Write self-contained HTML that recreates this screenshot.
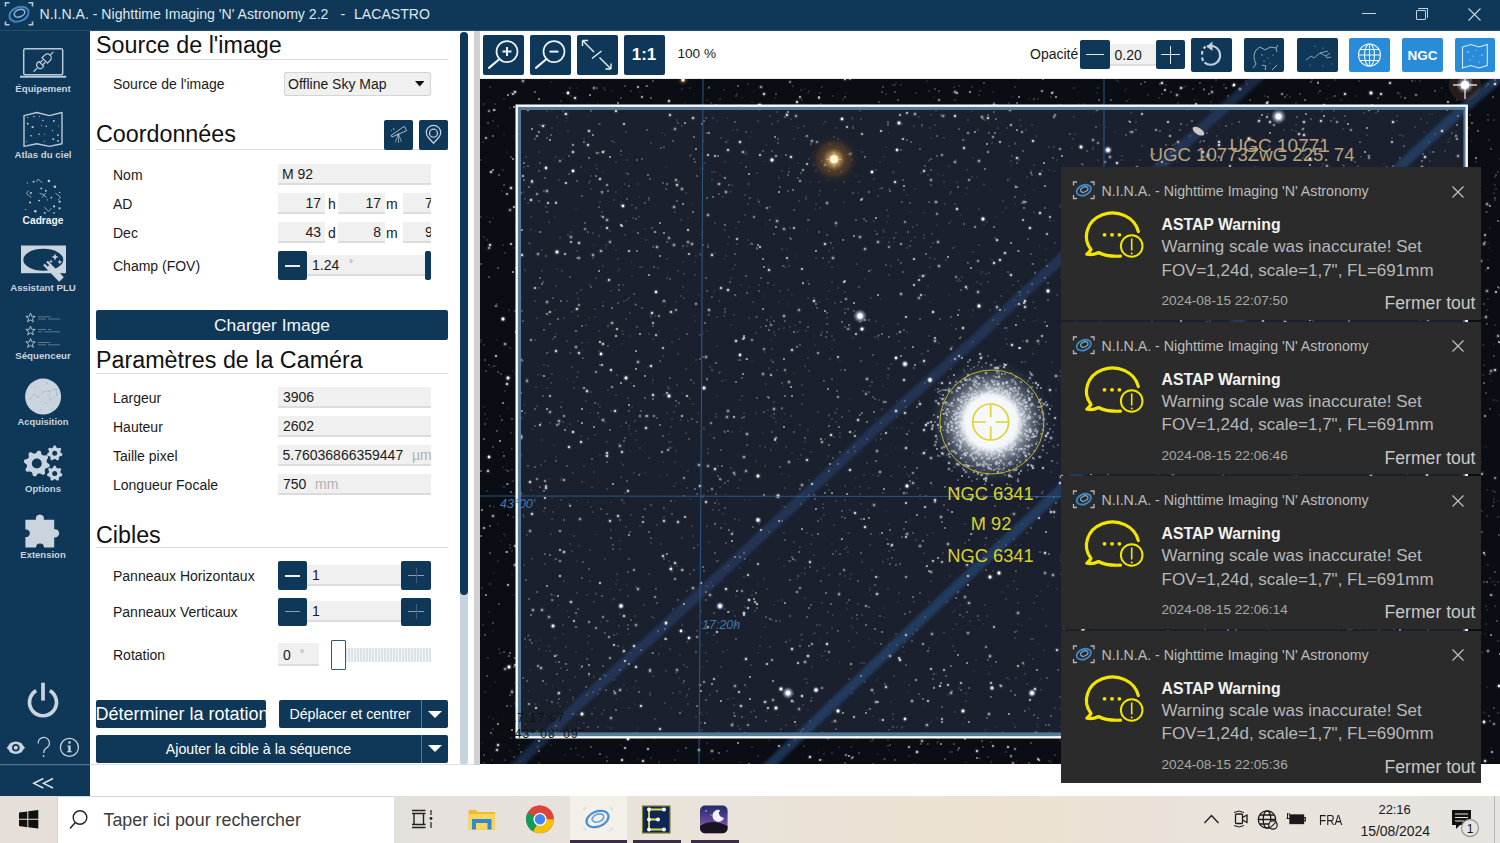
<!DOCTYPE html>
<html><head><meta charset="utf-8">
<style>
*{box-sizing:border-box;margin:0;padding:0}
html,body{width:1500px;height:843px;overflow:hidden;background:#fff;font-family:"Liberation Sans",sans-serif;}
.a{position:absolute}
.navy{background:#0e3758}
#title{left:0;top:0;width:1500px;height:31px;background:#0e3758;color:#e8eef4;font-size:14px}
#side{left:0;top:31px;width:90px;height:765px;background:#0e3758}
.slab{position:absolute;left:0;width:86px;text-align:center;color:#c9d4de;font-size:10px;font-weight:bold;}
.hd{position:absolute;left:96px;font-size:23.3px;color:#111;line-height:1}
.ul{position:absolute;left:96px;width:352px;height:1px;background:#d9d9d9}
.lb{position:absolute;left:113px;font-size:14px;color:#1a1a1a;line-height:1}
.inp{position:absolute;background:#f0f0f0;border-bottom:2px solid #dcdcdc;font-size:14px;color:#1a1a1a;line-height:1}
.btn{position:absolute;background:#0e3758;border-radius:2px}
.tb{position:absolute;background:#0e3758;border-radius:2px}
.ntf{position:absolute;left:1061px;width:420px;background:#2b2b2b;color:#c4c4c4}
.ntf .hdr{position:absolute;left:40.5px;top:17px;font-size:14.2px;color:#bcbcbc;line-height:1}
.ntf .t1{position:absolute;left:100.5px;top:50px;font-size:15.8px;font-weight:bold;color:#f2f2f2;line-height:1}
.ntf .t2{position:absolute;left:100.5px;top:71px;font-size:17px;color:#b8b8b8;line-height:1}
.ntf .t3{position:absolute;left:100.5px;top:94.8px;font-size:17px;color:#b8b8b8;line-height:1}
.ntf .ts{position:absolute;left:100.5px;top:127px;font-size:13.6px;color:#a8a8a8;line-height:1}
.ntf .ft{position:absolute;right:5.5px;top:128.3px;font-size:17.6px;color:#c8c8c8;line-height:1}
</style></head><body>
<!-- TITLE BAR -->
<div id="title" class="a">
  <div class="a" style="left:39.5px;top:5.8px;white-space:pre;font-size:14.1px;color:#dfe7ee">N.I.N.A. - Nighttime Imaging 'N' Astronomy 2.2</div>
  <div class="a" style="left:340.5px;top:5.8px;font-size:14.1px;color:#dfe7ee">-</div>
  <div class="a" style="left:354px;top:5.8px;font-size:14.1px;color:#dfe7ee">LACASTRO</div>
  <svg class="a" style="left:0;top:0" width="40" height="31" viewBox="0 0 40 31">
   <g fill="none" stroke="#b4c8d8" stroke-width="1.6">
    <path d="M5.5 6.5 V2.8 H9.5 M28.5 2.8 H32.5 V6.5 M5.5 21.5 V24.8 H9.5 M28.5 24.8 H32.5 V21.5"/>
   </g>
   <ellipse cx="19" cy="14.2" rx="10" ry="7" transform="rotate(-22 19 14.2)" fill="none" stroke="#3f86c6" stroke-width="2"/>
   <ellipse cx="19.5" cy="13.2" rx="5.5" ry="3.6" transform="rotate(-22 19.5 13.2)" fill="none" stroke="#8fb2d2" stroke-width="1.6"/>
  </svg>
  <div class="a" style="left:1362px;top:13px;width:14px;height:1px;background:#c8d4de"></div>
  <div class="a" style="left:1415.5px;top:10px;width:10px;height:10px;border:1px solid #c8d4de;border-radius:1px"></div>
  <div class="a" style="left:1417.5px;top:8px;width:10px;height:10px;border-top:1px solid #c8d4de;border-right:1px solid #c8d4de;border-radius:1px"></div>
  <svg class="a" style="left:1468px;top:8px" width="13" height="13"><path d="M0.5 0.5 L12.5 12.5 M12.5 0.5 L0.5 12.5" stroke="#c8d4de" stroke-width="1.1"/></svg>
  <div class="a" style="left:0;top:30px;width:1500px;height:1px;background:#24506f"></div>
</div>
<!-- SIDEBAR -->
<div id="side" class="a"></div>
<svg class="a" style="left:0;top:0" width="90" height="796" viewBox="0 0 90 796">
 <g fill="none" stroke="#b9c9d7" stroke-width="1.5">
  <rect x="23.7" y="48.7" width="39" height="26" rx="1.5"/>
  <path d="M20 76.8 H66.2" stroke-width="2"/>
 </g>
 <g fill="none" stroke="#b9c9d7" stroke-width="1.3" stroke-linecap="round" transform="translate(43.6 61.6) rotate(-45)">
  <path d="M-13.6 0 H-10"/>
  <path d="M-3.2 -3.2 A3.6 3.6 0 1 0 -3.2 3.2 Z"/>
  <path d="M-3.2 -1.7 H0 M-3.2 1.7 H0"/>
  <path d="M1.6 -3.8 H5.4 A3.8 3.8 0 0 1 5.4 3.8 H1.6 Z"/>
  <path d="M9.2 0 H13.4"/>
 </g>
 <path d="M24 115.6 L36.8 112.5 L49.4 115.6 L62 112.5 V143.7 L49.4 146.4 L36.8 143.7 L24 146.4 Z" fill="none" stroke="#b9c9d7" stroke-width="1.4" stroke-linejoin="round"/>
 <g fill="#c9d4de"><circle cx="27.8" cy="117.5" r="0.6"/><circle cx="34" cy="116.5" r="0.7"/><circle cx="39.5" cy="116.5" r="0.5"/><circle cx="43" cy="120.5" r="0.7"/><circle cx="53.8" cy="120.9" r="0.9"/><circle cx="27.7" cy="123.7" r="0.9"/><circle cx="32.6" cy="127" r="1.1"/><circle cx="41.5" cy="125.6" r="0.5"/><circle cx="46.3" cy="126.3" r="0.7"/><circle cx="58.5" cy="126.1" r="0.5"/><circle cx="52.6" cy="130.6" r="0.6"/><circle cx="31" cy="135.8" r="0.8"/><circle cx="39" cy="134.3" r="0.8"/><circle cx="44.7" cy="134.3" r="0.5"/><circle cx="58" cy="135.1" r="0.9"/><circle cx="53.3" cy="139.2" r="0.9"/><circle cx="58" cy="140.9" r="0.9"/><circle cx="26.5" cy="141.8" r="0.5"/><circle cx="44.5" cy="141.2" r="0.5"/></g>
 <g fill="#c4d0dc"><circle cx="48.9" cy="181" r="1.3"/><circle cx="54.9" cy="186.7" r="1.3"/><circle cx="33.6" cy="181.8" r="1"/><circle cx="27.4" cy="182.9" r="0.6"/><circle cx="41.3" cy="188.4" r="0.9"/><circle cx="45.9" cy="190.8" r="1"/><circle cx="30.9" cy="193" r="1"/><circle cx="59.6" cy="192.5" r="0.7"/><circle cx="51.4" cy="197.6" r="0.9"/><circle cx="47.3" cy="199.8" r="0.6"/><circle cx="39.1" cy="200.6" r="0.9"/><circle cx="30.1" cy="202.6" r="1"/><circle cx="59.6" cy="201.7" r="1.1"/><circle cx="54.1" cy="206.4" r="1.1"/><circle cx="59.6" cy="208.3" r="1.1"/><circle cx="25.7" cy="209.4" r="0.6"/><circle cx="35.3" cy="211.3" r="1.3"/><circle cx="44.8" cy="212.9" r="0.9"/><circle cx="54.1" cy="212.9" r="0.8"/></g>
 <g fill="none" stroke="#a9bccb" stroke-width="0.8"><path d="M36.4 182 L38 179.1 L42.4 182.9 M28.7 190.5 L26.3 193.5 L31.5 197.4 M55.5 193.3 L60.6 197.1 L58.2 199.8 M44.3 207.2 L48.6 211.3 L51.6 208.3 M39.4 193.3 Q43 193.5 46.7 197.6 M42.1 197.6 L45.6 193"/></g>
 <rect x="21" y="245.5" width="45" height="27.7" fill="#c9d4de"/>
 <ellipse cx="43.3" cy="259.8" rx="20" ry="11" fill="#0e3758"/>
 <path d="M45.5 263 L61.5 279.5" stroke="#c9d4de" stroke-width="6.5"/>
 <path d="M44.5 262 L48.5 266" stroke="#0e3758" stroke-width="2.2"/>
 <g fill="#c9d4de"><path d="M55 253.5 l1 2.6 2.6 1 -2.6 1 -1 2.6 -1 -2.6 -2.6 -1 2.6 -1z"/><path d="M59.8 259.5 l0.7 1.8 1.8 0.7 -1.8 0.7 -0.7 1.8 -0.7 -1.8 -1.8 -0.7 1.8 -0.7z"/><path d="M51 259.5 l0.6 1.4 1.4 0.6 -1.4 0.6 -0.6 1.4 -0.6 -1.4 -1.4 -0.6 1.4 -0.6z"/></g>
 <g fill="none" stroke="#b9c9d7" stroke-width="0.9">
  <path d="M30.5 313 l1.2 3.3 3.5 0.1 -2.8 2.1 1 3.4 -2.9 -2 -2.9 2 1 -3.4 -2.8 -2.1 3.5 -0.1z"/>
  <path d="M30.5 326 l1.2 3.3 3.5 0.1 -2.8 2.1 1 3.4 -2.9 -2 -2.9 2 1 -3.4 -2.8 -2.1 3.5 -0.1z"/>
  <path d="M30.5 338.5 l1.2 3.3 3.5 0.1 -2.8 2.1 1 3.4 -2.9 -2 -2.9 2 1 -3.4 -2.8 -2.1 3.5 -0.1z"/>
 </g>
 <path d="M38 316.8 H50.5 M38 319 H46 M48 319 H60 M38 329.5 H46 M48 329.5 H51 M38 331.8 H42 M44 331.8 H60 M38 342.5 H50.5 M38 344.8 H46 M48 344.8 H60" stroke="#8ea3b6" stroke-width="0.6" fill="none"/>
 <circle cx="43.1" cy="396.6" r="18" fill="#c9d4de"/>
 <g fill="#7f97ab"><circle cx="30" cy="399" r="0.55"/><circle cx="34" cy="394" r="0.55"/><circle cx="38" cy="397" r="0.55"/><circle cx="43" cy="392" r="0.55"/><circle cx="49" cy="391" r="0.55"/><circle cx="56" cy="389" r="0.55"/><circle cx="57" cy="395" r="0.55"/><circle cx="50" cy="400" r="0.55"/><circle cx="46" cy="403" r="0.55"/><circle cx="41" cy="410" r="0.55"/><circle cx="52" cy="409" r="0.55"/><circle cx="35" cy="387" r="0.55"/><circle cx="47" cy="383" r="0.55"/></g>
 <path d="M30 399 L34 394 L38 397 L43 392 L49 391 L56 389 L57 395 L50 400 L49 391" fill="none" stroke="#9fb2c3" stroke-width="0.5"/>
 <g fill="#c9d4de"><path fill-rule="evenodd" d="M49.84,464.78 L49.34,467.30 L45.80,468.31 L44.68,469.97 L45.11,473.63 L42.98,475.05 L39.76,473.26 L37.80,473.65 L35.52,476.54 L33.00,476.04 L31.99,472.50 L30.33,471.38 L26.67,471.81 L25.25,469.68 L27.04,466.46 L26.65,464.50 L23.76,462.22 L24.26,459.70 L27.80,458.69 L28.92,457.03 L28.49,453.37 L30.62,451.95 L33.84,453.74 L35.80,453.35 L38.08,450.46 L40.60,450.96 L41.61,454.50 L43.27,455.62 L46.93,455.19 L48.35,457.32 L46.56,460.54 L46.95,462.50 Z M41.8,463.5 A5,5 0 1 0 31.799999999999997,463.5 A5,5 0 1 0 41.8,463.5 Z"/><path fill-rule="evenodd" d="M62.45,454.07 L62.06,455.78 L59.70,456.34 L58.87,457.37 L58.85,459.80 L57.28,460.56 L55.36,459.06 L54.04,459.06 L52.12,460.56 L50.55,459.80 L50.53,457.37 L49.70,456.34 L47.34,455.78 L46.95,454.07 L48.84,452.54 L49.13,451.25 L48.10,449.05 L49.18,447.68 L51.56,448.20 L52.75,447.63 L53.83,445.45 L55.57,445.45 L56.65,447.63 L57.84,448.20 L60.22,447.68 L61.30,449.05 L60.27,451.25 L60.56,452.54 Z M57.2,453.2 A2.5,2.5 0 1 0 52.2,453.2 A2.5,2.5 0 1 0 57.2,453.2 Z"/><path fill-rule="evenodd" d="M62.45,474.37 L62.06,476.08 L59.70,476.64 L58.87,477.67 L58.85,480.10 L57.28,480.86 L55.36,479.36 L54.04,479.36 L52.12,480.86 L50.55,480.10 L50.53,477.67 L49.70,476.64 L47.34,476.08 L46.95,474.37 L48.84,472.84 L49.13,471.55 L48.10,469.35 L49.18,467.98 L51.56,468.50 L52.75,467.93 L53.83,465.75 L55.57,465.75 L56.65,467.93 L57.84,468.50 L60.22,467.98 L61.30,469.35 L60.27,471.55 L60.56,472.84 Z M57.2,473.5 A2.5,2.5 0 1 0 52.2,473.5 A2.5,2.5 0 1 0 57.2,473.5 Z"/></g>
 <path fill="#c9d4de" d="M25.4 519.8 H36 A4.1 4.1 0 1 1 43.8 519.8 H54.2 V529.3 A4.1 4.1 0 1 1 54.2 537.3 V547.5 H44 A4 4 0 1 0 36 547.5 H25.4 V537 A3.8 3.8 0 1 0 25.4 529.5 Z"/>
 <g fill="none" stroke="#c9d4de" stroke-width="3.7">
  <path d="M36.2 690.6 A13.5 13.5 0 1 0 49.8 690.6"/><path d="M43 682.7 V700.6"/>
 </g>
 <rect x="0" y="764" width="90" height="1.2" fill="#56758f"/>
</svg>
<div class="slab" style="top:83.3px;font-size:9.7px">Équipement</div>
<div class="slab" style="top:149.3px;font-size:9.7px">Atlas du ciel</div>
<div class="slab" style="top:215.3px;font-size:10.2px;color:#f2f5f8">Cadrage</div>
<div class="slab" style="top:282px;font-size:9.7px">Assistant PLU</div>
<div class="slab" style="top:349.5px;font-size:9.7px">Séquenceur</div>
<div class="slab" style="top:416.2px;font-size:9.4px">Acquisition</div>
<div class="slab" style="top:482.6px;font-size:9.5px">Options</div>
<div class="slab" style="top:549px;font-size:9.5px">Extension</div>
<svg class="a" style="left:0;top:730px" width="90" height="66" viewBox="0 730 90 66">
 <path d="M6.3 747.7 Q10 741.5 15.8 741.5 Q21.6 741.5 25.4 747.7 Q21.6 753.9 15.8 753.9 Q10 753.9 6.3 747.7 Z" fill="#c9d4de"/>
 <path d="M6.3 747.7 L9 744.5 M6.3 747.7 L9 751 M25.4 747.7 L22.7 744.5 M25.4 747.7 L22.7 751" stroke="#0e3758" stroke-width="1"/>
 <circle cx="15.8" cy="747.7" r="3.8" fill="#0e3758"/><circle cx="15.8" cy="747.7" r="2" fill="#c9d4de"/>
 <path d="M38.2 743.5 A5.6 5.6 0 1 1 46 748.2 Q43.7 749.6 43.7 753" fill="none" stroke="#c9d4de" stroke-width="1.3"/>
 <circle cx="43.6" cy="756" r="0.9" fill="#c9d4de"/>
 <circle cx="69.4" cy="747.4" r="9" fill="none" stroke="#c9d4de" stroke-width="1.3"/>
 <path d="M67.3 745.5 H70.6 V751.2 H71.8 V752.3 H67.1 V751.2 H68.3 V746.6 H67.3 Z" fill="#c9d4de"/>
 <circle cx="69.5" cy="742.5" r="1.3" fill="#c9d4de"/>
 <path d="M43.3 778.5 L33.8 783.3 L43.3 788 M53 778.5 L43.5 783.3 L53 788" fill="none" stroke="#dde5ec" stroke-width="1.5"/>
</svg>
<!-- LEFT PANEL -->
<div class="hd" style="top:34.2px">Source de l'image</div>
<div class="ul" style="top:58.6px"></div>
<div class="lb" style="top:77px">Source de l'image</div>
<div class="a" style="left:284px;top:72px;width:147px;height:24px;background:#f0f0f0;border:1px solid #d4d4d4;border-radius:2px"></div>
<div class="lb" style="left:288px;top:77px">Offline Sky Map</div>
<svg class="a" style="left:414.5px;top:81px" width="9.5" height="5.5"><path d="M0 0H9.5L4.75 5.5Z" fill="#111"/></svg>

<div class="hd" style="top:123.4px">Coordonnées</div>
<div class="ul" style="top:149px"></div>
<div class="btn" style="left:384px;top:120px;width:29px;height:30px"></div>
<div class="btn" style="left:419px;top:120px;width:29px;height:30px"></div>
<svg class="a" style="left:384px;top:120px" width="64" height="30" viewBox="384 120 64 30">
 <path d="M391 135.5 L404.3 126.3 L406.8 130.6 L392 137 Z" fill="none" stroke="#a9bccb" stroke-width="1"/>
 <path d="M398.2 134.5 L395.3 142.5 M398.4 134.5 L398.6 143 M398.6 134.5 L401.5 142" stroke="#8fa5b8" stroke-width="0.9"/>
 <circle cx="398.3" cy="134.5" r="1" fill="#c9d4de"/>
 <circle cx="393.7" cy="129" r="0.8" fill="#a9bccb"/><circle cx="391.5" cy="130.6" r="0.5" fill="#a9bccb"/>
 <path d="M433.5 143.3 L428.3 137.5 A7.2 7.2 0 1 1 438.7 137.5 Z" fill="none" stroke="#c4d0dc" stroke-width="1.3" stroke-linejoin="round"/>
 <circle cx="433.5" cy="133.2" r="4" fill="none" stroke="#c4d0dc" stroke-width="1.3"/>
</svg>

<div class="lb" style="top:168px">Nom</div>
<div class="inp" style="left:278px;top:164px;width:153px;height:21px"><span class="a" style="left:4px;top:3px">M 92</span></div>
<div class="lb" style="top:197px">AD</div>
<div class="inp" style="left:278px;top:193px;width:47px;height:21px"><span class="a" style="right:4px;top:3px">17</span></div>
<div class="lb" style="left:328px;top:197px">h</div>
<div class="inp" style="left:338px;top:193px;width:47px;height:21px"><span class="a" style="right:4px;top:3px">17</span></div>
<div class="lb" style="left:386px;top:197px">m</div>
<div class="inp" style="left:403px;top:193px;width:28px;height:21px;overflow:hidden"><span class="a" style="left:22px;top:3px">7</span></div>
<div class="lb" style="top:226px">Dec</div>
<div class="inp" style="left:278px;top:222px;width:47px;height:21px"><span class="a" style="right:4px;top:3px">43</span></div>
<div class="lb" style="left:328px;top:226px">d</div>
<div class="inp" style="left:338px;top:222px;width:47px;height:21px"><span class="a" style="right:4px;top:3px">8</span></div>
<div class="lb" style="left:386px;top:226px">m</div>
<div class="inp" style="left:403px;top:222px;width:28px;height:21px;overflow:hidden"><span class="a" style="left:22px;top:3px">9</span></div>
<div class="lb" style="top:259px">Champ (FOV)</div>
<div class="inp" style="left:307px;top:255px;width:118px;height:21px"><span class="a" style="left:5px;top:3px">1.24</span><span class="a" style="left:42px;top:3.5px;font-size:10px;color:#999">°</span></div>
<div class="btn" style="left:278px;top:251px;width:29px;height:29px;border-radius:2px"></div>
<div class="a" style="left:285px;top:265px;width:15px;height:1.5px;background:#e8eef3"></div>
<div class="btn" style="left:425px;top:251px;width:6px;height:29px"></div>

<div class="btn" style="left:96px;top:310px;width:352px;height:30px;color:#f4f7fa;font-size:17.4px;text-align:center;line-height:30px">Charger Image</div>
<div class="hd" style="top:348.5px">Paramètres de la Caméra</div>
<div class="ul" style="top:373px"></div>
<div class="lb" style="top:391px">Largeur</div>
<div class="inp" style="left:278px;top:387px;width:153px;height:21px"><span class="a" style="left:5px;top:3px">3906</span></div>
<div class="lb" style="top:420px">Hauteur</div>
<div class="inp" style="left:278px;top:416px;width:153px;height:21px"><span class="a" style="left:5px;top:3px">2602</span></div>
<div class="lb" style="top:449px">Taille pixel</div>
<div class="inp" style="left:278px;top:445px;width:153px;height:21px;overflow:hidden"><span class="a" style="left:4.5px;top:3px">5.76036866359447</span><span class="a" style="left:134px;top:3px;color:#b0b0b0">µm</span></div>
<div class="lb" style="top:478px">Longueur Focale</div>
<div class="inp" style="left:278px;top:474px;width:153px;height:21px"><span class="a" style="left:5px;top:3px">750</span><span class="a" style="left:37px;top:3px;color:#b0b0b0">mm</span></div>

<div class="hd" style="top:524.2px">Cibles</div>
<div class="ul" style="top:547px"></div>
<div class="lb" style="top:569px">Panneaux Horizontaux</div>
<div class="inp" style="left:307px;top:565px;width:95px;height:21px"><span class="a" style="left:5px;top:3px">1</span></div>
<div class="btn" style="left:278px;top:561px;width:29px;height:29px"></div>
<div class="a" style="left:285px;top:575px;width:15px;height:2px;background:#f0f4f7"></div>
<div class="btn" style="left:401px;top:561px;width:30px;height:29px"></div>
<div class="a" style="left:408px;top:575px;width:16px;height:1px;background:#8aa0b4"></div>
<div class="a" style="left:415.5px;top:568px;width:1px;height:15px;background:#3f6080"></div>
<div class="lb" style="top:605px">Panneaux Verticaux</div>
<div class="inp" style="left:307px;top:601px;width:95px;height:21px"><span class="a" style="left:5px;top:3px">1</span></div>
<div class="btn" style="left:278px;top:598px;width:29px;height:28px"></div>
<div class="a" style="left:285px;top:611px;width:15px;height:1px;background:#8aa0b4"></div>
<div class="btn" style="left:401px;top:598px;width:30px;height:28px"></div>
<div class="a" style="left:408px;top:611px;width:16px;height:1px;background:#8aa0b4"></div>
<div class="a" style="left:415.5px;top:604px;width:1px;height:15px;background:#3f6080"></div>
<div class="lb" style="top:648px">Rotation</div>
<div class="inp" style="left:278px;top:643px;width:41px;height:23px"><span class="a" style="left:5px;top:5px">0</span><span class="a" style="left:22px;top:5.5px;font-size:10px;color:#999">°</span></div>
<div class="a" style="left:345px;top:648px;width:86px;height:14px;background:repeating-linear-gradient(90deg,#dce3e9 0 2px,#f3f5f7 2px 3px)"></div>
<div class="a" style="left:331px;top:640px;width:15px;height:29.5px;border:1.5px solid #2d5a80;background:#fff;border-radius:1px"></div>

<div class="btn" style="left:95.5px;top:700px;width:170px;height:28px;color:#fff;font-size:18px;line-height:28px;white-space:nowrap;text-align:center;letter-spacing:0px">Déterminer la rotation</div>
<div class="btn" style="left:278.5px;top:700px;width:169px;height:28px"></div>
<div class="a" style="left:278.5px;top:700px;width:143px;height:28px;color:#fff;font-size:14.25px;line-height:28px;text-align:center">Déplacer et centrer</div>
<div class="a" style="left:421px;top:700px;width:1px;height:28px;background:#5d7a93"></div>
<svg class="a" style="left:428px;top:711px" width="14" height="8"><path d="M0 0H14L7 7Z" fill="#fff"/></svg>
<div class="btn" style="left:95.5px;top:734.5px;width:352px;height:28.5px"></div>
<div class="a" style="left:96px;top:734.5px;width:325px;height:28.5px;color:#fff;font-size:14.2px;line-height:29px;text-align:center">Ajouter la cible à la séquence</div>
<div class="a" style="left:421px;top:734.5px;width:1px;height:28.5px;background:#5d7a93"></div>
<svg class="a" style="left:428px;top:745px" width="14" height="8"><path d="M0 0H14L7 7Z" fill="#fff"/></svg>

<!-- scrollbar -->
<div class="a" style="left:460px;top:32px;width:8px;height:733px;background:#c6d4df;border-radius:4px"></div>
<div class="a" style="left:460px;top:32px;width:8px;height:563px;background:#0e3758;border-radius:4px"></div>
<div class="a" style="left:474px;top:31px;width:6px;height:734px;background:#d2d2d2"></div>
<div class="a" style="left:90px;top:764px;width:384px;height:1px;background:#e0e0e0"></div>

<!-- TOOLBAR -->
<div class="a" style="left:480px;top:78px;width:1020px;height:1px;background:#e8e8e8"></div>
<div class="tb" style="left:483px;top:35px;width:41px;height:40px"></div>
<div class="tb" style="left:530px;top:35px;width:41px;height:40px"></div>
<div class="tb" style="left:577px;top:35px;width:41px;height:40px"></div>
<div class="tb" style="left:623.5px;top:35px;width:41px;height:40px;color:#fff;font-weight:bold;font-size:17px;text-align:center;line-height:40px">1:1</div>
<svg class="a" style="left:480px;top:32px" width="140" height="46" viewBox="480 32 140 46" fill="none" stroke="#eef2f5" stroke-width="1.7">
 <circle cx="507" cy="51.6" r="10.5"/><path d="M499.5 59 L489 67.8" stroke-width="2.2" stroke-linecap="round"/><path d="M502.5 51.6 H511.5 M507 47.1 V56.1" stroke-width="2"/>
 <circle cx="554" cy="51.6" r="10.5"/><path d="M546.5 59 L536 67.8" stroke-width="2.2" stroke-linecap="round"/><path d="M549.5 51.6 H558.5" stroke-width="2"/>
 <path d="M582.5 40.5 L594 52 M599.5 57.5 L611 69 M582.5 40.5 V46 M582.5 40.5 H588 M611 69 V63.5 M611 69 H605.5 M592 58.5 L601.5 51" stroke-width="1.4"/>
</svg>
<div class="a" style="left:677.5px;top:47px;font-size:13.6px;color:#1a1a1a;line-height:1">100 %</div>
<div class="a" style="left:1030px;top:47px;font-size:14px;color:#1a1a1a;line-height:1">Opacité</div>
<div class="inp" style="left:1109px;top:44px;width:48px;height:21.5px"><span class="a" style="left:5.5px;top:3.5px">0.20</span></div>
<div class="tb" style="left:1080px;top:40px;width:30px;height:29px"></div>
<div class="a" style="left:1086px;top:54px;width:18px;height:1.4px;background:#dfe6ec"></div>
<div class="tb" style="left:1156px;top:40px;width:29px;height:29px"></div>
<div class="a" style="left:1161px;top:54px;width:19px;height:1.4px;background:#dfe6ec"></div>
<div class="a" style="left:1169.8px;top:45.5px;width:1.4px;height:18px;background:#dfe6ec"></div>
<div class="tb" style="left:1191px;top:38px;width:41px;height:34px"></div>
<div class="tb" style="left:1244px;top:38px;width:40px;height:34px"></div>
<div class="tb" style="left:1297px;top:38px;width:41px;height:34px"></div>
<div class="tb" style="left:1349px;top:38px;width:41px;height:34px;background:#288cd8"></div>
<div class="tb" style="left:1402px;top:38px;width:41px;height:34px;background:#288cd8;color:#fff;font-weight:bold;font-size:13.5px;text-align:center;line-height:35px">NGC</div>
<div class="tb" style="left:1455px;top:38px;width:40px;height:34px;background:#288cd8"></div>
<svg class="a" style="left:1190px;top:36px" width="310" height="38" viewBox="1190 36 310 38" fill="none" stroke="#c3d0db" stroke-width="1.8">
 <path d="M1207 46.5 A9.5 9.5 0 1 1 1204.5 62.5" stroke-width="2.2"/>
 <path d="M1203 61 L1202 57.5 M1202 54.5 L1202.3 51 M1203.6 48.5 L1205.5 46.5" stroke-width="2.2"/>
 <path d="M1212.5 41.5 L1206.5 46.5 L1212.5 51 Z" fill="#c3d0db" stroke="none"/>
 <g stroke-width="0.9" stroke="#a9bccb">
  <path d="M1256 50 Q1252 56 1256 64 L1253 68 M1256 50 L1260 47 L1265 50 L1270 47 L1276 48 L1278 45 M1276 48 L1277 52 M1262 65 L1266 66 L1265 70 M1272 70 L1277 65"/>
 </g>
 <g fill="#a9bccb" stroke="none"><circle cx="1262" cy="55" r="0.7"/><circle cx="1268" cy="58" r="0.6"/><circle cx="1273" cy="55" r="0.6"/><circle cx="1264" cy="61" r="0.6"/><circle cx="1270" cy="63" r="0.5"/></g>
 <g stroke-width="0.8" stroke="#a9bccb"><path d="M1306 60 L1311 56 L1314 58 L1320 53 L1326 56 L1330 53 M1320 53 L1328 51 M1326 56 L1327 58 L1331 57"/></g>
 <g fill="#a9bccb" stroke="none"><circle cx="1315" cy="46" r="0.6"/><circle cx="1323" cy="48" r="0.6"/><circle cx="1310" cy="65" r="0.5"/><circle cx="1323" cy="66" r="0.5"/><circle cx="1332" cy="64" r="0.5"/></g>
 <g stroke="#f4f8fb" stroke-width="1.1">
  <circle cx="1369.5" cy="55" r="11"/><ellipse cx="1369.5" cy="55" rx="5" ry="11"/><path d="M1369.5 44 V66 M1358.5 55 H1380.5 M1360 49.5 H1379 M1360 60.5 H1379"/>
 </g>
 <g stroke="#dbe9f5" stroke-width="1.1"><path d="M1462.5 47 L1470.8 44.5 L1479 47 L1487.3 44.5 V65.5 L1479 68 L1470.8 65.5 L1462.5 68 Z"/></g>
 <g fill="#dbe9f5" stroke="none"><circle cx="1468" cy="52" r="0.8"/><circle cx="1476" cy="50" r="0.6"/><circle cx="1482" cy="55" r="0.7"/><circle cx="1470" cy="60" r="0.6"/><circle cx="1479" cy="62" r="0.6"/><circle cx="1473" cy="56" r="0.5"/></g>
</svg>
<div class="a" style="left:90px;top:765px;width:1410px;height:31px;background:#fff"></div>
<!-- IMAGE -->
<svg class="a" style="left:480px;top:79px" width="1020" height="685" viewBox="480 79 1020 685">
<defs>
<radialGradient id="clg" cx="0.5" cy="0.5" r="0.5">
 <stop offset="0" stop-color="#ffffff" stop-opacity="1"/>
 <stop offset="0.4" stop-color="#f4f6fa" stop-opacity="0.97"/>
 <stop offset="0.6" stop-color="#c0cad8" stop-opacity="0.55"/>
 <stop offset="0.85" stop-color="#6a7890" stop-opacity="0.2"/>
 <stop offset="1" stop-color="#3a4a60" stop-opacity="0"/>
</radialGradient>
<radialGradient id="org" cx="0.5" cy="0.5" r="0.5">
 <stop offset="0" stop-color="#fff6d0"/>
 <stop offset="0.15" stop-color="#f0c070" stop-opacity="0.9"/>
 <stop offset="0.45" stop-color="#8a5a28" stop-opacity="0.45"/>
 <stop offset="1" stop-color="#3a2010" stop-opacity="0"/>
</radialGradient>
<radialGradient id="wst" cx="0.5" cy="0.5" r="0.5">
 <stop offset="0" stop-color="#ffffff"/>
 <stop offset="0.35" stop-color="#e8f0ff" stop-opacity="0.85"/>
 <stop offset="1" stop-color="#6080b0" stop-opacity="0"/>
</radialGradient>
<filter id="bls" filterUnits="userSpaceOnUse" x="470" y="40" width="1060" height="760"><feGaussianBlur stdDeviation="1.6"/></filter>
<filter id="bl2" x="-50%" y="-50%" width="200%" height="200%"><feGaussianBlur stdDeviation="2"/></filter>
<filter id="bl0" filterUnits="userSpaceOnUse" x="470" y="70" width="1040" height="705"><feGaussianBlur stdDeviation="0.6"/></filter>
</defs>
<rect x="480" y="79" width="1020" height="685" fill="#0b0d15"/>
<rect x="518" y="108" width="947" height="627" fill="#1a202e"/>
<path d="M500 781 L520 762 L580 703 L649.3 640 L729.3 566 L799.5 500 C880 425 930 378 976 339 C1060 258 1150 176 1224 108 L1275 62" fill="none" stroke="#2c5890" stroke-width="10" stroke-opacity="0.38" filter="url(#bls)"/>
<path d="M749.6 784 L770.5 764 L833.3 704 L897.3 642.7 L961 582 L1061 489.5 L1403 164 C1440 128 1470 103 1510 68" fill="none" stroke="#2c5890" stroke-width="10" stroke-opacity="0.5" filter="url(#bls)"/>
<g fill="none"><path d="M1463 663h0M612 387h0M1430 219h0M557 425h0M589 622h0M1168 297h0M752 340h0M585 229h0M852 758h0M1278 338h0M1150 508h0M684 478h0M1194 445h0M1416 95h0M1111 388h0M904 493h0M654 416h0M1093 544h0M1308 310h0M516 332h0M1268 633h0M1018 481h0M1411 418h0M696 304h0M1342 672h0M822 688h0M720 479h0M1139 180h0M1241 569h0M956 277h0M1175 481h0M884 402h0M975 227h0M711 423h0M1248 305h0M1043 430h0M800 588h0M697 637h0M807 136h0M846 755h0M776 737h0M712 489h0M1292 453h0M1386 512h0M1055 115h0M1420 709h0M771 325h0M754 217h0M1219 157h0M1122 311h0M1101 214h0M767 208h0M828 738h0M1438 520h0M1470 478h0M1162 577h0M1456 136h0" stroke="#e6ecf8" stroke-opacity="0.1" stroke-width="4.2" stroke-linecap="round"/><path d="M622 226h0M1311 244h0M1047 234h0M1191 728h0M1184 205h0M1023 220h0M909 747h0M1433 654h0M1233 660h0M715 156h0M1106 496h0M1030 700h0M1223 614h0M1448 102h0M819 98h0M1267 117h0M928 423h0M1323 463h0M642 97h0M1258 252h0M602 365h0M1143 254h0M550 396h0M942 719h0M682 416h0M1466 559h0M1392 347h0M1170 136h0M1462 88h0M1016 187h0M1000 142h0M1294 373h0M807 164h0M1482 474h0M779 746h0M565 254h0M820 760h0M944 670h0M1255 196h0M971 500h0M520 297h0M1038 759h0M1165 454h0M854 717h0M603 217h0M1438 655h0M560 550h0M1274 356h0M761 530h0M1326 620h0M708 627h0M800 97h0M940 686h0M571 242h0M771 375h0M1263 321h0M494 110h0M959 356h0M1094 585h0M1334 479h0M1295 651h0M574 621h0M980 354h0M1499 342h0M1443 666h0M961 683h0M1039 760h0M1209 551h0M546 486h0M667 393h0M484 528h0M1295 755h0M1202 447h0M1276 360h0" stroke="#e6ecf8" stroke-opacity="0.1" stroke-width="4.2" stroke-linecap="round"/><path d="M560 561h0M748 725h0M851 664h0M596 372h0M1464 755h0M1391 303h0M988 152h0M742 591h0M1221 245h0M1074 567h0M1467 224h0M1291 275h0M986 647h0M1154 521h0M1369 158h0M829 652h0M785 370h0M655 597h0M659 316h0M1351 130h0M937 214h0M1223 520h0M597 153h0M935 502h0M848 329h0M1105 595h0M1098 143h0M1128 396h0M1166 556h0M596 628h0M968 133h0M913 473h0M603 617h0M1258 488h0M1296 361h0M640 416h0M981 520h0M1015 749h0M1032 445h0M1471 334h0M743 339h0M916 680h0M1190 483h0M1462 307h0M1011 756h0M1361 311h0M1023 663h0M942 399h0M1105 675h0M547 314h0M790 82h0M537 479h0M844 570h0M905 222h0M496 306h0M537 136h0M1319 246h0M1105 162h0M1265 215h0M704 682h0M1135 457h0M1054 117h0M1369 156h0M579 305h0M865 320h0M1207 157h0M1395 587h0M1344 324h0" stroke="#f2ece0" stroke-opacity="0.1" stroke-width="4.2" stroke-linecap="round"/><path d="M935 338h0M906 635h0M508 585h0M524 736h0M1399 441h0M1166 585h0M1162 162h0M1011 125h0M1139 214h0M758 564h0M1075 349h0M1370 192h0M732 534h0M564 480h0M714 679h0M507 194h0M656 335h0M942 562h0M900 115h0M1480 462h0M930 379h0M1133 711h0M957 93h0M1329 345h0M550 312h0M1321 507h0M1073 359h0M515 665h0M666 639h0M993 746h0M1223 410h0M994 627h0M689 254h0M1133 184h0M1485 235h0M1129 586h0M1194 348h0M1464 323h0M616 336h0M1394 220h0M1160 577h0M1317 484h0M532 181h0M787 258h0M555 656h0M643 522h0M838 357h0M1292 325h0M1136 561h0M1398 518h0M1492 752h0M638 87h0M862 134h0M523 176h0M1050 217h0M486 138h0M515 546h0M1115 177h0M775 440h0M1018 666h0M1491 595h0M1141 299h0M1042 336h0M653 323h0M1427 409h0M906 503h0M734 417h0M755 602h0M514 207h0M1008 107h0M1488 268h0M1429 465h0M1297 193h0M855 436h0M1254 395h0" stroke="#f2ece0" stroke-opacity="0.1" stroke-width="4.2" stroke-linecap="round"/><path d="M850 79h0M634 570h0M1453 348h0M1474 440h0M1218 271h0M1084 737h0M1443 736h0M857 736h0M1462 520h0M1262 757h0M662 452h0M529 704h0M1132 360h0M901 244h0M1337 617h0M1342 243h0M1337 122h0M528 110h0M1388 522h0M817 142h0M866 606h0M531 340h0M1022 132h0M866 394h0M675 579h0M560 161h0M545 481h0M1191 221h0M939 100h0M1164 218h0M1442 545h0M1248 398h0M1367 264h0M1303 691h0M838 397h0M862 199h0M812 644h0M1254 568h0M1389 356h0M1282 94h0M489 111h0M978 261h0M1118 420h0M1121 300h0M537 194h0M923 644h0M564 416h0M1274 125h0M803 170h0M1371 301h0M772 660h0M1249 533h0M1417 289h0M1080 440h0M942 155h0M1007 445h0M573 145h0M1287 412h0M1060 149h0M1274 399h0M797 592h0M700 685h0M1408 484h0M1205 582h0M846 299h0M668 450h0M951 349h0M1369 110h0M974 409h0M602 192h0M1439 217h0M1156 130h0M1013 763h0M1042 91h0M1494 724h0M776 156h0M610 658h0M764 349h0M1423 439h0M1203 157h0M955 359h0M800 181h0M1137 167h0M979 434h0M538 666h0M1158 414h0M1495 478h0M776 438h0M609 637h0M1469 618h0M1143 502h0M1250 607h0M1285 451h0M1220 309h0M818 353h0M584 388h0M1413 609h0M1457 139h0M1062 556h0M1225 698h0M560 531h0M1302 614h0M1197 576h0M993 137h0M1303 129h0M1145 261h0M1224 620h0M906 577h0M889 247h0M1354 265h0M969 180h0M1390 338h0M1317 341h0M1480 633h0M1217 600h0M1447 418h0M1477 512h0M655 232h0M831 108h0M1320 151h0M1428 320h0M676 310h0M1131 563h0M1485 416h0M1292 333h0M1329 756h0M900 332h0M1179 353h0M607 185h0M1098 364h0" stroke="#ffffff" stroke-opacity="0.1" stroke-width="4.2" stroke-linecap="round"/><path d="M903 139h0M1052 93h0M1484 553h0M1496 292h0M1433 557h0M1227 307h0M850 432h0M1411 516h0M717 632h0M1214 485h0M919 280h0M648 749h0M1165 90h0M1158 473h0M1388 363h0M856 334h0M1445 188h0M1275 607h0M906 537h0M933 561h0M1242 459h0M921 295h0M1352 457h0M1142 114h0M931 669h0M748 608h0M1039 518h0M798 663h0M768 708h0M629 251h0M1389 276h0M748 575h0M708 155h0M1351 209h0M767 664h0M540 425h0M1392 142h0M600 583h0M1203 262h0M739 692h0M625 748h0M1196 104h0M1019 304h0M1427 412h0M1418 760h0M883 720h0M812 484h0M948 685h0M545 498h0M548 203h0M899 658h0M1177 463h0M621 225h0M1419 640h0M737 239h0M906 317h0M1216 277h0M513 94h0M701 583h0M802 269h0M1288 383h0M1369 409h0M928 701h0M1033 434h0M535 288h0M757 604h0M511 244h0M759 109h0M496 356h0M624 124h0M925 507h0M566 183h0M1335 500h0M1230 166h0M536 708h0M914 259h0M625 661h0M663 348h0M1168 122h0M847 127h0M744 615h0M556 203h0M844 282h0M600 342h0M1027 439h0M1154 297h0M1145 719h0M520 493h0M744 338h0M968 576h0M886 433h0M876 577h0M760 155h0M1043 468h0M932 429h0M1183 298h0M794 228h0M881 131h0M760 247h0M1029 446h0M1339 304h0M1294 651h0M1024 303h0M1008 747h0M1324 105h0M617 329h0M687 396h0M907 113h0M614 645h0M1159 500h0M1337 381h0M688 230h0M991 683h0M972 562h0M685 517h0M560 576h0M1020 348h0M914 285h0" stroke="#ffffff" stroke-opacity="0.1" stroke-width="4.2" stroke-linecap="round"/><path d="M1015 415h0M987 426h0M987 393h0M986 427h0M996 431h0M992 450h0M988 466h0M998 429h0M995 381h0M994 420h0M982 428h0M996 408h0M964 397h0M992 420h0M962 431h0M990 421h0M984 423h0M1003 422h0M954 431h0M998 382h0M972 415h0M960 448h0M1009 463h0M992 423h0M989 417h0M972 410h0M997 420h0M999 417h0M986 398h0M988 415h0M980 419h0M976 421h0M1009 475h0M992 419h0M986 406h0M987 404h0M992 415h0M999 469h0M991 420h0M936 442h0M999 426h0M990 420h0M994 423h0M995 423h0M1009 423h0M993 410h0M991 424h0M998 410h0M967 380h0M960 413h0M979 425h0M979 421h0M1014 407h0M986 424h0M1002 394h0M979 415h0M1006 432h0M1024 412h0M993 430h0M1009 430h0M977 465h0M971 440h0M983 465h0M988 450h0M1009 413h0M993 435h0M1026 456h0M968 417h0M992 422h0M958 440h0M987 421h0M984 428h0M1002 431h0M992 412h0M972 427h0M973 424h0M1004 408h0M1010 427h0M951 404h0M992 424h0M1039 402h0M998 398h0M991 422h0M988 427h0M969 435h0M982 396h0M974 385h0M967 406h0M981 399h0M978 415h0M1009 434h0M993 428h0M1003 436h0M1010 409h0M982 399h0M1004 464h0M970 441h0M986 421h0M969 466h0M991 434h0M961 422h0M994 423h0M990 426h0M967 438h0M992 433h0M977 387h0M1016 408h0M1016 395h0M987 429h0M992 423h0M957 464h0M982 418h0M989 421h0M969 411h0M996 436h0M992 421h0M960 426h0M997 416h0M980 438h0M997 429h0M983 424h0M987 416h0M1006 412h0M996 421h0M968 433h0M998 428h0M990 420h0M1003 408h0M988 404h0M990 411h0M1025 449h0M987 393h0M976 427h0M994 420h0M1025 416h0M985 409h0M1009 476h0M991 417h0M990 430h0M991 422h0M973 381h0M965 410h0M981 439h0M982 418h0M991 417h0M1002 424h0M987 433h0M988 419h0M1043 414h0M983 414h0M1013 442h0M1026 436h0M991 365h0M991 427h0M992 413h0M991 431h0M1007 419h0M988 435h0M1029 415h0M1006 445h0M997 464h0M1004 393h0M993 421h0M993 427h0M990 422h0M1030 412h0M990 412h0M989 424h0M1022 449h0M1002 430h0M996 434h0M991 421h0M978 473h0M991 419h0M966 455h0M995 447h0M961 412h0M972 404h0M997 462h0M987 404h0M970 427h0M954 451h0M947 430h0M981 421h0M990 443h0M960 425h0M993 422h0M1014 397h0M1040 457h0M955 438h0M985 428h0M989 433h0M990 423h0M989 391h0M952 423h0M986 464h0M988 410h0M989 421h0M1008 417h0M978 410h0M981 424h0M962 429h0M986 479h0M989 458h0M989 413h0M1007 403h0M987 426h0M1004 448h0M949 412h0M985 434h0M1032 375h0M1003 408h0M1003 426h0M1032 405h0M963 424h0M990 424h0M1002 418h0M995 440h0M989 413h0M981 425h0M983 423h0M986 399h0M984 381h0M1002 393h0M1007 444h0M961 436h0M1020 462h0M1030 378h0M969 436h0M1010 448h0M994 438h0M1007 430h0M989 421h0M986 441h0M961 435h0M977 415h0M953 442h0M997 416h0M983 439h0M1002 416h0M1005 425h0M990 422h0M988 423h0M1021 413h0M1016 377h0M944 447h0M966 472h0M991 422h0M995 435h0M943 399h0M985 439h0M971 427h0M991 427h0M1009 431h0M994 421h0M987 474h0M1026 460h0M1022 409h0M989 393h0M979 400h0M1006 406h0M936 401h0M991 420h0M976 428h0M1013 380h0M980 412h0M942 448h0M1013 423h0M1011 443h0M985 423h0M992 446h0M987 383h0M991 422h0M975 420h0M970 426h0M1016 384h0M1014 470h0M992 426h0M1002 440h0M967 410h0M1005 405h0M983 433h0M991 423h0M991 422h0M973 445h0M993 423h0M981 424h0M999 437h0M989 421h0M1032 394h0M935 445h0M1000 421h0M991 426h0M977 377h0M1029 409h0M982 419h0M977 417h0M991 425h0M987 418h0M1026 446h0M1017 434h0M989 395h0M949 469h0M980 423h0M1028 447h0M1000 424h0M1006 424h0M976 440h0M1002 406h0M1005 418h0M1006 392h0M985 398h0M949 405h0M1005 402h0M998 457h0M997 371h0M992 426h0M1001 419h0M993 408h0M993 435h0M1015 382h0M971 415h0M1005 421h0M989 448h0M980 445h0M979 420h0M1027 436h0M982 420h0M1006 448h0M1019 421h0M994 421h0M1015 420h0M979 455h0M986 432h0M990 397h0M990 432h0M947 410h0M970 379h0M961 406h0M1004 393h0M971 419h0M996 422h0M1021 425h0M949 389h0M1002 392h0M988 420h0M999 428h0M1006 412h0M959 388h0M1004 420h0M1036 436h0M978 452h0M986 418h0M946 446h0M1015 436h0M957 428h0M963 430h0M995 421h0M994 426h0M978 427h0M991 427h0M994 416h0M967 432h0M988 430h0M999 463h0M968 428h0M995 433h0M989 419h0M1006 415h0M994 420h0M983 420h0M960 449h0M990 440h0M984 407h0M973 417h0M986 387h0M987 420h0M990 423h0M991 422h0M989 410h0M992 422h0M1009 416h0M972 417h0M998 442h0M1003 419h0M994 422h0M997 418h0M996 442h0M980 429h0M1007 428h0M983 428h0M997 432h0M1004 414h0M993 421h0M975 418h0M970 444h0M1015 443h0M1008 386h0M992 422h0M943 454h0M991 427h0M1005 427h0M983 413h0M995 404h0M999 421h0M996 427h0M987 422h0M998 408h0M992 442h0M999 390h0M993 424h0M999 388h0M955 420h0M993 434h0M1011 449h0M995 423h0M1044 404h0M994 432h0M1044 419h0M998 426h0M1000 435h0M1009 419h0M1000 406h0M1031 374h0M984 423h0M961 400h0M1015 408h0M967 453h0M991 421h0M1042 412h0M991 455h0M1021 382h0M1001 401h0M939 404h0M1030 431h0M1012 454h0M996 406h0M1023 404h0M992 394h0M1025 407h0M1017 433h0M1024 419h0M964 433h0M966 465h0M991 422h0M976 436h0M991 425h0M1010 447h0M1000 439h0M1005 434h0M1008 425h0M1013 439h0M991 419h0M965 405h0M1003 403h0M952 451h0" stroke="#e8eef8" stroke-opacity="0.1" stroke-width="4.4" stroke-linecap="round"/><path d="M996 415h0M998 422h0M1010 439h0M971 413h0M1012 406h0M984 429h0M1010 420h0M1009 397h0M995 419h0M972 429h0M963 440h0M970 425h0M946 413h0M1014 412h0M982 427h0M1026 403h0M993 434h0M1004 456h0M996 405h0M978 412h0M1000 434h0M993 432h0M989 435h0M988 421h0M997 433h0M986 415h0M998 423h0M988 417h0M959 409h0M991 422h0M997 410h0M985 446h0M992 426h0M997 422h0M997 440h0M983 420h0M1017 400h0M990 421h0M952 426h0M1022 415h0M958 399h0M986 440h0M990 421h0M1000 424h0M938 417h0M988 420h0M983 417h0M998 429h0M1011 424h0M942 383h0M1019 403h0M1007 391h0M982 415h0M993 422h0M990 422h0M968 466h0M999 432h0M985 412h0M993 427h0M982 458h0M986 421h0M965 455h0M1015 404h0M960 441h0M1000 401h0M982 409h0M992 419h0M974 440h0M948 432h0M965 439h0M984 422h0M988 409h0M996 434h0M1012 419h0M988 417h0M991 422h0M969 445h0M985 406h0M996 389h0M1007 402h0M975 436h0M1008 433h0M992 422h0M995 368h0M991 422h0M1030 429h0M972 397h0M981 409h0M1015 445h0M999 455h0M991 422h0M1011 404h0M938 425h0M968 375h0M1000 446h0M1008 394h0M979 378h0M982 445h0M1020 419h0M1010 433h0M990 431h0M985 424h0M987 434h0M957 413h0M1008 408h0M987 403h0M970 437h0M976 453h0M996 463h0M996 418h0M1013 414h0M980 442h0M969 411h0M956 453h0M1013 428h0M962 426h0M981 421h0M998 429h0M990 410h0M1016 428h0M995 418h0M993 410h0M993 417h0M1015 388h0M995 427h0M1006 427h0M991 429h0M961 442h0M936 436h0M1035 414h0M993 423h0M980 435h0M985 429h0M977 398h0M1024 452h0M998 368h0M1013 432h0M1013 421h0M970 442h0M976 438h0M998 384h0M948 424h0M976 436h0M1027 431h0M975 428h0M985 411h0M988 388h0M999 377h0M994 454h0M983 397h0M949 391h0M991 408h0M983 405h0M991 402h0M992 423h0M987 437h0M982 429h0M968 410h0M991 415h0M950 383h0M941 427h0M997 421h0M1014 454h0M983 428h0M949 444h0M1021 449h0M983 423h0M1000 452h0M993 447h0M996 437h0M979 420h0M1004 415h0M996 427h0M1029 454h0M984 434h0M1040 400h0M963 439h0M951 422h0M984 462h0M973 422h0M983 433h0M999 419h0M968 419h0M991 420h0M1029 398h0M1002 429h0M993 403h0M991 422h0M975 394h0M1009 434h0M1009 408h0M990 421h0M987 422h0M1027 406h0M1005 427h0M1026 456h0M985 410h0M995 394h0M982 431h0M989 421h0M988 431h0M995 432h0M948 425h0M989 423h0M1001 413h0M987 455h0M1015 406h0M1030 417h0M984 421h0M948 427h0M979 415h0M998 414h0M998 472h0M984 428h0M1001 416h0M981 418h0M971 399h0M997 414h0M970 388h0M957 391h0M996 418h0M983 422h0M1011 407h0M992 432h0M994 454h0M994 426h0M992 423h0M981 404h0M992 426h0M982 394h0M1004 367h0M977 451h0M982 397h0M1006 450h0M1001 424h0M989 437h0M962 402h0M965 380h0M1008 398h0M991 422h0M1012 440h0M986 411h0M964 428h0M1013 412h0M1009 423h0M1012 432h0M1034 422h0M974 441h0M1012 450h0M1004 440h0M1013 447h0M1010 476h0M992 419h0M992 432h0M975 398h0M991 412h0M986 436h0M1026 409h0M1028 391h0M990 423h0M973 411h0M978 465h0M975 426h0M999 425h0M1030 432h0M1003 415h0M1000 426h0M999 429h0M1021 433h0M1012 441h0M988 394h0M991 420h0M983 432h0M994 420h0M996 426h0M979 426h0M959 400h0M997 423h0M984 396h0M974 460h0M1005 391h0M999 451h0M1028 418h0M989 424h0M1017 414h0M994 404h0M991 423h0M963 413h0M1007 382h0M960 446h0M992 381h0M952 403h0M1008 427h0M989 422h0M988 419h0M988 425h0M1038 385h0M988 404h0M982 425h0M997 418h0M986 403h0M995 426h0M956 423h0M980 421h0M994 414h0M1011 389h0M979 434h0M1004 397h0M1021 404h0M1018 394h0M992 451h0M995 424h0M1019 432h0M988 432h0M986 429h0M974 448h0M969 422h0M1011 419h0M993 409h0M1017 437h0M993 411h0M1011 415h0M1017 418h0M1025 434h0M971 455h0M987 414h0M956 419h0M1019 388h0M956 428h0M979 436h0M990 418h0M1034 436h0M975 402h0M1026 406h0M990 422h0M1011 416h0M957 433h0M992 391h0M973 406h0M988 422h0M998 400h0M1040 418h0M1001 410h0M991 422h0M992 422h0M1006 405h0M1002 439h0M991 433h0M1005 403h0M989 413h0M994 415h0M1002 452h0M976 458h0M1006 434h0M970 408h0M1033 468h0M1010 439h0M992 426h0M963 385h0M975 432h0M942 453h0M987 416h0M1011 431h0M989 468h0M1048 433h0M958 388h0M997 438h0M973 421h0M996 433h0M974 436h0M977 403h0M1055 418h0M988 421h0M991 414h0M1003 384h0M1013 445h0M963 423h0M957 445h0M993 382h0M1011 423h0M969 395h0M982 415h0M985 425h0M949 463h0M972 440h0M977 428h0M990 423h0M989 418h0M1005 365h0M1025 421h0M1003 435h0M986 478h0M980 425h0M1003 383h0M979 384h0M986 373h0M988 407h0M994 409h0M991 422h0M980 426h0M1005 439h0M958 422h0M990 392h0M986 428h0M976 381h0M991 422h0M1030 418h0M988 425h0M961 458h0M986 424h0M987 421h0M994 445h0M1032 466h0M992 412h0M1001 444h0M995 407h0M1028 436h0M993 423h0M990 423h0M989 431h0M1017 416h0M992 420h0M1013 415h0M931 422h0M1036 383h0M972 399h0M975 382h0M988 423h0M1028 465h0M988 420h0M998 390h0M983 399h0M1032 404h0" stroke="#e8eef8" stroke-opacity="0.1" stroke-width="4.4" stroke-linecap="round"/><path d="M763 374h0M836 223h0M1195 295h0M746 471h0M1488 651h0M1498 336h0M1080 303h0M1491 371h0M734 473h0M799 709h0M1256 195h0M784 229h0M920 546h0M1251 625h0M1389 558h0M796 116h0M880 472h0M1477 524h0M1265 391h0M654 737h0M1129 425h0M907 534h0M688 242h0M1132 132h0M1240 89h0M647 416h0M789 462h0M991 469h0M913 483h0M615 693h0M489 248h0M761 87h0M727 417h0M620 446h0M1452 591h0M1045 573h0M1151 706h0M669 238h0M1487 204h0M610 242h0M1272 172h0M521 360h0M931 180h0M1186 600h0M580 519h0M919 298h0M1241 651h0M1421 206h0M799 310h0M931 572h0M1062 371h0M1084 661h0M520 455h0M547 302h0M1097 518h0" stroke="#e6ecf8" stroke-opacity="0.1" stroke-width="5.0" stroke-linecap="round"/><path d="M1400 274h0M579 243h0M1144 215h0M721 288h0M1305 371h0M1266 465h0M1148 591h0M765 702h0M769 270h0M1272 686h0M1101 763h0M1054 512h0M1476 739h0M1423 465h0M966 287h0M858 420h0M1200 301h0M1336 593h0M600 179h0M997 240h0M1202 711h0M1192 715h0M886 687h0M1181 579h0M1062 206h0M610 521h0M1419 753h0M1433 307h0M678 522h0M488 471h0M977 751h0M1017 158h0M1151 519h0M1427 475h0M1274 464h0M1143 535h0M892 545h0M1129 570h0M1120 511h0M491 172h0M559 693h0M1050 390h0M1011 275h0M624 651h0M609 280h0M877 594h0M1051 512h0M1203 335h0M571 602h0M660 729h0M1259 180h0M1307 728h0M1252 397h0M1384 340h0M1430 519h0M920 404h0M997 368h0M1168 393h0M1119 206h0M573 152h0M497 750h0M564 552h0M1126 314h0M669 101h0M1005 253h0M1040 174h0M906 448h0M1025 307h0M670 115h0M1274 685h0M1363 491h0M792 701h0M1371 476h0M1097 719h0M1475 534h0M810 562h0" stroke="#e6ecf8" stroke-opacity="0.1" stroke-width="5.0" stroke-linecap="round"/><path d="M682 570h0M1414 482h0M1137 389h0M943 116h0M1398 539h0M1193 551h0M1302 308h0M1075 504h0M530 531h0M965 597h0M1279 207h0M1350 403h0M1277 404h0M675 129h0M932 634h0M510 210h0M728 411h0M677 670h0M505 669h0M1273 500h0M1078 526h0M789 382h0M1061 477h0M1036 733h0M532 182h0M1327 166h0M1058 736h0M1027 341h0M955 162h0M1374 382h0M636 625h0M1341 527h0M664 301h0M1205 188h0M527 381h0M1306 497h0M708 466h0M735 686h0M990 388h0M1238 654h0M676 180h0M1086 565h0M1487 291h0M1436 426h0M550 412h0M1357 453h0M1469 721h0M1196 576h0M1014 514h0M1164 657h0M827 203h0M1326 402h0M1038 341h0M594 88h0M835 721h0M839 594h0M812 141h0M1031 431h0M1458 156h0M968 633h0M576 347h0M538 254h0M773 700h0M1277 493h0M1182 255h0M1202 617h0M571 237h0M1340 390h0M1307 226h0M579 258h0M549 617h0M890 656h0M1093 140h0M874 505h0M877 451h0M712 751h0M822 442h0M1457 471h0" stroke="#f2ece0" stroke-opacity="0.1" stroke-width="5.0" stroke-linecap="round"/><path d="M578 108h0M603 344h0M579 353h0M825 244h0M1304 753h0M924 361h0M664 521h0M1089 387h0M643 761h0M622 452h0M1207 323h0M1181 736h0M792 350h0M1424 608h0M1283 584h0M1289 423h0M1495 370h0M1300 554h0M1299 134h0M1436 219h0M924 430h0M618 516h0M741 706h0M589 131h0M904 380h0M706 502h0M1285 322h0M1197 618h0M923 276h0M628 491h0M988 118h0M607 228h0M1259 121h0M1235 208h0M693 118h0M1304 122h0M1442 131h0M675 563h0M588 145h0M845 79h0M663 556h0M577 309h0M1156 637h0M1385 196h0M1201 345h0M1190 176h0M963 328h0M624 616h0M728 150h0M1283 692h0M994 105h0M1146 560h0M1057 650h0M1183 458h0M671 312h0M1270 122h0M677 185h0M607 453h0M1172 696h0M964 148h0M981 358h0M1304 658h0M1060 483h0M1390 83h0M1354 326h0M1321 121h0M520 418h0M924 171h0M1409 471h0M546 488h0M807 460h0M905 413h0M1342 287h0M1033 141h0" stroke="#f2ece0" stroke-opacity="0.1" stroke-width="5.0" stroke-linecap="round"/><path d="M1233 304h0M774 409h0M967 432h0M1062 476h0M1473 525h0M822 107h0M805 662h0M1024 202h0M1105 653h0M1304 314h0M1481 261h0M1240 571h0M759 105h0M865 249h0M708 215h0M1051 438h0M876 702h0M867 379h0M802 485h0M1291 579h0M1053 575h0M1484 244h0M1420 259h0M1178 142h0M1282 740h0M982 117h0M706 357h0M541 668h0M692 244h0M1376 528h0M638 589h0M1193 305h0M1344 567h0M1436 379h0M1056 376h0M1438 216h0M1478 231h0M1177 95h0M601 251h0M912 701h0M1010 110h0M850 154h0M1422 177h0M1193 398h0M1193 225h0M611 718h0M1486 317h0M1047 405h0M593 255h0M955 414h0M967 565h0M951 693h0M1400 271h0M990 656h0M693 588h0M674 207h0M825 165h0M1398 540h0M747 434h0M1100 588h0M777 221h0M1295 719h0M512 692h0M709 310h0M1181 408h0M1334 256h0M1277 399h0M901 294h0M607 220h0M941 517h0M915 114h0M1212 92h0M744 457h0M620 690h0M935 341h0M931 458h0M710 595h0M1010 464h0M1229 498h0M1275 314h0M860 237h0M1018 613h0M1422 167h0M989 714h0M726 192h0M493 516h0M978 292h0M732 725h0M1001 493h0M1319 456h0M650 671h0M948 544h0M1476 216h0M969 603h0M542 610h0M1267 173h0M515 565h0M533 610h0M1267 179h0M1090 273h0M1360 627h0M1110 157h0M1111 605h0M1365 451h0M1373 283h0M955 92h0M1309 478h0M1250 582h0M603 420h0M657 247h0M1001 686h0M878 242h0M938 242h0M1159 363h0M1375 345h0M719 184h0M547 191h0M997 307h0M505 344h0M682 189h0M743 152h0M784 316h0M984 497h0M1073 750h0M1424 205h0M699 465h0M1295 465h0M1113 251h0M1398 395h0M1316 662h0M979 161h0M936 202h0M833 258h0M1232 182h0M638 362h0M650 670h0M922 741h0M612 323h0M1316 510h0M872 690h0M939 266h0M1421 709h0M674 245h0M1454 278h0M1245 421h0M927 725h0M523 81h0M559 421h0" stroke="#ffffff" stroke-opacity="0.1" stroke-width="5.0" stroke-linecap="round"/><path d="M1405 272h0M957 489h0M1094 633h0M831 435h0M569 447h0M760 105h0M900 660h0M810 757h0M895 182h0M955 116h0M636 667h0M1372 645h0M827 644h0M1127 607h0M1220 227h0M1215 429h0M957 209h0M744 613h0M808 656h0M1046 436h0M1417 405h0M1012 345h0M1414 406h0M1459 464h0M1198 272h0M1414 688h0M1298 457h0M1421 454h0M970 403h0M1424 219h0M699 750h0M1181 88h0M581 442h0M1343 621h0M490 245h0M1130 354h0M1000 260h0M865 527h0M726 589h0M1045 553h0M1265 646h0M1427 344h0M1381 94h0M1162 83h0M1194 281h0M1268 219h0M1144 580h0M573 432h0M1369 460h0M1098 492h0M764 94h0M1295 616h0M566 114h0M791 157h0M1193 491h0M926 425h0M515 92h0M850 470h0M736 341h0M1219 142h0M520 494h0M1385 611h0M1118 227h0M700 486h0M1194 424h0M1472 176h0M607 456h0M1206 468h0M1190 345h0M1414 497h0M1349 628h0M792 649h0M1255 303h0M1030 228h0M530 482h0M935 500h0M1350 559h0M634 646h0M1226 762h0M587 391h0M622 760h0M933 312h0M1203 152h0M1069 401h0M802 696h0M814 301h0M797 102h0M1154 673h0M1485 761h0M917 752h0M960 416h0M543 126h0M522 255h0M1422 690h0M651 366h0M1425 157h0M1067 582h0M1358 696h0M1304 135h0M746 659h0M1267 103h0M1413 339h0M855 513h0M1146 740h0M1083 375h0M1297 613h0M1341 576h0M1333 569h0M1473 575h0M749 600h0M611 370h0M556 351h0M1040 213h0M896 411h0M1025 301h0M498 745h0M1167 510h0M641 706h0M517 705h0M603 152h0M1400 256h0M924 453h0M615 411h0M740 142h0M1495 84h0M1117 163h0M1212 219h0M511 188h0M715 469h0M1164 750h0M616 111h0M653 395h0M1443 505h0M507 384h0M994 263h0M1393 122h0M1357 350h0M1035 689h0M1374 526h0M712 255h0M1217 174h0M575 98h0M1093 235h0M646 428h0M532 514h0M1118 254h0M1213 239h0M1081 349h0M787 115h0M531 200h0M1345 94h0M1391 365h0M652 313h0M728 290h0M1180 230h0M1219 145h0" stroke="#ffffff" stroke-opacity="0.1" stroke-width="5.0" stroke-linecap="round"/><path d="M1499 686h0M1110 715h0M897 150h0M1266 395h0M740 355h0M689 638h0M1413 544h0M671 569h0M905 719h0" stroke="#e6ecf8" stroke-opacity="0.1" stroke-width="5.6" stroke-linecap="round"/><path d="M1467 752h0M1354 604h0M1169 206h0M1368 535h0M1310 159h0M1347 108h0M1424 407h0M1484 722h0M546 168h0M1312 699h0M1153 505h0M1220 201h0M666 623h0M1283 430h0M656 292h0M628 739h0" stroke="#f2ece0" stroke-opacity="0.1" stroke-width="5.6" stroke-linecap="round"/><path d="M1234 85h0M489 457h0M896 358h0M623 206h0M601 354h0M1134 262h0M568 93h0M1374 635h0M1227 529h0M1116 487h0M872 172h0M1213 244h0M1475 742h0M573 171h0M1173 473h0M1145 719h0M842 119h0M1097 109h0M681 631h0M1417 509h0M1208 155h0" stroke="#ffffff" stroke-opacity="0.1" stroke-width="5.6" stroke-linecap="round"/><path d="M704 388h0M553 626h0M899 123h0M992 688h0M1183 719h0M1364 269h0M669 396h0M1384 406h0" stroke="#e6ecf8" stroke-opacity="0.1" stroke-width="6.6" stroke-linecap="round"/><path d="M776 708h0M963 711h0M1371 93h0M557 252h0M508 378h0M778 496h0M1081 147h0M626 378h0M1249 139h0M582 714h0M1434 637h0M1083 629h0M758 476h0M1422 721h0" stroke="#f2ece0" stroke-opacity="0.1" stroke-width="6.6" stroke-linecap="round"/><path d="M999 573h0M1145 250h0M838 711h0M983 219h0M907 486h0M1310 430h0M772 160h0M1098 195h0M1048 291h0M781 689h0M862 329h0M1305 182h0M509 667h0M1089 269h0M990 577h0M1148 613h0M986 107h0M1313 345h0M503 319h0M1239 462h0M979 306h0M1116 673h0" stroke="#ffffff" stroke-opacity="0.1" stroke-width="6.6" stroke-linecap="round"/><path d="M1238 137h0M1324 681h0M1370 611h0M1346 677h0M567 611h0M1488 260h0M683 248h0M1100 515h0M854 647h0M1115 132h0M788 561h0M815 209h0M1126 89h0M1149 250h0M1109 508h0M1177 162h0M996 217h0M1347 333h0M621 202h0M1453 418h0M728 140h0M894 173h0M797 346h0M884 157h0M603 172h0M1305 762h0M1119 241h0M640 92h0M889 750h0M1456 132h0M1188 579h0M1012 405h0M1127 580h0M981 430h0M1354 255h0M796 256h0M974 671h0M1448 273h0M588 116h0M1255 683h0M858 193h0M771 340h0M541 375h0M504 135h0M1133 552h0M779 302h0M905 682h0M717 642h0M1262 247h0M645 229h0M961 215h0M738 238h0M1335 257h0M1162 548h0M493 218h0M1034 190h0M1488 243h0M548 379h0M1256 307h0M1442 255h0M799 331h0M956 467h0M733 547h0M807 679h0M589 318h0M1054 221h0M1424 687h0M1456 135h0M951 221h0M1388 429h0M779 559h0M670 738h0M768 266h0M1333 97h0M1429 114h0M1030 619h0M1025 195h0M983 624h0M999 405h0M517 388h0M832 544h0M1394 661h0M1384 595h0M1493 758h0M1443 653h0M1003 212h0M685 103h0M1416 692h0M1350 745h0M879 534h0M1242 636h0M726 106h0M765 224h0M1157 597h0M1208 625h0M784 566h0M1384 386h0M1381 685h0M829 291h0M1480 508h0M701 436h0M958 104h0M979 383h0M1059 380h0M1434 755h0M1413 237h0M1019 506h0M844 531h0M916 478h0M967 501h0M1239 619h0M830 701h0M1146 663h0M764 162h0M1264 751h0M493 631h0M769 368h0M1489 248h0M1270 562h0M539 704h0M902 728h0M883 326h0M692 204h0M1344 657h0M1331 185h0M1262 315h0M1251 761h0M1405 270h0M953 612h0M526 647h0M1305 217h0M1468 298h0M945 115h0M1150 425h0M994 376h0M514 595h0M1167 632h0M905 642h0M966 194h0M1121 356h0M558 605h0M702 645h0M1103 198h0M557 269h0M832 349h0M627 690h0M1206 526h0M516 640h0M908 692h0M567 379h0M862 452h0M1494 581h0M1066 462h0M855 488h0M624 685h0M731 325h0M1031 264h0M1170 130h0M1070 107h0M876 419h0M907 435h0M570 730h0M1318 93h0M1444 277h0M808 710h0M853 688h0M536 641h0M1012 97h0M703 169h0M1493 595h0M1328 86h0M752 361h0M695 262h0M716 523h0M505 536h0M1128 756h0M1321 461h0M1062 686h0M1022 625h0M750 137h0M966 762h0M495 682h0M704 427h0M666 167h0M541 232h0M870 588h0M841 540h0M1387 638h0M1215 388h0M1221 248h0M1261 724h0M738 222h0M611 502h0M1398 186h0M555 217h0M1225 471h0M1430 623h0M749 287h0M1147 384h0M1215 253h0M638 728h0M515 374h0M1094 112h0M1009 679h0M580 669h0M1244 651h0M588 342h0M869 639h0M1284 666h0M563 93h0M497 340h0M563 159h0M889 524h0M565 755h0M496 366h0M1368 650h0M741 163h0M792 295h0M614 246h0M1193 745h0M937 674h0M740 762h0M840 361h0M694 316h0M1074 190h0M1166 569h0M594 245h0M1107 269h0M1328 398h0M766 145h0M1468 541h0M815 345h0M1024 380h0M1327 309h0" stroke="#e6ecf8" stroke-opacity="0.2" stroke-width="1.4" stroke-linecap="round"/><path d="M1325 190h0M1302 640h0M1295 577h0M1383 191h0M524 565h0M1470 290h0M1187 110h0M1331 275h0M530 714h0M682 625h0M1469 293h0M1269 168h0M1105 529h0M821 519h0M951 192h0M669 389h0M1046 260h0M731 192h0M914 764h0M739 105h0M991 523h0M1015 638h0M939 343h0M1459 418h0M956 624h0M1233 457h0M651 317h0M1192 170h0M927 535h0M707 586h0M706 653h0M1327 347h0M818 412h0M1379 630h0M1426 441h0M708 453h0M1443 529h0M1284 180h0M819 182h0M805 679h0M685 632h0M990 310h0M1163 697h0M1334 570h0M1343 129h0M600 407h0M1303 511h0M552 595h0M1033 354h0M801 635h0M1210 582h0M1290 493h0M1422 221h0M1431 463h0M1269 629h0M640 526h0M677 120h0M1446 456h0M575 677h0M911 241h0M997 309h0M573 697h0M638 184h0M684 665h0M535 340h0M1187 125h0M596 278h0M1032 125h0M759 285h0M767 589h0M1043 491h0M667 475h0M744 413h0M517 135h0M1362 438h0M1302 493h0M599 351h0M833 615h0M771 416h0M740 729h0M1003 732h0M599 331h0M1069 367h0M1167 702h0M993 571h0M1278 458h0M790 640h0M865 682h0M1468 633h0M1356 96h0M483 142h0M1428 276h0M860 487h0M1484 723h0M683 287h0M619 269h0M686 433h0M756 413h0M597 169h0M1460 361h0M1488 299h0M1041 690h0M1247 84h0M1233 417h0M623 285h0M588 643h0M1207 530h0M1180 304h0M1244 105h0M1260 571h0M1017 631h0M729 237h0M676 406h0M735 265h0M986 274h0M504 534h0M1035 308h0M1434 152h0M537 318h0M547 700h0M828 456h0M980 561h0M705 163h0M484 345h0M1007 128h0M521 364h0M512 470h0M1472 580h0M1304 741h0M591 507h0M1229 181h0M1297 476h0M720 372h0M602 108h0M883 230h0M1094 746h0M1407 474h0M928 286h0M874 221h0M1373 394h0M1337 720h0M1122 156h0M1367 303h0M1448 142h0M632 407h0M801 455h0M1309 612h0M1158 528h0M557 117h0M626 527h0M700 713h0M672 342h0M965 372h0M1066 646h0M578 299h0M1057 160h0M1322 440h0M589 676h0M926 450h0M771 317h0M542 250h0M676 451h0M581 436h0M622 331h0M950 576h0M1367 453h0M1187 463h0M820 625h0M1132 287h0M1452 607h0M893 719h0M1400 94h0M868 510h0M725 609h0M871 741h0M552 128h0M1129 640h0M950 194h0M529 635h0M829 490h0M852 118h0M667 413h0M989 674h0M834 437h0M1236 302h0M732 185h0M1483 345h0M1322 111h0M949 166h0M1007 364h0M1447 174h0M571 96h0M1256 142h0M1486 606h0M518 449h0M1443 182h0M1074 117h0M579 546h0M516 215h0M1272 359h0M674 412h0M1212 634h0M582 343h0M1029 709h0M1314 206h0M1180 534h0M678 271h0M1186 443h0M924 553h0M1109 448h0M1437 338h0M808 430h0M1226 550h0M794 542h0M1268 551h0M550 423h0M1233 430h0M795 740h0M1249 159h0M1302 638h0M888 378h0M1230 759h0M1243 660h0M824 515h0M680 692h0M1133 396h0M756 461h0M1008 586h0M764 579h0M1027 684h0M1365 277h0M709 542h0M827 660h0M520 462h0M1170 751h0M1084 104h0M1489 140h0M1207 410h0M829 575h0M1027 177h0M759 524h0M931 247h0M881 423h0M1495 325h0M1259 452h0M758 756h0M1102 319h0M1015 144h0M946 260h0M1493 491h0" stroke="#e6ecf8" stroke-opacity="0.35" stroke-width="1.4" stroke-linecap="round"/><path d="M994 430h0M997 468h0M948 439h0M972 425h0M1012 389h0M974 394h0M1008 416h0M992 419h0M994 449h0M993 423h0M949 455h0M1017 439h0M995 416h0M1002 421h0M1001 437h0M958 435h0M975 427h0M1003 409h0M974 421h0M1004 458h0M959 439h0M1011 430h0M999 434h0M1007 436h0M1019 389h0M1014 426h0M1011 386h0M1006 415h0M981 395h0M1030 387h0M1001 388h0M1005 423h0M1012 424h0M989 417h0M981 409h0M998 377h0M997 426h0M975 434h0M993 418h0M993 417h0M1013 450h0M998 418h0M993 425h0M1024 402h0M992 436h0M992 423h0M995 427h0M990 424h0M947 455h0M986 417h0M989 408h0M997 428h0M999 438h0M1028 381h0M987 418h0M1009 432h0M991 426h0M998 432h0M1025 409h0M1053 432h0M972 481h0M975 431h0M985 418h0M980 415h0M992 420h0M976 376h0M948 403h0M1039 424h0M992 425h0M970 433h0M991 425h0M990 422h0M988 423h0M997 424h0M989 422h0M989 422h0M994 417h0M997 413h0M989 437h0M1021 396h0M991 412h0M992 445h0M1035 421h0M1011 420h0M994 429h0M989 423h0M986 431h0M991 416h0M990 407h0M995 417h0M988 402h0M972 396h0M989 432h0M978 402h0M984 410h0M988 425h0M985 423h0M978 365h0M966 434h0M981 415h0M1002 428h0M991 398h0M1004 426h0M986 453h0M995 446h0M1001 416h0M991 401h0M1014 419h0M996 418h0M984 422h0M976 426h0M994 426h0M983 427h0M1012 403h0M991 424h0M992 421h0M991 421h0M973 392h0M1012 410h0M1014 392h0M992 380h0M1002 451h0M996 418h0M965 436h0M991 414h0M1009 404h0M975 422h0M997 415h0M991 419h0M983 414h0M962 424h0M954 398h0M995 411h0M992 442h0M986 421h0M978 400h0M990 419h0M996 412h0M990 457h0M988 432h0M989 423h0M989 430h0M977 400h0M1027 427h0M1038 431h0M959 449h0M1004 440h0M989 422h0M991 422h0M995 426h0M983 407h0M1014 432h0M1008 418h0M940 456h0M993 417h0M999 397h0M978 434h0M972 400h0M994 417h0M996 405h0M1035 451h0M996 445h0M989 408h0M1014 400h0M1013 434h0M1003 413h0M1012 401h0M971 417h0M995 384h0M985 407h0M971 427h0M963 411h0M982 437h0M964 370h0M983 399h0M1010 392h0M1020 456h0M980 420h0M964 394h0M972 419h0M976 440h0M943 430h0M1002 425h0M1007 447h0M994 450h0M1028 450h0M1002 421h0M972 403h0M997 414h0M992 444h0M979 416h0M1033 417h0M975 420h0M991 419h0M992 449h0M989 420h0M971 399h0M985 416h0M1029 425h0M994 419h0M1027 426h0M998 437h0M1010 472h0M978 434h0M946 418h0M979 428h0M967 431h0M986 418h0M1035 406h0M989 420h0M994 431h0M1005 429h0M963 408h0M983 467h0M985 437h0M968 429h0M1010 429h0M969 418h0M999 410h0M1027 402h0M990 425h0M1000 422h0M1025 397h0M1016 425h0M1009 394h0M982 446h0M993 402h0M955 441h0M1004 443h0M1049 442h0M1030 399h0M974 380h0M1027 426h0M990 451h0M1003 434h0M993 443h0M991 421h0M1000 455h0M988 419h0M1004 421h0M1008 408h0M1004 429h0M1012 432h0M981 420h0M1004 465h0M961 425h0M985 397h0M997 411h0M1021 440h0M990 421h0M991 423h0M945 408h0M980 439h0M1039 457h0M1000 441h0M1000 419h0M990 430h0M995 445h0M960 388h0M967 397h0M981 471h0M963 416h0M977 436h0M978 413h0M1005 436h0M985 411h0M1024 414h0M993 420h0M961 433h0M988 427h0M988 403h0M981 443h0M1001 472h0M981 437h0M995 427h0M986 416h0M997 385h0M1011 389h0M1025 399h0M957 425h0M1004 431h0M988 389h0M976 432h0M954 434h0M989 458h0M950 422h0M984 412h0M989 417h0M969 400h0M967 394h0M991 421h0M996 435h0M1005 408h0M955 419h0M975 448h0M1033 437h0M1000 427h0M1004 419h0M978 440h0M1002 463h0M994 418h0M987 417h0M981 413h0M977 397h0M988 423h0M1023 436h0M1001 460h0M1015 437h0M1000 402h0M966 396h0M991 410h0M1001 425h0M984 420h0M996 419h0M979 415h0M983 406h0M978 395h0M1001 423h0M956 390h0M1000 427h0M973 429h0M999 436h0M974 430h0M991 449h0M993 428h0M977 422h0M995 416h0M1010 437h0M947 409h0M976 420h0M995 413h0M993 421h0M1001 423h0M980 426h0M1029 419h0M973 436h0M1003 395h0M986 414h0M969 439h0M988 429h0M999 455h0M989 418h0M985 418h0M991 419h0M987 455h0M1012 410h0M978 420h0M985 417h0M971 395h0M972 395h0M988 419h0M1001 431h0M1000 410h0M1010 424h0M1006 424h0M1002 414h0M968 405h0M1019 437h0M977 472h0M990 423h0M974 398h0M1006 421h0M1009 414h0M998 420h0M949 425h0M991 404h0M959 426h0M991 422h0M989 420h0M984 429h0M1003 447h0M1004 441h0M992 439h0M1020 416h0M966 417h0M1009 412h0M960 442h0M995 408h0M999 431h0M982 450h0M1001 401h0M975 419h0M996 423h0M993 445h0M968 421h0M1015 391h0M968 414h0M990 429h0M1010 413h0M955 423h0M962 432h0M979 426h0M1001 425h0M1015 384h0M992 424h0M1023 401h0M985 429h0M985 422h0M983 426h0M986 452h0M1007 439h0M1005 413h0M985 418h0M971 446h0M992 424h0M992 421h0M999 434h0M970 436h0M1005 408h0M990 422h0M1015 425h0M998 451h0M981 410h0M1006 424h0M994 422h0M1028 470h0M988 422h0M991 438h0M992 424h0M958 465h0M1005 430h0M997 420h0M994 431h0M986 405h0M992 426h0M999 423h0M990 423h0M992 416h0M940 398h0M947 419h0M1000 418h0M1009 418h0M975 419h0M953 430h0M995 419h0M985 409h0M991 421h0M983 415h0M984 428h0M1021 394h0M983 440h0M973 440h0M1036 429h0M996 412h0M990 416h0M992 427h0M992 411h0M1025 446h0M1000 366h0M990 422h0M1002 411h0M992 435h0M990 406h0M992 423h0M954 467h0" stroke="#e8eef8" stroke-opacity="0.55" stroke-width="1.4" stroke-linecap="round"/><path d="M983 450h0M986 440h0M974 451h0M1001 417h0M991 422h0M1007 430h0M1018 430h0M1000 387h0M996 422h0M986 428h0M985 411h0M990 422h0M986 421h0M968 366h0M987 421h0M989 413h0M980 423h0M1014 432h0M1035 430h0M1013 412h0M973 407h0M986 411h0M994 416h0M1003 421h0M990 407h0M1009 438h0M1026 453h0M986 421h0M959 435h0M980 408h0M1020 431h0M980 410h0M994 421h0M1001 429h0M1003 419h0M1019 400h0M1025 400h0M1007 395h0M965 450h0M991 422h0M991 417h0M966 413h0M998 419h0M977 392h0M992 412h0M985 408h0M997 429h0M991 424h0M991 417h0M995 428h0M983 402h0M942 390h0M984 438h0M972 415h0M1006 440h0M999 423h0M980 413h0M991 411h0M1009 427h0M963 433h0M988 418h0M981 454h0M979 427h0M998 406h0M961 447h0M981 396h0M1015 443h0M995 360h0M961 426h0M1013 430h0M987 396h0M1028 389h0M1039 410h0M981 434h0M988 422h0M989 421h0M979 415h0M1004 405h0M969 421h0M991 423h0M969 407h0M979 419h0M998 438h0M992 419h0M968 407h0M986 401h0M976 384h0M983 464h0M992 425h0M993 414h0M1021 422h0M1033 383h0M967 465h0M996 388h0M965 417h0M1006 425h0M973 416h0M989 459h0M992 421h0M959 388h0M994 396h0M1016 410h0M1005 431h0M987 423h0M1027 402h0M999 420h0M990 407h0M1000 421h0M974 425h0M1023 401h0M991 422h0M970 443h0M995 422h0M996 423h0M1018 479h0M995 418h0M999 415h0M989 422h0M991 391h0M998 421h0M998 418h0M992 404h0M1010 413h0M997 420h0M986 423h0M1009 413h0M1010 416h0M992 420h0M999 420h0M970 419h0M993 425h0M979 443h0M998 432h0M999 422h0M993 422h0M998 423h0M1001 440h0M1006 432h0M984 470h0M1008 402h0M990 422h0M993 442h0M986 403h0M998 437h0M963 422h0M956 419h0M1000 386h0M994 426h0M1009 439h0M998 425h0M1042 403h0M971 427h0M1007 413h0M993 443h0M990 424h0M984 430h0M993 418h0M988 412h0M986 416h0M988 441h0M1024 422h0M985 426h0M988 420h0M988 426h0M1014 427h0M991 422h0M987 443h0M994 425h0M998 411h0M983 409h0M985 416h0M987 397h0M1003 383h0M993 432h0M980 391h0M991 418h0M991 419h0M985 424h0M1006 416h0M1012 430h0M991 423h0M992 432h0M939 428h0M997 419h0M1011 426h0M992 440h0M1006 402h0M977 428h0M938 456h0M991 422h0M970 427h0M1024 449h0M976 400h0M985 438h0M972 431h0M985 484h0M1018 424h0M987 420h0M962 394h0M989 422h0M1015 439h0M1013 390h0M998 425h0M993 398h0M1019 441h0M1009 422h0M1000 416h0M991 422h0M1022 424h0M1004 391h0M978 474h0M990 416h0M970 404h0M997 405h0M1038 416h0M990 422h0M1023 421h0M1037 442h0M984 426h0M952 393h0M993 428h0M1009 438h0M980 423h0M995 430h0M991 423h0M1000 425h0M971 388h0M990 443h0M987 427h0M990 422h0M996 453h0M995 444h0M992 418h0M1016 391h0M993 435h0M1018 407h0M960 447h0M992 410h0M995 428h0M969 392h0M987 404h0M984 424h0M1030 372h0M981 429h0M975 379h0M995 420h0M987 431h0M1007 394h0M957 423h0M992 419h0M963 468h0M999 372h0M1001 427h0M975 417h0M994 376h0M972 454h0M966 384h0M996 413h0M989 423h0M988 415h0M1011 380h0M980 413h0M1005 423h0M990 422h0M989 420h0M972 432h0M986 421h0M992 414h0M1007 466h0M994 439h0M978 405h0M984 408h0M994 423h0M989 419h0M982 432h0M991 406h0M955 385h0M987 417h0M1012 417h0M974 439h0M996 425h0M991 422h0M1013 464h0M1041 399h0M1019 473h0M991 411h0M985 408h0M995 432h0M986 412h0M980 446h0M994 424h0M986 426h0M1007 401h0M1045 440h0M986 441h0M992 422h0M971 435h0M983 422h0M992 431h0M988 384h0M995 436h0M984 405h0M994 428h0M992 411h0M970 444h0M1008 421h0M987 419h0M973 414h0M1030 405h0M1015 402h0M998 411h0M971 443h0M932 426h0M992 408h0M983 429h0M984 385h0M992 419h0M995 432h0M985 423h0M993 418h0M1004 441h0M1034 459h0M1013 409h0M1013 401h0M968 394h0M1006 459h0M997 429h0M965 411h0M999 420h0M991 427h0M1011 373h0M987 425h0M1014 424h0M990 423h0M1010 400h0M1009 428h0M998 424h0M988 418h0M981 399h0M998 421h0M996 437h0M982 434h0M1006 430h0M991 421h0M1026 430h0M992 432h0M990 423h0M1035 425h0M980 399h0M989 420h0M1025 430h0M993 423h0M977 393h0M986 425h0M1018 392h0M979 419h0M970 417h0M995 422h0M1044 426h0M952 427h0M998 395h0M976 420h0M969 432h0M993 419h0M974 367h0M999 421h0M987 407h0M998 427h0M997 426h0M987 400h0M985 429h0M994 429h0M997 425h0M985 418h0M976 470h0M1005 431h0M984 403h0M1016 410h0M970 380h0M990 423h0M984 418h0M986 419h0M937 439h0M1020 425h0M999 376h0M989 424h0M1004 428h0M992 423h0M966 402h0M1005 475h0M991 421h0M995 420h0M989 409h0M962 451h0M968 413h0M981 417h0M973 466h0M1002 428h0M967 453h0M985 464h0M994 401h0M988 429h0M1030 430h0M953 411h0M991 416h0M980 412h0M990 428h0M971 420h0M1000 420h0M972 403h0M1047 424h0M984 412h0M990 434h0M991 437h0M1019 406h0M980 411h0M1014 438h0M996 409h0M1011 443h0M993 439h0M988 420h0M983 422h0M982 401h0M1030 438h0M981 430h0M1024 453h0M995 437h0M1028 395h0M947 403h0M987 422h0M997 421h0M989 415h0M972 412h0M964 429h0M1011 422h0M1005 446h0M1000 443h0M1000 437h0" stroke="#e8eef8" stroke-opacity="0.8" stroke-width="1.4" stroke-linecap="round"/><path d="M1103 417h0M630 451h0M751 106h0M754 91h0M515 683h0M733 611h0M956 160h0M1039 246h0M953 629h0M767 701h0M856 176h0M871 595h0M567 427h0M1339 218h0M507 152h0M1456 432h0M924 213h0M736 228h0M1288 194h0M1129 99h0M1474 527h0M1078 638h0M1283 574h0M1171 398h0M1287 394h0M924 704h0M690 499h0M898 602h0M1275 674h0M1013 560h0M1345 116h0M1368 533h0M981 274h0M1162 175h0M850 330h0M666 511h0M1186 86h0M1303 122h0M1121 668h0M734 109h0M891 702h0M1474 546h0M1498 501h0M984 421h0M1300 583h0M672 447h0M1014 724h0M1399 345h0M635 704h0M873 475h0M1333 280h0M960 605h0M1072 148h0M904 652h0M847 533h0M1266 219h0M1447 409h0M645 473h0M795 325h0M702 623h0M1301 391h0M1419 304h0M742 98h0M661 362h0M512 575h0M802 573h0M538 79h0M725 568h0M848 123h0M498 524h0M839 662h0M717 396h0M1448 513h0M1080 628h0M567 118h0M1469 520h0M767 711h0M878 339h0M501 541h0M620 541h0M1104 102h0M1307 581h0M1283 215h0M639 197h0M1276 761h0M930 302h0M1095 196h0M1306 461h0M1470 277h0M937 225h0M899 466h0M651 315h0M1226 381h0M1471 141h0M883 386h0M1429 249h0M1261 446h0M827 299h0M938 174h0M1458 231h0M757 584h0M686 697h0M1306 620h0M1217 577h0M1453 486h0M715 253h0M1185 161h0M520 761h0M1338 629h0M1255 743h0M1038 644h0M1327 222h0M1406 743h0M519 749h0M807 230h0M1357 683h0M1349 105h0M1133 702h0M1483 318h0M908 441h0M536 231h0M1400 557h0M794 717h0M1345 121h0M740 431h0M608 727h0M513 371h0M835 764h0M963 724h0M810 552h0M1132 754h0M1347 203h0M783 386h0M920 499h0M838 733h0M1190 170h0M622 344h0M805 137h0M719 561h0M1011 166h0M955 247h0M1401 258h0M623 108h0M1302 130h0M657 336h0M1111 100h0M1043 609h0M769 740h0M623 647h0M676 329h0M1021 305h0M907 195h0M682 711h0M1046 249h0M937 718h0M972 316h0M1347 340h0M1384 615h0M1234 376h0M1003 592h0M717 500h0M596 534h0M1397 285h0M931 722h0M1485 238h0M1125 91h0M1461 474h0M1127 384h0M728 244h0M707 331h0M1409 702h0M553 686h0M907 474h0M1097 93h0M571 353h0M1153 543h0M1326 540h0M1367 448h0M955 611h0M976 447h0M717 121h0M967 262h0M884 617h0M1176 635h0M487 419h0M652 383h0M1230 476h0M1085 185h0M589 673h0M1463 580h0M577 561h0M634 688h0M1485 634h0M698 413h0M1166 257h0M1289 421h0M819 302h0M1330 401h0M1323 585h0M794 373h0M648 367h0M1486 447h0M760 522h0M1481 186h0M910 212h0M927 733h0M1171 705h0M1317 462h0M486 217h0M1266 446h0M576 209h0M1021 286h0M1157 172h0M710 435h0M566 121h0M892 534h0M1017 761h0M913 453h0M537 708h0M665 135h0M1127 108h0M1125 458h0M1276 224h0M1205 191h0M865 279h0M1274 539h0M713 759h0M552 601h0M1259 538h0M808 93h0M1210 188h0M554 445h0M1105 590h0M1186 485h0M699 295h0M1021 292h0M838 154h0M1430 416h0M1244 184h0M1041 679h0M1388 413h0M986 729h0M579 665h0M588 104h0M1264 402h0M660 476h0M873 716h0M482 743h0M1080 711h0M1074 558h0M552 498h0M525 724h0M1428 700h0M1243 754h0M788 261h0M549 352h0M752 102h0M985 731h0M803 104h0M929 161h0M1244 350h0M631 262h0M1223 510h0M1107 565h0M778 601h0M1283 456h0M1449 139h0M668 388h0M1049 170h0M948 695h0M877 364h0M1260 518h0M789 476h0M1230 378h0M631 434h0M1355 668h0" stroke="#f2ece0" stroke-opacity="0.2" stroke-width="1.4" stroke-linecap="round"/><path d="M531 230h0M910 738h0M843 99h0M805 574h0M776 422h0M602 714h0M860 348h0M1432 360h0M708 491h0M822 732h0M1465 389h0M967 170h0M980 758h0M679 182h0M1135 573h0M828 612h0M829 251h0M1308 673h0M628 596h0M1196 473h0M1423 190h0M1268 188h0M653 339h0M1237 303h0M1416 675h0M515 703h0M1370 497h0M876 321h0M1370 609h0M1075 134h0M541 423h0M708 449h0M637 251h0M1174 330h0M1212 336h0M986 446h0M731 468h0M796 725h0M745 607h0M737 94h0M688 471h0M1141 228h0M851 574h0M929 160h0M928 175h0M723 652h0M1386 532h0M1199 741h0M1178 103h0M740 400h0M1490 578h0M806 197h0M598 694h0M930 267h0M1296 125h0M1459 734h0M954 400h0M752 747h0M918 488h0M1039 344h0M1111 570h0M1307 423h0M1238 298h0M864 475h0M748 204h0M924 235h0M1006 208h0M693 536h0M782 600h0M1335 80h0M571 749h0M1246 180h0M853 433h0M1358 166h0M899 593h0M724 90h0M570 353h0M707 380h0M720 487h0M701 255h0M1201 712h0M611 728h0M812 667h0M1223 475h0M1417 226h0M546 684h0M1392 644h0M1380 233h0M800 425h0M1110 434h0M690 399h0M1174 155h0M1184 312h0M1280 545h0M1114 286h0M672 419h0M494 507h0M658 268h0M1225 361h0M1427 123h0M878 577h0M1087 391h0M681 296h0M1397 116h0M836 501h0M634 473h0M891 364h0M902 124h0M1243 394h0M1111 175h0M924 238h0M599 153h0M1418 337h0M770 647h0M998 324h0M1265 395h0M503 245h0M972 177h0M819 195h0M1127 404h0M1177 297h0M1215 608h0M913 634h0M620 590h0M871 270h0M789 266h0M718 732h0M1159 98h0M1067 205h0M1283 687h0M616 584h0M836 422h0M866 105h0M1337 513h0M719 373h0M713 586h0M1020 295h0M1221 228h0M1208 455h0M517 618h0M1033 659h0M1304 155h0M809 480h0M733 723h0M1421 119h0M809 159h0M588 439h0M606 676h0M671 442h0M696 717h0M1080 412h0M779 329h0M1381 307h0M605 559h0M930 258h0M1112 566h0M1232 146h0M1076 343h0M861 504h0M675 462h0M793 694h0M547 111h0M945 204h0M1159 490h0M1317 202h0M850 510h0M857 633h0M1220 726h0M629 298h0M1053 446h0M583 757h0M860 111h0M1050 732h0M1111 527h0M1272 395h0M784 328h0M985 605h0M578 372h0M723 514h0M513 517h0M1496 189h0M897 727h0M1464 328h0M1173 603h0M973 342h0M617 634h0M802 634h0M1418 452h0M1396 481h0M1161 381h0M1269 294h0M1410 186h0M1125 430h0M1484 365h0M1400 748h0M1066 536h0M1130 750h0M945 398h0M1483 472h0M957 182h0M1284 435h0M1237 284h0M1351 174h0M1394 346h0M801 504h0M1264 488h0M985 545h0M642 267h0M519 232h0M1097 634h0M1420 81h0M1401 734h0M1081 685h0M1386 546h0M1162 238h0M1413 352h0M572 551h0M834 340h0M765 352h0M1320 568h0M844 182h0M893 85h0M591 392h0M620 614h0M1266 157h0M1359 367h0M1327 650h0M1215 723h0M687 246h0M630 336h0M1363 271h0M876 440h0M1199 546h0M731 278h0M768 410h0M696 360h0M498 126h0M897 645h0M981 284h0M518 562h0M774 402h0M511 738h0M979 95h0M1281 120h0M1006 339h0M824 754h0M1199 380h0M663 356h0M1199 537h0M1068 218h0M514 248h0M591 189h0M527 379h0M1051 762h0M883 658h0M546 207h0M542 440h0M677 566h0M1250 542h0M1441 324h0M1015 143h0M539 649h0M1209 730h0M1089 390h0M959 86h0" stroke="#f2ece0" stroke-opacity="0.35" stroke-width="1.4" stroke-linecap="round"/><path d="M810 182h0M853 119h0M922 127h0M1106 127h0M1454 329h0M1150 319h0M733 269h0M1421 691h0M595 708h0M765 627h0M1300 760h0M1228 456h0M1323 479h0M1494 344h0M1308 511h0M1019 379h0M764 296h0M1430 305h0M852 693h0M1308 604h0M1423 283h0M1412 637h0M971 452h0M583 350h0M1223 219h0M835 190h0M1113 500h0M606 248h0M574 382h0M1146 616h0M1393 169h0M1435 246h0M733 698h0M894 242h0M1195 100h0M1437 238h0M577 715h0M1344 392h0M984 225h0M1001 411h0M1160 393h0M668 102h0M1265 455h0M612 91h0M797 579h0M1424 271h0M1446 702h0M723 177h0M931 427h0M798 459h0M1078 601h0M595 317h0M1415 351h0M899 162h0M1373 411h0M1450 425h0M892 428h0M1411 582h0M999 542h0M1061 277h0M703 334h0M1230 702h0M1270 173h0M1019 292h0M990 259h0M884 608h0M727 118h0M1077 217h0M529 691h0M727 650h0M1265 160h0M584 139h0M1041 591h0M853 628h0M688 218h0M530 670h0M494 573h0M577 616h0M1366 712h0M592 649h0M517 106h0M747 152h0M1221 445h0M1157 228h0M555 310h0M1016 305h0M682 393h0M896 448h0M1018 79h0M983 553h0M1049 386h0M671 708h0M1094 325h0M1176 712h0M675 501h0M768 212h0M1270 576h0M1309 746h0M1057 589h0M748 184h0M1415 81h0M1164 463h0M1037 320h0M1099 749h0M1483 712h0M1022 524h0M1210 757h0M1154 203h0M1000 411h0M742 428h0M1142 191h0M551 82h0M829 416h0M1010 178h0M774 605h0M1083 375h0M788 304h0M1476 573h0M758 653h0M931 138h0M555 559h0M519 117h0M1021 545h0M1357 706h0M1429 598h0M934 97h0M1337 496h0M800 99h0M490 458h0M1005 372h0M1052 362h0M927 81h0M1304 142h0M824 153h0M1063 432h0M937 743h0M661 646h0M823 124h0M1015 185h0M1185 184h0M1051 395h0M792 453h0M851 626h0M634 231h0M1384 164h0M972 111h0M1238 424h0M1018 624h0M1350 394h0M1387 245h0M555 595h0M867 710h0M883 238h0M1134 461h0M1420 518h0M988 377h0M1189 279h0M836 412h0M1037 724h0M1093 147h0M1311 648h0M1191 426h0M1131 314h0M1321 618h0M503 467h0M1069 692h0M1306 441h0M616 250h0M1142 110h0M976 660h0M902 428h0M855 478h0M932 485h0M749 245h0M1431 517h0M877 680h0M603 302h0M1487 610h0M1431 343h0M798 163h0M1228 450h0M1492 582h0M562 402h0M668 450h0M1435 257h0M545 716h0M785 414h0M1349 704h0M621 426h0M601 227h0M1117 667h0M576 309h0M1099 499h0M881 299h0M665 306h0M489 612h0M540 719h0M965 718h0M562 412h0M502 191h0M1292 527h0M726 494h0M951 361h0M1034 321h0M850 399h0M1331 697h0M1054 171h0M760 205h0M763 433h0M659 332h0M1466 526h0M769 369h0M510 667h0M1230 616h0M1066 301h0M556 457h0M839 585h0M1449 729h0M1189 455h0M588 502h0M1029 655h0M715 524h0M552 110h0M909 520h0M714 291h0M774 710h0M1109 358h0M1136 243h0M1368 706h0M1370 299h0M1315 252h0M1308 386h0M1048 586h0M839 747h0M1060 727h0M875 643h0M1485 713h0M1258 702h0M1440 211h0M1226 149h0M778 715h0M1497 401h0M725 380h0M1423 188h0M1015 408h0M1320 205h0M621 745h0M722 581h0M602 365h0M1399 650h0M1330 292h0M804 449h0M741 285h0M1106 687h0M676 302h0M609 621h0M1260 118h0M1169 361h0M724 259h0M1186 742h0M702 667h0M1376 716h0M897 428h0M1364 374h0M820 640h0M1131 729h0M1241 514h0M920 362h0M1005 383h0M1453 518h0M819 752h0M897 417h0M1299 615h0M676 483h0M761 637h0M1073 324h0M992 260h0M711 582h0M1330 616h0M577 88h0M1098 256h0M1038 727h0M617 580h0M1381 650h0M1185 344h0M1250 588h0M1147 734h0M650 275h0M1450 745h0M662 133h0M1348 193h0M805 89h0M991 666h0M1304 225h0M846 93h0M746 687h0M1224 478h0M1327 99h0M973 158h0M1222 395h0M1163 183h0M551 745h0M813 634h0M1195 262h0M1087 234h0M683 262h0M1452 625h0M1241 577h0M1073 759h0M627 585h0M546 651h0M996 727h0M1244 574h0M1209 146h0M1304 502h0M562 478h0M1079 104h0M933 533h0M718 676h0M733 130h0M1016 545h0M1138 508h0M943 175h0M847 609h0M1333 537h0M599 417h0M717 346h0M720 175h0M977 177h0M786 373h0M638 759h0M886 147h0M965 140h0M1454 332h0M1081 608h0M789 168h0M563 634h0M503 452h0M1164 176h0M886 455h0M1072 218h0M889 133h0M1447 235h0M1288 79h0M577 501h0M701 168h0M736 296h0M605 455h0M777 443h0M915 189h0M1134 660h0M1044 650h0M1011 514h0M1015 204h0M1362 600h0M1269 602h0M1491 381h0M1415 570h0M1436 391h0M996 539h0M630 653h0M1245 248h0M596 165h0M809 758h0M1460 108h0M943 384h0M887 222h0M750 500h0M851 669h0M1014 300h0M659 735h0M1249 451h0M844 202h0M514 136h0M1456 204h0M1385 285h0M629 634h0M1207 604h0M949 295h0M896 83h0M533 429h0M743 339h0M1447 246h0M1189 177h0M680 655h0M1110 405h0M1380 227h0M1477 617h0M601 622h0M925 365h0M1126 431h0M1256 178h0M1424 132h0M518 451h0M1375 529h0M1219 126h0M1487 490h0M1325 211h0M1419 455h0M1478 382h0M1487 687h0M1253 403h0M576 652h0M782 506h0M725 524h0M1171 588h0M707 713h0M1146 674h0M1303 678h0M1309 396h0M1035 272h0M695 321h0M1339 500h0M1143 659h0M880 162h0M1201 301h0M1198 461h0M745 500h0M751 132h0M1007 331h0M1268 532h0M1116 80h0M626 422h0M1341 602h0M897 401h0M648 421h0M640 474h0M889 645h0M679 678h0M669 434h0M782 474h0M1204 286h0M951 325h0M1164 225h0M508 408h0M632 276h0M702 715h0M866 392h0M1029 99h0M524 405h0M1452 503h0M596 593h0M1491 748h0M1344 270h0M567 702h0M1478 531h0M1447 639h0M1440 524h0M1455 580h0M1195 366h0M828 180h0M1223 407h0M1432 114h0M612 600h0M813 336h0M1373 729h0M1297 470h0M617 699h0M631 383h0M1022 375h0M663 462h0M707 100h0M902 401h0M556 334h0M598 104h0M1398 750h0M937 212h0M1351 185h0M1285 440h0M775 98h0M1393 393h0M621 463h0M1299 585h0M1197 721h0M1085 179h0M886 511h0M484 407h0M1079 678h0M590 413h0M815 495h0M538 375h0M517 159h0M750 560h0M629 429h0M1108 197h0M510 751h0M1108 755h0M703 232h0M960 423h0M1441 176h0M600 455h0M753 591h0M1060 709h0M1129 477h0M540 640h0M1457 210h0M1458 575h0M787 249h0M1490 228h0M1158 273h0M1170 511h0M1175 637h0M1479 516h0M578 755h0M610 589h0M1198 695h0M491 367h0M618 271h0M1060 741h0M774 285h0M878 754h0M993 92h0M1080 487h0M1290 761h0M514 91h0M1477 297h0M1336 233h0M549 479h0M1199 330h0M1164 446h0" stroke="#ffffff" stroke-opacity="0.2" stroke-width="1.4" stroke-linecap="round"/><path d="M1323 164h0M1290 558h0M1444 404h0M938 455h0M565 183h0M549 222h0M1093 149h0M1407 315h0M1486 212h0M624 503h0M1380 742h0M683 683h0M1482 652h0M790 238h0M523 515h0M1050 509h0M483 625h0M1385 561h0M806 331h0M870 590h0M1180 442h0M1279 232h0M786 725h0M909 685h0M616 395h0M884 759h0M531 490h0M1091 525h0M1057 108h0M1142 290h0M564 581h0M1180 573h0M652 617h0M1378 304h0M962 442h0M690 156h0M481 217h0M981 416h0M835 303h0M1383 397h0M957 281h0M803 284h0M1217 686h0M1367 368h0M988 437h0M1421 330h0M1212 87h0M875 337h0M1275 666h0M1295 187h0M636 431h0M1498 713h0M1211 110h0M1305 685h0M1416 506h0M604 88h0M1011 757h0M885 759h0M786 447h0M1170 439h0M1210 321h0M807 533h0M1301 599h0M1152 558h0M1273 316h0M542 271h0M1480 465h0M855 738h0M625 235h0M1474 738h0M1296 171h0M528 108h0M1296 103h0M1289 242h0M696 303h0M1102 627h0M742 396h0M1055 755h0M1232 697h0M590 581h0M1377 421h0M993 320h0M1466 214h0M753 302h0M805 366h0M569 504h0M1298 252h0M1159 305h0M1495 200h0M1175 289h0M1224 85h0M629 708h0M520 320h0M1242 156h0M1307 395h0M1144 744h0M1329 628h0M485 414h0M1177 107h0M649 200h0M707 661h0M1477 483h0M544 511h0M1243 729h0M1083 165h0M1359 195h0M1194 627h0M576 748h0M530 244h0M1347 660h0M556 157h0M545 125h0M1191 198h0M748 84h0M1001 296h0M1156 326h0M1150 525h0M1400 135h0M493 729h0M577 377h0M965 543h0M493 719h0M1271 152h0M973 252h0M1355 725h0M606 245h0M1283 253h0M1345 681h0M1092 762h0M850 328h0M955 651h0M814 555h0M1182 186h0M675 760h0M1097 285h0M822 603h0M988 757h0M1285 620h0M1112 531h0M635 616h0M1006 752h0M484 763h0M884 232h0M749 318h0M1361 157h0M605 90h0M737 244h0M791 119h0M785 267h0M848 552h0M570 690h0M935 125h0M822 87h0M1078 477h0M982 356h0M1296 489h0M949 457h0M800 547h0M608 390h0M925 383h0M1227 197h0M525 413h0M1486 86h0M1416 621h0M861 119h0M671 566h0M902 727h0M1273 356h0M528 203h0M1367 529h0M1246 513h0M1477 439h0M1346 288h0M567 341h0M855 431h0M649 334h0M889 275h0M1287 95h0M1484 721h0M1091 329h0M802 404h0M832 753h0M517 284h0M827 318h0M690 574h0M605 422h0M655 316h0M1066 736h0M1057 463h0M919 401h0M1204 671h0M876 170h0M1465 699h0M821 104h0M970 400h0M1235 151h0M1211 102h0M707 526h0M1463 477h0M1487 516h0M1074 88h0M553 512h0M972 534h0M611 291h0M845 549h0M586 325h0M550 730h0M1494 120h0M853 126h0M1352 423h0M1127 101h0M1031 171h0M1332 405h0M1449 281h0M595 435h0M669 561h0M652 653h0M1344 427h0M752 595h0M512 449h0M990 657h0M1337 466h0M1422 173h0M1414 596h0M823 504h0M1470 188h0M1343 165h0M1341 100h0M1217 136h0M626 319h0M503 170h0M675 212h0M572 367h0M485 692h0M719 301h0M587 595h0M1167 686h0M1230 473h0M1121 487h0M1435 727h0M1336 538h0M1155 729h0M1018 281h0M484 104h0M1245 506h0M1352 680h0M1244 336h0M1424 552h0M922 354h0M592 487h0M1239 273h0M1306 346h0M941 115h0M604 710h0M738 488h0M1208 679h0M929 381h0M934 687h0M651 143h0M1056 390h0M1006 522h0M1494 400h0M802 385h0M1237 417h0M1131 195h0M1062 281h0M1175 144h0M1100 608h0M573 699h0M1267 708h0M667 259h0M981 392h0M814 495h0M649 574h0M689 689h0M701 611h0M1498 641h0M1018 316h0M1268 377h0M1434 471h0M883 562h0M1376 231h0M960 281h0M590 550h0M867 463h0M1105 184h0M1132 178h0M607 757h0M1421 237h0M1007 344h0M1396 551h0M1465 541h0M1068 228h0M1486 270h0M721 138h0M1110 304h0M614 200h0M757 249h0M1099 190h0M1494 193h0M654 618h0M1325 380h0M1203 643h0M561 480h0M756 317h0M779 178h0M780 291h0M1005 310h0M1232 146h0M482 588h0M860 494h0M495 104h0M1069 261h0M1012 156h0M707 743h0M1494 502h0M1373 168h0M943 553h0M748 240h0M989 421h0M951 369h0M1345 116h0M1380 405h0M1152 445h0M835 413h0M1344 730h0M1453 199h0M1495 177h0M1416 613h0M1073 417h0M1075 371h0M1461 721h0M1067 312h0M505 253h0M1072 651h0M804 746h0M889 242h0M1298 285h0M1462 343h0M1438 491h0M1413 202h0M649 458h0M600 124h0M679 339h0M1369 590h0M1317 623h0M782 171h0M1261 421h0M1388 763h0M611 411h0M553 600h0M487 491h0M1317 142h0M487 240h0M1301 588h0M499 649h0M1254 666h0M694 383h0M888 746h0M1023 341h0M810 721h0M829 262h0M1488 565h0M1426 628h0M1266 663h0M1001 462h0M811 452h0M1391 325h0M1121 189h0M1015 727h0M626 173h0M1234 578h0M940 394h0M981 490h0M603 266h0M1216 80h0M640 267h0M728 566h0M1145 668h0M566 647h0M894 676h0M1072 404h0M526 157h0M1282 659h0M505 391h0M587 695h0M849 411h0M922 454h0M1236 191h0M878 196h0M1376 113h0M883 493h0M875 231h0M1031 639h0M992 143h0M771 360h0M952 752h0M687 591h0M556 662h0M1245 544h0M584 723h0M784 533h0M1388 584h0M898 260h0M688 704h0M1054 425h0M1035 431h0M744 577h0M1303 442h0M1344 166h0M610 231h0M556 286h0M1468 553h0M703 497h0M751 665h0M601 216h0M841 172h0M578 316h0M1166 85h0M1466 295h0M1034 466h0M650 695h0M718 466h0M1277 288h0M1303 174h0M700 254h0M619 626h0M528 636h0M1416 308h0M847 547h0M836 551h0M1386 106h0M687 488h0M852 153h0M825 651h0M1285 251h0M1131 315h0M1242 328h0M1476 162h0M1349 466h0M511 433h0M1419 596h0M745 195h0M1013 489h0M1095 359h0M1255 327h0M939 383h0M700 335h0M1127 692h0M599 124h0M966 701h0M1284 130h0M785 507h0M721 667h0M1273 356h0M862 615h0M1369 176h0M1218 240h0M1419 419h0M991 742h0M1495 492h0M1098 88h0M1390 388h0M957 461h0M1080 763h0M938 742h0M895 85h0M1356 290h0M639 217h0M1162 539h0M838 139h0M519 132h0M920 276h0M1130 419h0M1251 399h0M1158 736h0M1363 481h0M871 298h0M1284 208h0M1339 741h0M808 358h0M578 421h0M1020 120h0M1195 408h0M646 86h0M1050 221h0M1215 486h0M1500 159h0M1271 226h0M850 579h0M551 383h0M1246 81h0M1160 179h0M570 424h0M673 609h0M1304 253h0M1201 407h0M1334 529h0M1319 554h0M1420 320h0M794 139h0M1239 573h0M702 730h0M539 288h0M1163 342h0M1036 497h0M1269 146h0M738 726h0M710 695h0M1087 283h0M901 85h0M1298 601h0M832 336h0M561 500h0M1256 291h0M1104 293h0M614 142h0M1287 729h0M1091 261h0M1495 585h0M1325 462h0M772 124h0M574 388h0M891 266h0M488 658h0M627 300h0M998 128h0M1086 291h0M1094 761h0M754 711h0M1049 761h0M644 605h0M1007 678h0M547 388h0M757 317h0M1080 341h0M651 758h0M1247 548h0M563 681h0M735 616h0M964 420h0" stroke="#ffffff" stroke-opacity="0.35" stroke-width="1.4" stroke-linecap="round"/><path d="M627 160h0M1201 755h0M907 332h0M1267 444h0M1215 418h0M1321 569h0M737 130h0M489 717h0M909 756h0M1413 107h0M1130 565h0M571 505h0M1152 385h0M847 603h0M1025 362h0M659 762h0M1232 124h0M1482 511h0M653 380h0M1218 492h0M1406 374h0M1201 141h0M1368 261h0M904 190h0M1162 396h0M1021 126h0M681 420h0M516 534h0M979 209h0M1469 516h0M1122 160h0M1091 395h0M1184 87h0M1418 520h0M1203 234h0M978 130h0M555 638h0M1049 147h0M511 93h0M1176 488h0M723 197h0M1369 179h0M1167 541h0M1468 618h0M1069 356h0M1267 493h0M1193 128h0M878 733h0M1410 623h0M1117 685h0M1326 635h0M854 447h0M809 220h0M751 712h0M861 663h0M725 162h0M857 738h0M484 237h0M1486 761h0M1265 139h0M802 640h0M589 636h0M1442 88h0M1162 177h0M1024 665h0M1430 152h0M733 532h0M870 545h0M1433 637h0M944 138h0M929 648h0M1193 397h0M1331 568h0M1137 376h0M1029 228h0M760 646h0M1314 678h0M1078 525h0M1460 235h0M809 495h0M1334 590h0M701 723h0M1269 513h0M1327 276h0M916 93h0M624 301h0M790 327h0M500 416h0M561 668h0M893 172h0M497 304h0M1086 754h0M616 192h0M1459 84h0M579 728h0M1351 638h0M817 571h0M1163 656h0M1194 301h0M1241 538h0M891 476h0M1416 583h0M738 360h0M1192 217h0M587 392h0M577 593h0M1472 259h0M1055 708h0M1068 221h0M1315 458h0M782 409h0M1289 481h0M1462 276h0M1429 142h0M1157 208h0M563 111h0M888 740h0M1398 250h0M849 641h0M822 760h0M1109 402h0M804 126h0M1303 182h0M1418 732h0M607 442h0M1253 561h0M820 191h0M623 652h0M1148 95h0M664 395h0M816 258h0M709 87h0M1177 445h0M1440 276h0M1176 258h0M1328 460h0M1258 577h0M915 237h0M888 589h0M833 248h0M696 256h0M1185 467h0M907 248h0M577 293h0M827 633h0M1399 752h0M577 251h0M1168 631h0M682 538h0M1046 626h0M1157 164h0M888 559h0M1391 442h0M1084 438h0M913 735h0M1277 734h0M1193 667h0M899 341h0M1313 331h0M1034 212h0M1344 762h0M734 705h0M961 337h0M900 489h0M979 620h0M640 448h0M815 633h0M1381 601h0M1309 555h0M684 274h0M862 562h0M987 222h0M512 551h0M1494 499h0M573 473h0M1383 368h0M1371 195h0M921 173h0M593 258h0M1102 738h0M1140 160h0M1037 596h0M527 535h0M1465 205h0M734 716h0M1212 314h0M612 141h0M799 201h0M682 126h0M1334 419h0M498 561h0M977 282h0M1430 161h0M790 228h0M790 238h0M808 281h0M888 375h0M878 476h0M1007 328h0M1450 640h0M1111 204h0M1421 590h0M832 282h0M898 324h0M1296 131h0M931 115h0M688 421h0M1234 244h0M716 417h0M1118 81h0M545 461h0M1147 560h0M811 544h0M636 587h0M950 752h0M845 500h0M962 277h0M1103 593h0M1122 407h0M1188 424h0M586 401h0M1006 599h0M1101 300h0M1463 471h0M1323 731h0M809 371h0M984 185h0M510 548h0M504 652h0M1462 263h0M529 243h0M1152 386h0M1457 532h0M816 204h0M1357 699h0M931 581h0M739 222h0M1382 695h0M1243 595h0M1394 601h0M1334 198h0M1401 217h0M772 620h0M651 543h0M805 568h0M1339 275h0M523 361h0M1044 404h0M932 234h0" stroke="#e6ecf8" stroke-opacity="0.2" stroke-width="1.8" stroke-linecap="round"/><path d="M600 365h0M1190 258h0M1278 593h0M508 484h0M1187 389h0M1438 520h0M1494 356h0M625 438h0M1136 130h0M1061 105h0M712 370h0M1199 213h0M1491 149h0M499 604h0M484 755h0M1259 613h0M626 423h0M684 496h0M1455 239h0M1209 646h0M859 287h0M745 559h0M944 505h0M591 287h0M567 466h0M983 119h0M935 89h0M628 625h0M1093 290h0M514 757h0M1456 538h0M878 336h0M1320 406h0M706 118h0M1285 725h0M1468 128h0M875 399h0M1200 142h0M840 574h0M1101 374h0M1200 83h0M621 98h0M782 383h0M1046 725h0M1045 278h0M1462 313h0M845 327h0M1274 245h0M879 102h0M907 493h0M778 139h0M1484 582h0M1242 518h0M1471 611h0M1424 506h0M1286 588h0M1019 251h0M759 291h0M811 144h0M493 447h0M1184 590h0M543 282h0M1384 601h0M1028 239h0M965 454h0M729 530h0M558 694h0M1117 556h0M656 589h0M1445 401h0M1381 759h0M1130 132h0M1082 164h0M1171 352h0M1297 186h0M645 203h0M546 256h0M1493 506h0M1189 330h0M926 496h0M1400 158h0M906 734h0M894 238h0M1311 119h0M1448 532h0M800 345h0M861 361h0M1457 348h0M883 87h0M1347 613h0M1409 192h0M1236 709h0M1209 616h0M859 753h0M717 561h0M561 407h0M508 515h0M914 368h0M808 220h0M933 679h0M1319 456h0M789 172h0M925 166h0M902 737h0M1488 120h0M1480 220h0M522 311h0M1316 410h0M845 97h0M1410 520h0M607 621h0M619 285h0M824 381h0M1031 254h0M1198 614h0M520 542h0M900 564h0M1355 207h0M1400 629h0M495 110h0M1335 694h0M1116 240h0M1129 311h0M573 714h0M910 203h0M1478 221h0M1495 572h0M1175 698h0M1129 639h0M1328 600h0M1372 341h0M490 506h0M1290 287h0M1414 576h0M1318 82h0M853 193h0M1082 559h0M956 329h0M1033 264h0M660 361h0M994 103h0M1038 718h0M1022 203h0M1282 676h0M1324 456h0M1347 288h0M1499 288h0M782 521h0M636 208h0M1075 397h0M815 499h0M535 139h0M873 397h0M772 432h0M1207 133h0M948 510h0M1495 80h0M625 86h0M1355 162h0M1469 245h0M1192 601h0M510 695h0M1173 670h0M971 369h0M967 289h0M759 202h0M1488 84h0M1083 179h0M694 159h0M1042 493h0M904 529h0M725 312h0M636 219h0M525 639h0M1245 390h0M726 543h0M920 593h0M1247 317h0M954 744h0M1396 562h0M1398 197h0M1394 405h0M1066 290h0M969 540h0M639 475h0M629 411h0M745 685h0M486 371h0M1215 735h0M657 418h0M1319 376h0M939 91h0M890 745h0M636 305h0M1309 406h0M1272 518h0M1144 533h0M629 559h0M945 759h0M697 494h0M1320 91h0M854 311h0M1106 401h0M1045 322h0M508 471h0M1494 708h0M1359 232h0M892 558h0M707 291h0M1192 375h0M757 398h0M1378 637h0M937 136h0M781 733h0M1476 218h0M929 202h0M827 313h0M1250 100h0M1403 218h0M501 374h0M788 191h0M658 631h0M1062 318h0M1239 185h0M1076 539h0M764 412h0M1113 556h0M1262 560h0M665 629h0M747 445h0M940 319h0M1305 204h0M703 245h0M1336 706h0M1479 399h0M1339 289h0M556 202h0M1467 318h0M1078 454h0M789 745h0M1496 175h0M1191 579h0M902 202h0M1468 758h0M721 450h0M770 220h0M869 392h0M683 246h0M1416 481h0M1180 723h0M981 410h0M1323 139h0M620 670h0M1479 340h0M1403 652h0M1074 488h0M910 246h0M1387 752h0M1413 712h0M484 755h0M1225 574h0M567 670h0M598 727h0M553 298h0M1178 611h0M1204 275h0M1129 121h0M1131 749h0M794 210h0M1311 294h0M1017 163h0M1001 469h0M569 174h0M1053 92h0M742 418h0M485 424h0M1403 335h0M1427 341h0M664 147h0M540 163h0M1442 522h0M1068 336h0M678 123h0M1078 727h0M952 347h0M1091 430h0M1181 318h0M1225 172h0M736 639h0" stroke="#e6ecf8" stroke-opacity="0.35" stroke-width="1.8" stroke-linecap="round"/><path d="M1109 576h0M996 119h0M1397 416h0M766 326h0M1208 562h0M1024 208h0M869 192h0M540 278h0M1199 461h0M1241 351h0M991 697h0M484 439h0M515 658h0M853 757h0M542 284h0M1302 572h0M882 334h0M713 197h0M1168 356h0M1049 554h0M1181 124h0M1271 534h0M869 271h0M646 416h0M1209 712h0M1209 94h0M842 322h0M614 691h0M997 384h0M1461 618h0M706 592h0M639 692h0M651 98h0M1308 421h0M1218 261h0M1203 440h0M890 530h0M680 713h0M1434 601h0M499 175h0M889 337h0M1122 364h0M799 552h0M752 244h0M552 600h0M600 754h0M1232 615h0M559 424h0M890 191h0M797 347h0M1243 453h0M876 461h0M1214 621h0M913 597h0M530 640h0M539 751h0M524 180h0M1114 505h0M521 193h0M1122 303h0M610 430h0M653 399h0M1466 225h0M829 445h0M582 326h0M667 184h0M704 121h0M1262 681h0M1479 265h0M725 225h0M509 656h0M769 330h0M1191 479h0M716 363h0M649 532h0M616 710h0M1498 287h0M1251 602h0M705 323h0M481 471h0M1379 241h0M1338 750h0" stroke="#e6ecf8" stroke-opacity="0.5" stroke-width="1.8" stroke-linecap="round"/><path d="M1418 558h0M763 309h0M1009 529h0M842 539h0M1197 348h0M816 509h0M1407 206h0M758 245h0M971 534h0M764 267h0M618 103h0M915 365h0M785 603h0M725 178h0M1019 97h0M953 107h0M830 464h0M967 663h0M1097 466h0M1423 490h0M539 99h0M934 688h0M1318 83h0M513 159h0M854 236h0M590 95h0M705 723h0M1491 635h0M1135 482h0M1017 130h0M1075 586h0M1406 678h0M660 223h0M482 510h0M565 430h0M773 681h0M784 427h0M1045 186h0M1270 133h0M763 259h0M866 713h0M828 389h0M1141 482h0M970 360h0M645 376h0M1037 670h0M1108 537h0M1269 397h0M888 544h0M503 403h0M1294 649h0M594 427h0M843 713h0M1391 465h0M667 554h0M539 741h0M1130 567h0M1306 114h0M1313 373h0M901 356h0M1262 659h0M1326 203h0M1367 760h0M861 200h0M1251 527h0" stroke="#e6ecf8" stroke-opacity="0.75" stroke-width="1.8" stroke-linecap="round"/><path d="M999 406h0M1009 425h0M974 413h0M999 426h0M999 421h0M1012 477h0M995 417h0M990 429h0M1004 393h0M983 408h0M953 406h0M962 436h0M969 441h0M1003 442h0M992 421h0M999 420h0M1024 417h0M993 422h0M966 380h0M1014 437h0M990 426h0M989 421h0M1049 414h0M1012 413h0M985 432h0M988 415h0M1000 423h0M974 423h0M971 429h0M975 419h0M945 424h0M988 422h0M979 445h0M1043 420h0M995 416h0M977 416h0M993 453h0M977 427h0M988 421h0M974 384h0M991 422h0M999 423h0M994 423h0M1003 470h0M979 433h0M967 431h0M984 407h0M989 411h0M1010 388h0M1032 387h0M1050 429h0M1023 411h0M999 423h0M1004 434h0M993 424h0M988 422h0M962 430h0M1007 393h0M972 420h0M1011 410h0M985 425h0M989 444h0M1003 416h0M980 419h0M983 414h0M989 423h0M954 411h0M969 477h0M1037 422h0M1010 393h0M984 424h0M982 429h0M994 419h0M938 389h0M973 459h0M1001 397h0M988 437h0M987 420h0M1000 460h0M994 390h0M974 397h0M954 452h0M1002 417h0M988 419h0M1021 405h0M975 417h0M933 427h0M999 416h0M934 415h0M1008 428h0M989 412h0M945 422h0M1000 433h0M974 425h0M1018 430h0M974 411h0M971 406h0M1012 437h0M1004 438h0M994 441h0M1019 451h0M969 432h0M963 393h0M1017 469h0M989 423h0M957 413h0M982 418h0M986 363h0M981 434h0M980 418h0M989 422h0M977 383h0M986 442h0M965 378h0M952 428h0M1022 415h0M1011 445h0M995 427h0M991 423h0M997 424h0M963 415h0M1008 409h0M958 400h0M991 428h0M1012 382h0M988 422h0M988 431h0M982 414h0M1046 402h0M1002 421h0M990 420h0M970 428h0M1009 413h0M1012 417h0M998 397h0M950 457h0M971 427h0M992 418h0M1024 412h0M1019 411h0M1000 428h0M1000 431h0M1031 406h0M1011 442h0M1004 408h0M999 439h0M998 396h0M989 429h0M976 407h0M977 416h0M1003 398h0M962 455h0M972 457h0M1012 447h0M989 412h0M981 475h0M977 479h0M1015 421h0M991 420h0M993 388h0M993 401h0M992 424h0M996 416h0M990 413h0M989 440h0M965 396h0M994 427h0M988 427h0M988 417h0M987 418h0M1019 399h0M985 422h0M967 443h0M1017 410h0M996 438h0M993 428h0M1002 430h0M969 410h0M993 415h0M986 413h0M990 419h0M998 408h0M967 409h0M964 418h0M989 414h0M1018 418h0M957 414h0M974 402h0M961 445h0M1004 364h0M1003 433h0M993 395h0M989 423h0M1043 450h0M975 423h0M983 394h0M988 426h0M960 422h0M992 407h0M969 421h0M989 421h0M983 427h0M1009 429h0M970 456h0M1015 426h0M993 426h0M983 414h0M979 415h0M1018 457h0M1007 404h0M977 423h0M973 419h0M993 424h0M993 408h0M1021 427h0M990 421h0M989 419h0M1000 405h0M969 408h0M987 405h0M1011 410h0M940 431h0M1004 454h0M935 422h0M1010 395h0M1002 456h0M998 450h0M991 423h0M988 420h0M993 418h0M999 466h0M983 425h0M987 425h0M992 424h0M1007 484h0M967 413h0M977 444h0M972 407h0M1001 419h0M993 413h0M997 422h0M997 373h0M994 430h0M986 438h0M989 422h0M993 440h0M1001 450h0M949 443h0M1011 428h0M983 426h0M980 402h0M943 410h0M988 420h0M972 431h0M994 433h0M992 418h0M991 422h0M960 413h0M976 432h0M1001 412h0M996 420h0M977 420h0M992 422h0M1015 405h0M1047 434h0M987 433h0M982 465h0M982 429h0M999 463h0M985 412h0M993 421h0M1012 427h0M990 386h0M986 416h0M982 415h0M994 390h0M959 465h0M991 399h0M946 405h0M975 416h0M985 423h0M989 420h0M1005 374h0M996 424h0M980 436h0M1003 424h0M966 462h0M999 417h0M1002 417h0M994 432h0M989 421h0M1003 387h0M988 420h0M989 397h0M975 452h0M963 425h0M1018 391h0M956 382h0M982 392h0M1013 391h0M1000 414h0M970 440h0M943 414h0M995 431h0M991 425h0M992 431h0M1003 408h0M959 427h0M1011 424h0M999 439h0M992 438h0M984 395h0M1004 454h0M952 392h0M987 464h0M993 410h0M978 447h0M989 423h0M991 421h0M1001 409h0M957 413h0M961 435h0M1010 390h0M956 411h0M1007 428h0M995 407h0M967 421h0M1016 390h0M1005 413h0M978 376h0M1035 431h0M1034 451h0M951 406h0M1022 441h0M982 398h0M1002 434h0M992 417h0M991 414h0M1015 422h0M1040 416h0M992 426h0M1004 424h0M1014 431h0M940 391h0M988 447h0M988 418h0M988 421h0M964 429h0M989 420h0M1002 473h0M998 429h0M985 429h0M994 428h0M999 453h0M987 385h0M1017 419h0M1011 410h0M982 429h0M1003 455h0M988 424h0M994 420h0M992 438h0M992 423h0M972 400h0M993 422h0M938 392h0M989 465h0M990 421h0M982 415h0M1031 465h0M988 417h0M1008 426h0M989 422h0M944 390h0M977 430h0M997 408h0M1013 426h0M992 431h0M1018 403h0M973 426h0M1028 446h0M992 420h0M1023 421h0M999 437h0M954 400h0M979 362h0M1018 457h0M968 362h0M975 386h0M1004 421h0M1010 418h0M997 404h0M1006 392h0M1021 440h0M1011 412h0M1013 421h0M996 469h0M972 389h0M978 416h0M1007 449h0M1000 432h0M989 425h0M994 390h0M999 411h0M971 403h0M991 419h0M958 464h0M979 422h0M975 434h0M1021 434h0M991 422h0M988 419h0M984 418h0M991 421h0M1014 438h0M982 395h0M994 413h0M960 432h0M1008 404h0M1037 388h0M1000 420h0M1019 474h0M988 468h0M987 440h0M989 424h0M1018 403h0M947 415h0M990 440h0M982 418h0M992 423h0M977 401h0M1014 434h0M997 422h0M1015 433h0M999 399h0M990 421h0M988 418h0M1019 439h0M996 464h0M987 417h0M1008 410h0M969 412h0M976 446h0M986 405h0M985 420h0M973 418h0M1041 434h0M1012 409h0" stroke="#e8eef8" stroke-opacity="0.55" stroke-width="1.8" stroke-linecap="round"/><path d="M999 432h0M995 446h0M988 421h0M980 465h0M999 424h0M990 420h0M989 406h0M997 420h0M1022 414h0M982 431h0M968 412h0M983 395h0M982 402h0M983 412h0M984 479h0M984 436h0M992 456h0M982 399h0M1016 470h0M979 454h0M1006 418h0M987 422h0M976 406h0M999 421h0M1012 422h0M1007 437h0M980 464h0M994 425h0M992 400h0M1000 409h0M973 453h0M989 445h0M976 420h0M1006 428h0M978 439h0M989 401h0M1032 397h0M985 409h0M1003 430h0M974 397h0M961 443h0M989 446h0M1000 412h0M996 446h0M977 439h0M993 410h0M994 435h0M989 425h0M970 434h0M1024 400h0M1007 438h0M1005 428h0M963 408h0M986 402h0M958 432h0M972 429h0M1022 395h0M956 417h0M1007 421h0M984 424h0M1000 424h0M973 458h0M974 423h0M981 445h0M987 442h0M1004 409h0M1009 396h0M999 384h0M990 420h0M982 475h0M994 428h0M997 430h0M1023 414h0M1029 440h0M952 417h0M983 378h0M991 423h0M965 400h0M1002 421h0M989 421h0M1002 419h0M990 422h0M1000 416h0M968 428h0M1006 383h0M1014 388h0M993 430h0M1015 428h0M1008 419h0M968 440h0M985 424h0M986 454h0M1009 427h0M1000 430h0M963 417h0M1009 450h0M978 445h0M954 375h0M986 425h0M1000 450h0M1002 374h0M1003 407h0M986 419h0M991 400h0M977 396h0M957 436h0M987 421h0M968 414h0M1038 407h0M994 435h0M992 485h0M971 403h0M1000 414h0M998 432h0M989 428h0M1000 423h0M1010 405h0M996 414h0M982 422h0M1025 402h0M984 409h0M937 449h0M995 422h0M988 423h0M990 419h0M980 421h0M985 394h0M964 470h0M1018 410h0M995 426h0M951 430h0M974 415h0M1014 410h0M993 422h0M1019 415h0M985 414h0M973 448h0M981 436h0M986 394h0M1002 415h0M994 442h0M974 408h0M992 421h0M993 426h0M979 448h0M1016 449h0M1011 412h0M993 407h0M991 424h0M991 433h0M965 453h0M980 410h0M988 417h0M991 426h0M1017 460h0M1011 448h0M973 444h0M983 413h0M991 404h0M992 400h0M962 397h0M1019 432h0M987 414h0M989 419h0M975 414h0M960 388h0M981 424h0M991 423h0M1043 446h0M947 415h0M992 420h0M972 418h0M991 465h0M982 408h0M945 403h0M997 415h0M1004 407h0M986 417h0M946 402h0M983 423h0M943 395h0M996 425h0M974 417h0M966 403h0M1024 424h0M990 423h0M965 423h0M978 449h0M995 389h0M1027 419h0M966 412h0M1018 430h0M986 423h0M994 423h0M989 421h0M973 415h0M1006 422h0M1021 428h0M967 418h0M967 441h0M1013 432h0M998 397h0M986 406h0M1032 437h0M983 410h0M995 422h0M980 424h0M1001 427h0M1029 392h0M985 422h0M983 449h0M993 420h0M998 408h0M994 420h0M998 433h0M989 424h0M1000 406h0M987 427h0M968 441h0M994 421h0M987 409h0M988 425h0M984 436h0M983 434h0M992 401h0M991 422h0M980 425h0M1036 444h0M991 422h0M990 418h0M993 459h0M1015 411h0M997 392h0M938 403h0M1003 441h0M982 411h0M990 413h0M982 419h0M980 450h0M987 425h0M982 425h0M1004 468h0M989 423h0M989 423h0M1012 415h0M1008 437h0M991 402h0M996 424h0M1004 430h0M990 422h0M989 398h0M992 422h0M977 463h0M979 431h0M988 433h0M995 404h0M983 418h0M1033 458h0M979 429h0M986 385h0M984 466h0M971 412h0M988 433h0M959 417h0M983 404h0M1002 402h0M994 417h0M983 413h0M995 458h0M997 423h0M986 481h0M994 470h0M953 419h0M984 420h0M1007 383h0M1016 435h0M974 472h0M944 414h0M1021 423h0M969 428h0M971 428h0M964 465h0M1006 396h0M998 411h0M991 422h0M986 417h0M1013 432h0M1004 435h0M982 429h0M982 401h0M978 416h0M1050 409h0M1006 420h0M1010 393h0M1030 400h0M997 403h0M984 411h0M989 421h0M989 423h0M967 399h0M987 459h0M983 423h0M972 425h0M991 443h0M971 390h0M978 434h0M1014 434h0M990 404h0M997 411h0M1004 434h0M987 428h0M969 439h0M982 421h0M1037 433h0M1011 462h0M985 421h0M1004 418h0M1000 396h0M954 415h0M993 424h0M968 415h0M1005 405h0M991 421h0M999 433h0M988 425h0M972 431h0M991 448h0M995 396h0M1003 448h0M990 422h0M988 422h0M994 406h0M988 424h0M985 423h0M962 476h0M957 417h0M990 421h0M995 427h0M980 439h0M972 414h0M1001 461h0M973 421h0M971 417h0M1001 408h0M988 426h0M974 430h0M961 402h0M1042 406h0M999 432h0M1003 430h0M974 408h0M1010 418h0M1003 446h0M1028 417h0M990 424h0M994 385h0M966 413h0M1006 365h0M989 429h0M998 385h0M1000 452h0M1003 424h0M992 419h0M982 406h0M988 415h0M1021 471h0M992 420h0M997 408h0M961 423h0M982 441h0M988 452h0M990 423h0M1021 415h0M1010 429h0M1002 389h0M1030 399h0M980 408h0M970 417h0M993 422h0M987 444h0M1012 432h0M997 447h0M986 425h0M968 435h0M995 419h0M1002 403h0M991 453h0M1011 411h0M1008 418h0M987 430h0M980 427h0M1040 407h0M972 394h0M968 427h0M994 434h0M994 419h0M994 431h0M991 423h0M991 421h0M997 414h0M977 416h0M991 422h0M975 391h0M997 450h0M1001 434h0M961 382h0M1018 429h0M1007 406h0M958 408h0M1012 424h0M982 412h0M974 447h0M994 427h0M1037 431h0M964 454h0M984 420h0M1003 400h0M981 421h0M972 449h0M995 411h0M990 419h0M968 407h0M972 408h0M985 435h0M1013 432h0M997 430h0M991 422h0M981 437h0M1004 403h0M948 409h0M1019 449h0M1002 419h0M989 418h0M952 430h0M989 415h0M996 377h0M982 396h0M982 422h0M996 422h0M933 425h0M1015 413h0M993 395h0M965 416h0M991 416h0M967 430h0M966 421h0M943 403h0M1034 437h0M1004 426h0M995 447h0M1007 428h0M1025 425h0M1002 408h0M969 426h0M977 400h0M974 427h0M970 410h0M949 454h0M1009 470h0" stroke="#e8eef8" stroke-opacity="0.8" stroke-width="1.8" stroke-linecap="round"/><path d="M955 712h0M1016 678h0M1385 317h0M1255 704h0M929 91h0M1027 432h0M492 760h0M531 217h0M919 117h0M935 259h0M481 340h0M559 180h0M825 122h0M1038 99h0M1334 109h0M678 751h0M1233 333h0M1129 544h0M1172 409h0M1121 565h0M506 470h0M1093 647h0M1383 706h0M1151 433h0M1234 588h0M1073 139h0M1144 737h0M1441 763h0M1211 253h0M715 172h0M769 532h0M1313 321h0M1222 177h0M1165 684h0M1453 173h0M572 312h0M758 200h0M719 510h0M686 369h0M920 495h0M516 229h0M837 409h0M1339 677h0M1111 553h0M944 633h0M761 327h0M1397 588h0M1140 679h0M947 602h0M593 233h0M1300 738h0M690 88h0M1057 295h0M1201 252h0M1258 652h0M1149 489h0M1352 629h0M1230 325h0M682 89h0M906 407h0M726 256h0M862 321h0M995 302h0M1398 582h0M1299 369h0M805 598h0M1081 171h0M1142 146h0M963 617h0M1054 147h0M1393 554h0M1163 418h0M725 230h0M973 310h0M1483 375h0M722 381h0M845 309h0M532 559h0M1367 757h0M1304 677h0M681 220h0M1139 649h0M929 602h0M1356 415h0M732 432h0M1299 199h0M1274 604h0M760 446h0M636 440h0M665 638h0M886 94h0M504 652h0M1279 574h0M1017 413h0M751 243h0M1270 698h0M1142 451h0M824 568h0M1418 619h0M1026 130h0M1069 719h0M833 96h0M1086 311h0M1473 651h0M702 235h0M618 259h0M1292 130h0M568 131h0M1097 587h0M1436 697h0M797 332h0M621 477h0M604 675h0M1186 457h0M1008 108h0M1315 685h0M1498 582h0M1220 106h0M516 614h0M712 172h0M1028 292h0M935 390h0M853 338h0M590 285h0M707 633h0M888 368h0M869 488h0M1033 302h0M775 335h0M954 87h0M1412 712h0M822 332h0M1228 182h0M1258 269h0M926 567h0M1066 507h0M719 504h0M1258 440h0M1337 556h0M1404 539h0M1425 361h0M740 568h0M756 333h0M481 160h0M872 570h0M825 439h0M772 349h0M524 192h0M1417 625h0M1236 536h0M614 680h0M584 466h0M1157 190h0M630 313h0M1387 299h0M1462 238h0M1238 578h0M636 681h0M665 703h0M1309 728h0M591 176h0M686 193h0M635 421h0M953 248h0M749 184h0M571 232h0M560 706h0M519 745h0M1486 624h0M713 510h0M966 693h0M1015 87h0M972 87h0M829 415h0M1442 741h0M678 354h0M623 465h0M1370 472h0M1108 728h0M550 651h0M1382 380h0M1238 190h0M1367 135h0M803 395h0M1183 257h0M1206 404h0M880 720h0M594 472h0M1082 440h0M1427 672h0M1114 687h0M851 747h0M539 763h0M1141 316h0M602 194h0M999 454h0M1488 115h0M1131 113h0M925 517h0M990 469h0M1394 498h0M845 292h0M1487 310h0M1364 454h0M1381 403h0M976 407h0M1152 745h0M836 226h0M1449 258h0M929 336h0M1399 209h0M540 125h0M1281 361h0M1113 673h0M594 677h0M1327 739h0M605 151h0M848 452h0M561 101h0M1111 253h0M985 120h0M1413 317h0M947 109h0M1318 293h0M1308 406h0M504 99h0M809 91h0M1054 517h0M621 205h0M1367 353h0M1425 262h0M1229 636h0M967 188h0M1277 385h0M1166 445h0M874 179h0M1164 651h0M1130 753h0M1294 476h0M552 374h0M914 126h0M631 515h0M801 731h0M916 540h0M549 646h0M1225 272h0M766 384h0M1195 558h0M511 706h0M1372 664h0M1255 167h0M1100 623h0M1083 758h0M948 377h0M1488 205h0M519 321h0M1377 284h0M988 282h0M1442 708h0M925 275h0M1415 127h0M1500 415h0M858 604h0M1180 450h0M1261 669h0M1152 321h0M698 545h0M805 442h0M596 594h0M1290 97h0M1200 252h0M628 398h0M1197 375h0M616 162h0M1140 522h0M893 714h0M673 693h0M1325 353h0M1226 686h0" stroke="#f2ece0" stroke-opacity="0.2" stroke-width="1.8" stroke-linecap="round"/><path d="M1140 759h0M798 178h0M697 422h0M603 306h0M903 272h0M515 311h0M798 576h0M1242 695h0M780 467h0M886 265h0M912 641h0M1103 252h0M666 189h0M1108 735h0M823 258h0M494 366h0M1279 237h0M842 417h0M1369 174h0M967 612h0M718 476h0M664 559h0M1253 151h0M1339 509h0M1470 115h0M725 309h0M528 466h0M1168 480h0M1053 158h0M570 277h0M836 729h0M1101 282h0M653 326h0M1145 455h0M841 302h0M1188 301h0M1471 80h0M539 201h0M890 107h0M1388 497h0M983 747h0M556 461h0M1074 725h0M959 129h0M543 396h0M1349 722h0M657 603h0M712 297h0M1367 323h0M1132 406h0M1456 391h0M1221 457h0M651 538h0M583 358h0M523 321h0M601 509h0M734 713h0M1226 225h0M1393 660h0M485 360h0M827 332h0M1309 185h0M997 105h0M1490 409h0M794 432h0M725 508h0M934 674h0M1255 362h0M714 613h0M613 545h0M1302 396h0M1008 180h0M583 562h0M840 554h0M1141 384h0M700 359h0M1469 714h0M641 650h0M1246 234h0M984 83h0M725 483h0M928 744h0M767 320h0M961 690h0M490 222h0M736 625h0M1260 421h0M557 674h0M888 122h0M1475 678h0M1160 84h0M1002 492h0M968 263h0M614 635h0M608 326h0M800 322h0M827 324h0M1171 92h0M778 143h0M1390 465h0M1489 716h0M1472 685h0M1464 741h0M833 458h0M1300 94h0M1260 739h0M1032 175h0M903 180h0M592 714h0M1440 324h0M1266 472h0M1394 629h0M766 721h0M642 308h0M1354 216h0M826 337h0M716 494h0M873 355h0M913 533h0M1214 739h0M1028 508h0M653 247h0M1031 743h0M1151 155h0M1414 755h0M1490 374h0M1211 266h0M1236 743h0M1090 758h0M1328 299h0M931 185h0M697 108h0M995 506h0M1228 96h0M919 694h0M1092 687h0M1397 295h0M1426 511h0M785 540h0M1398 93h0M1440 465h0M637 327h0M556 726h0M1047 453h0M670 279h0M607 514h0M664 508h0M544 191h0M1249 366h0M704 571h0M1191 523h0M493 623h0M795 560h0M1335 455h0M895 92h0M821 581h0M1094 224h0M838 464h0M1180 130h0M832 379h0M988 660h0M618 303h0M1290 385h0M893 727h0M539 171h0M1204 90h0M1064 629h0M709 315h0M746 359h0M1319 422h0M588 727h0M1098 577h0M1246 744h0M634 294h0M1291 586h0M905 467h0M984 558h0M1242 621h0M774 414h0M1218 247h0M1484 304h0M1438 183h0M1022 362h0M1289 534h0M786 642h0M1495 198h0M613 549h0M1157 705h0M649 198h0M1268 560h0M640 738h0M587 659h0M1257 482h0M853 128h0M1047 678h0M578 609h0M630 532h0M1377 521h0M1134 314h0M986 570h0M746 132h0M511 157h0M885 684h0M557 655h0M801 173h0M1247 763h0M1123 521h0M1392 540h0M1452 133h0M1282 231h0M645 509h0M736 96h0M556 559h0M1021 408h0M790 616h0M840 452h0M831 243h0M1209 444h0M651 505h0M842 517h0M523 678h0M547 212h0M1350 317h0M1333 578h0M696 652h0M608 346h0M772 151h0M694 570h0M1437 385h0M952 471h0M1087 151h0M1280 601h0M1177 617h0M689 439h0M872 382h0M1412 81h0M895 760h0M1015 632h0M1016 571h0M622 500h0M1393 166h0M1034 99h0M1162 94h0M1349 501h0M547 138h0M827 235h0M1341 673h0M1486 393h0M1171 152h0M1070 134h0M750 198h0M1472 190h0M1128 373h0M1189 368h0" stroke="#f2ece0" stroke-opacity="0.35" stroke-width="1.8" stroke-linecap="round"/><path d="M1428 480h0M756 593h0M959 748h0M958 187h0M928 651h0M561 301h0M998 421h0M800 646h0M1234 472h0M1445 248h0M960 338h0M544 491h0M493 136h0M552 702h0M1151 459h0M1317 440h0M1190 410h0M996 662h0M809 608h0M1376 466h0M540 232h0M738 86h0M722 466h0M1380 211h0M1228 630h0M1017 465h0M963 140h0M942 522h0M558 319h0M956 598h0M1104 554h0M1108 474h0M1317 479h0M845 370h0M1099 577h0M1487 582h0M716 105h0M1005 414h0M516 268h0M1204 141h0M1145 259h0M745 733h0M1304 696h0M1478 681h0M829 426h0M1099 100h0M665 639h0M1323 334h0M1173 376h0M653 653h0M490 526h0M906 522h0M600 679h0M875 629h0M1458 116h0M1086 217h0M886 402h0M860 415h0M1229 757h0M647 86h0M1015 695h0M1192 121h0M1291 360h0M529 187h0M1484 383h0M643 517h0M770 619h0M728 431h0M951 666h0M1459 303h0M637 251h0M1261 615h0M1070 366h0M507 706h0M1180 241h0M1386 577h0M735 716h0M608 191h0M1106 347h0M559 662h0M695 489h0M1242 648h0M831 604h0M923 699h0" stroke="#f2ece0" stroke-opacity="0.5" stroke-width="1.8" stroke-linecap="round"/><path d="M1093 412h0M1450 397h0M599 271h0M869 518h0M532 129h0M929 571h0M660 256h0M792 396h0M1214 184h0M1013 431h0M486 595h0M1169 642h0M664 233h0M1372 105h0M917 515h0M832 493h0M1449 526h0M1372 393h0M1076 634h0M1376 678h0M1294 299h0M1041 388h0M1190 659h0M709 133h0M821 439h0M1328 229h0M547 586h0M1257 150h0M1090 431h0M747 359h0M629 664h0M1367 128h0M941 744h0M1368 661h0M969 722h0M1369 758h0M1093 656h0M493 170h0M1262 115h0M512 730h0M913 347h0M958 315h0M1167 319h0M882 533h0M1263 329h0M539 132h0M775 137h0M958 655h0M776 227h0M1113 343h0M712 684h0M1316 336h0M683 204h0M1063 487h0M975 132h0M1476 158h0M1226 184h0M884 489h0M649 275h0M847 494h0M593 135h0M1182 586h0M1296 544h0M1137 381h0M589 665h0M977 758h0M965 739h0M522 411h0M1246 663h0M764 495h0M743 374h0M1303 345h0M1011 243h0M696 149h0M1246 513h0M728 612h0" stroke="#f2ece0" stroke-opacity="0.75" stroke-width="1.8" stroke-linecap="round"/><path d="M1073 517h0M1189 486h0M1233 352h0M1328 204h0M882 409h0M1127 733h0M1176 443h0M905 348h0M917 225h0M1316 661h0M558 703h0M493 121h0M1251 664h0M925 295h0M1149 285h0M1404 762h0M914 602h0M555 716h0M1102 693h0M1448 179h0M504 487h0M668 387h0M1264 290h0M814 298h0M880 189h0M1003 201h0M897 334h0M1108 242h0M1132 753h0M1377 597h0M1009 146h0M1187 422h0M625 493h0M1274 345h0M1130 252h0M1147 298h0M1152 327h0M1394 508h0M803 729h0M778 121h0M1182 299h0M834 137h0M862 152h0M802 100h0M519 254h0M1334 111h0M746 154h0M822 656h0M670 649h0M710 367h0M1082 717h0M1231 586h0M1105 400h0M820 208h0M1458 219h0M845 486h0M976 381h0M593 692h0M1074 736h0M1033 264h0M510 545h0M594 602h0M620 549h0M539 152h0M571 106h0M567 301h0M1150 173h0M724 431h0M677 385h0M1029 551h0M505 760h0M1467 554h0M820 93h0M788 290h0M806 199h0M888 216h0M541 465h0M666 671h0M995 238h0M1456 744h0M881 439h0M1156 437h0M867 439h0M1320 216h0M692 526h0M1152 255h0M632 205h0M980 91h0M881 434h0M1439 361h0M1364 113h0M1322 616h0M1036 136h0M873 739h0M525 270h0M525 199h0M1355 328h0M621 155h0M728 699h0M1063 710h0M1098 160h0M1202 583h0M1334 118h0M720 99h0M933 243h0M1075 723h0M1498 172h0M1136 361h0M1281 239h0M1498 517h0M1426 260h0M1336 369h0M798 128h0M1078 210h0M1115 644h0M1430 680h0M1275 575h0M1442 723h0M1401 97h0M667 278h0M909 431h0M841 370h0M774 418h0M713 118h0M941 683h0M1065 700h0M889 730h0M1244 178h0M1011 161h0M830 144h0M989 273h0M889 551h0M1129 185h0M758 121h0M857 264h0M1349 689h0M1078 473h0M755 611h0M1438 680h0M1176 542h0M1042 171h0M687 695h0M889 189h0M1078 211h0M1480 676h0M1141 334h0M708 245h0M1179 695h0M1199 501h0M1013 285h0M1157 620h0M657 525h0M965 524h0M956 381h0M1085 395h0M887 210h0M791 416h0M898 736h0M1393 249h0M1127 444h0M553 339h0M535 704h0M548 366h0M1255 720h0M1276 382h0M1088 527h0M1046 342h0M1052 406h0M959 688h0M816 171h0M913 227h0M582 482h0M1370 92h0M740 480h0M1315 288h0M1322 167h0M727 751h0M857 619h0M635 304h0M834 525h0M1188 529h0M961 397h0M626 132h0M830 359h0M1173 145h0M1179 496h0M600 202h0M724 316h0M500 653h0M1151 213h0M879 400h0M1255 227h0M873 740h0M600 689h0M1330 722h0M852 618h0M1423 459h0M879 335h0M968 120h0M979 245h0M980 453h0M1258 328h0M672 572h0M629 426h0M1207 303h0M1076 322h0M1331 396h0M770 207h0M493 735h0M903 647h0M849 533h0M1111 336h0M1224 574h0M1209 304h0M1495 185h0M1164 277h0M1341 659h0M944 182h0M774 332h0M1139 179h0M949 428h0M803 705h0M524 517h0M1424 524h0M1309 583h0M490 87h0M849 679h0M1129 489h0M1277 296h0M570 544h0M617 574h0M832 267h0M1410 377h0M617 375h0M1167 540h0M1076 223h0M1213 595h0M1341 292h0M777 370h0M1018 603h0M1461 733h0M1303 158h0M1346 339h0M1088 510h0M1345 363h0M1212 327h0M1190 136h0M1108 206h0M671 427h0M909 476h0M777 112h0M590 181h0M1167 502h0M887 539h0M1237 696h0M1100 322h0M1348 512h0M1024 320h0M1403 136h0M714 635h0M659 654h0M715 223h0M1209 619h0M1425 760h0M704 495h0M510 108h0M852 160h0M595 309h0M1430 703h0M855 451h0M1298 297h0M1310 437h0M1158 386h0M734 315h0M703 141h0M1077 535h0M1469 760h0M704 429h0M974 378h0M765 466h0M1321 375h0M1166 164h0M1445 151h0M1136 122h0M1082 168h0M536 387h0M1211 659h0M664 517h0M1445 108h0M1207 691h0M836 128h0M1074 173h0M823 508h0M519 221h0M650 693h0M607 489h0M955 100h0M614 599h0M930 128h0M1127 243h0M626 221h0M745 215h0M1395 354h0M1026 416h0M1054 447h0M535 301h0M1092 230h0M1112 398h0M1106 229h0M1177 187h0M1034 165h0M949 223h0M598 404h0M1405 385h0M785 488h0M516 434h0M812 535h0M1019 160h0M1477 352h0M1081 292h0M1487 212h0M545 564h0M1305 251h0M859 182h0M1364 523h0M1259 299h0M786 114h0M1392 138h0M757 173h0M1295 521h0M1129 179h0M1025 674h0M808 298h0M655 719h0M687 642h0M840 433h0M974 410h0M551 534h0M602 212h0M1428 171h0M1018 187h0M1141 319h0M1177 175h0M574 536h0M827 485h0M563 625h0M510 348h0M1435 134h0M780 621h0M814 165h0M674 486h0M1420 344h0M1213 647h0M562 271h0M593 512h0M987 616h0M870 386h0M589 183h0M1209 471h0M1383 413h0M1428 630h0M619 444h0M1091 596h0M560 238h0M1193 89h0M646 240h0M1265 402h0M568 235h0M736 596h0M684 298h0M817 625h0M1284 718h0M1219 463h0M716 414h0M863 391h0M721 480h0M1260 458h0M1070 364h0M1102 305h0M625 184h0M912 423h0M1397 121h0M1312 80h0M544 365h0M1337 714h0M687 667h0M896 634h0M563 422h0M988 475h0M599 236h0M1183 758h0M1258 557h0M874 693h0M1286 575h0M864 663h0M1065 350h0M564 318h0M552 519h0M812 698h0M896 233h0M623 334h0M1263 674h0M1010 485h0M1451 400h0M771 450h0M712 180h0M1099 276h0M695 275h0M889 369h0M653 676h0M711 103h0M1224 317h0M839 595h0M1060 376h0M1017 589h0M1444 576h0M717 317h0M936 111h0M697 631h0M978 421h0M676 673h0M793 86h0M941 420h0M1176 366h0M1006 545h0M1282 150h0M729 530h0M1151 685h0M1422 396h0M765 447h0M1217 161h0M1380 579h0M739 520h0M1297 229h0M1220 363h0M838 288h0M1061 560h0M538 747h0M1234 604h0M1033 639h0M1439 396h0M998 529h0M770 116h0M735 519h0M1064 507h0M991 762h0M794 702h0M955 204h0M669 442h0M782 249h0M1468 205h0M1278 545h0M1333 739h0M964 458h0M894 550h0M1268 114h0M1258 659h0M1019 292h0M1185 613h0M518 522h0M570 88h0M1332 673h0M1297 657h0M1361 510h0M611 530h0M569 617h0M770 322h0M537 406h0M551 594h0M832 722h0M1061 574h0M979 451h0M1067 563h0M1034 603h0M1136 271h0M1072 188h0M1454 619h0M801 90h0M1014 539h0M513 481h0M1380 703h0M1205 395h0M1480 226h0M581 167h0M1104 344h0M1265 96h0M1204 242h0M1457 100h0M1060 697h0M832 628h0M959 279h0M573 432h0M480 342h0M1172 592h0M1186 188h0M509 310h0M512 690h0M1256 230h0M490 584h0M781 729h0M1009 103h0M631 91h0M1174 279h0M807 683h0M840 437h0M953 646h0M978 413h0M925 617h0M1362 252h0M1092 433h0M524 167h0M1112 365h0M1285 270h0M693 404h0M845 576h0M489 365h0M1055 243h0M970 621h0M661 544h0M1446 482h0M691 155h0M1150 242h0M1186 270h0M982 272h0M1228 399h0M1359 81h0M1445 408h0M835 170h0M917 630h0M1187 326h0M633 218h0M1051 97h0M832 419h0M1014 581h0M537 731h0M1145 227h0M1051 472h0M581 290h0M1323 434h0M1495 606h0M1027 533h0M888 123h0M1419 443h0" stroke="#ffffff" stroke-opacity="0.2" stroke-width="1.8" stroke-linecap="round"/><path d="M1056 503h0M946 676h0M598 413h0M744 553h0M959 310h0M1285 307h0M1331 121h0M1100 231h0M1433 152h0M627 481h0M715 524h0M1169 278h0M1435 91h0M882 188h0M788 175h0M1395 342h0M502 420h0M706 600h0M653 81h0M589 569h0M512 419h0M1452 293h0M1161 301h0M888 125h0M706 278h0M535 467h0M545 178h0M1466 117h0M545 508h0M1341 589h0M606 690h0M529 599h0M1111 100h0M1173 518h0M1207 510h0M1132 647h0M694 548h0M957 464h0M1213 507h0M591 111h0M565 114h0M1386 175h0M602 596h0M490 553h0M1425 585h0M1436 345h0M1086 734h0M1143 217h0M901 150h0M1370 495h0M774 321h0M1141 84h0M1029 763h0M582 196h0M1397 638h0M1404 146h0M937 156h0M958 750h0M978 616h0M1370 569h0M487 676h0M1487 324h0M1292 139h0M715 503h0M1381 223h0M1040 552h0M1422 603h0M808 327h0M761 278h0M1085 396h0M670 448h0M871 534h0M1205 629h0M1245 184h0M1497 621h0M618 646h0M880 616h0M1447 235h0M1160 131h0M1457 327h0M1268 97h0M1233 196h0M891 546h0M1249 543h0M1338 620h0M707 198h0M1135 473h0M1303 191h0M1200 532h0M1297 117h0M1023 151h0M661 148h0M592 459h0M628 629h0M676 401h0M711 737h0M719 194h0M555 337h0M1117 402h0M1000 685h0M807 617h0M1456 493h0M988 115h0M1298 733h0M969 380h0M842 511h0M1102 466h0M1334 106h0M603 666h0M663 183h0M902 537h0M1065 453h0M1098 377h0M1264 553h0M706 700h0M905 401h0M1413 695h0M695 162h0M1493 97h0M726 142h0M551 135h0M1142 369h0M729 185h0M890 564h0M928 351h0M728 481h0M951 317h0M1166 145h0M906 503h0M1135 529h0M611 538h0M1226 126h0M1423 154h0M1096 127h0M545 554h0M670 378h0M1160 464h0M1377 262h0M1309 467h0M1436 612h0M527 681h0M1034 715h0M1058 670h0M687 334h0M877 234h0M873 764h0M1069 197h0M735 475h0M1419 523h0M740 557h0M599 207h0M829 471h0M1104 658h0M620 520h0M537 592h0M790 580h0M1074 706h0M1104 598h0M1184 763h0M1261 671h0M1311 82h0M938 738h0M901 263h0M861 519h0M636 733h0M1071 385h0M1353 331h0M800 489h0M1008 272h0M488 123h0M641 411h0M577 181h0M740 360h0M1169 373h0M595 403h0M1196 198h0M1172 654h0M1285 97h0M908 232h0M811 605h0M645 398h0M742 717h0M1387 167h0M1340 525h0M1266 279h0M1188 404h0M849 600h0M942 707h0M673 141h0M725 432h0M742 378h0M1316 737h0M1450 615h0M1254 307h0M1290 416h0M709 88h0M707 133h0M607 462h0M1205 236h0M637 160h0M1212 313h0M869 607h0M715 553h0M756 717h0M683 570h0M984 405h0M869 320h0M1005 328h0M857 615h0M1327 689h0M1179 455h0M1343 298h0M1207 718h0M1076 429h0M1051 716h0M1216 578h0M672 514h0M582 666h0M1395 661h0M1087 273h0M1049 725h0M1299 352h0M1360 142h0M623 735h0M1309 217h0M684 681h0M1322 582h0M982 367h0M586 687h0M588 232h0M550 324h0M906 665h0M856 220h0M597 88h0M1212 231h0M1141 308h0M1058 445h0M1356 359h0M896 565h0M540 487h0M670 569h0M757 248h0M1102 528h0M1212 315h0M1316 544h0M768 283h0M1017 455h0M776 94h0M773 362h0M535 426h0M819 232h0M1485 555h0M504 185h0M1404 507h0M1372 602h0M1042 424h0M1303 174h0M708 247h0M940 686h0M1045 208h0M654 267h0M564 520h0M678 600h0M1307 174h0M1277 762h0M607 761h0M1358 185h0M735 254h0M535 409h0M624 441h0M1364 641h0M964 224h0M969 688h0M1172 479h0M1304 382h0M864 219h0M809 284h0M1259 310h0M875 585h0M817 308h0M1402 196h0M1015 197h0M1095 551h0M621 151h0M958 480h0M1253 184h0M1104 209h0M1143 443h0M591 747h0M1367 457h0M904 330h0M785 117h0M1265 371h0M822 161h0M1417 180h0M845 313h0M810 567h0M730 282h0M989 133h0M1392 502h0M1157 479h0M785 321h0M514 667h0M506 552h0M1414 661h0M783 266h0M528 166h0M1179 237h0M1082 623h0M1247 741h0M629 186h0M845 763h0M1163 344h0M922 125h0M1375 518h0M1448 357h0M858 581h0M1193 522h0M1490 721h0M805 438h0M663 436h0M931 170h0M877 108h0M861 553h0M958 592h0M774 234h0M1082 387h0M907 140h0M498 268h0M1411 323h0M1368 564h0M982 741h0M1032 284h0M1332 339h0M1271 640h0M1081 258h0M1315 556h0M1223 278h0M1399 342h0M986 538h0M729 612h0M697 176h0M1386 304h0M829 171h0M1161 379h0M671 501h0M631 620h0M497 431h0M1211 492h0M881 644h0M818 521h0M1047 266h0M753 527h0M1332 419h0M838 631h0M744 417h0M686 748h0M1145 82h0M1431 241h0M746 167h0M905 614h0M1378 111h0M1190 311h0M757 608h0M987 718h0M971 466h0M1271 489h0M1204 327h0M1036 429h0M605 633h0M585 223h0M1499 535h0M1410 352h0M667 242h0M911 142h0M920 149h0M1197 647h0M1025 711h0M526 580h0M1378 98h0M619 290h0M1048 300h0M1065 516h0M1243 726h0M1283 469h0M821 335h0M1439 605h0M1316 682h0M1181 549h0M837 391h0M1394 539h0M1262 278h0M703 357h0M931 159h0M582 578h0M920 319h0M1147 288h0M1181 440h0M679 403h0M1331 283h0M1233 86h0M960 615h0M627 199h0M1353 309h0M714 438h0M1354 480h0M1423 548h0M848 309h0M1135 558h0M766 617h0M1145 674h0M791 239h0M1031 528h0M735 295h0M721 528h0M1068 482h0M735 122h0M1333 640h0M1163 723h0M1336 573h0M547 353h0M980 435h0M1482 532h0M521 752h0M1317 527h0M1194 718h0M1283 648h0M1442 468h0M1035 273h0M1239 122h0M866 221h0M780 187h0M1335 96h0M642 159h0M489 277h0M811 701h0M1412 387h0M1077 336h0M1177 364h0M1048 283h0M1431 684h0M717 691h0M1302 617h0M1330 587h0M1374 634h0M921 744h0M898 100h0M763 151h0M1054 497h0M652 228h0M999 374h0M782 408h0M1277 443h0M769 398h0M1292 729h0M1396 597h0M1126 135h0M746 276h0M569 156h0M994 112h0M650 179h0M481 264h0M1459 542h0M485 635h0M1432 646h0M577 258h0M692 419h0M498 372h0M1126 493h0M952 691h0M833 554h0M792 557h0M1271 406h0M1089 444h0M747 293h0M882 92h0M647 130h0M628 572h0M988 356h0M776 621h0M845 518h0M677 201h0M1236 630h0M1011 691h0M1146 298h0M1438 751h0M910 612h0M1204 89h0M961 290h0M790 561h0M1300 357h0M1037 497h0M1268 304h0M691 380h0M559 699h0M532 643h0M544 330h0M860 322h0M628 174h0M1080 708h0" stroke="#ffffff" stroke-opacity="0.35" stroke-width="1.8" stroke-linecap="round"/><path d="M945 487h0M1485 242h0M612 308h0M1025 455h0M1160 327h0M1347 719h0M543 681h0M510 653h0M978 405h0M1077 251h0M1226 88h0M917 468h0M1250 742h0M839 427h0M1457 125h0M910 481h0M1321 511h0M1414 309h0M1043 79h0M1241 453h0M749 764h0M945 528h0M866 625h0M1455 290h0M1341 514h0M1109 269h0M1131 675h0M1352 710h0M736 382h0M1305 100h0M793 190h0M1478 131h0M531 615h0M1031 173h0M1409 559h0M1232 363h0M703 567h0M867 422h0M941 683h0M638 233h0M809 646h0M994 227h0M1329 230h0M1393 307h0M566 664h0M825 493h0M518 447h0M1141 352h0M511 492h0M775 439h0M1006 525h0M1176 269h0M861 676h0M1362 283h0M882 632h0M926 254h0M1074 512h0M1268 102h0M1079 374h0M985 169h0M576 331h0M874 412h0M826 593h0M1333 414h0M481 536h0M931 483h0M1243 244h0M1422 161h0M660 425h0M793 559h0M907 434h0M1052 461h0M1405 98h0M1461 257h0M507 484h0M694 137h0M550 555h0M596 176h0M1326 641h0M862 413h0M1472 123h0M1231 242h0M994 384h0M1453 749h0M1269 722h0M917 407h0M1197 304h0M923 541h0M1394 297h0M521 393h0M960 463h0M843 240h0M849 325h0M1498 221h0M718 156h0M1260 349h0M693 212h0M702 124h0M1361 705h0M1018 251h0M1445 300h0M786 155h0M589 158h0M524 163h0M1342 429h0M995 133h0M1392 199h0M719 753h0M735 557h0M1026 202h0M1064 204h0M1239 428h0M491 733h0M1160 693h0M1154 154h0M818 534h0M865 157h0M1397 251h0M785 396h0M816 304h0M1316 624h0M1327 750h0M870 709h0M584 142h0M1349 321h0M576 613h0M1144 598h0M666 624h0M768 397h0M1416 492h0M1304 412h0M794 332h0M648 175h0M504 456h0M707 379h0M1195 108h0M1447 110h0M576 627h0M1017 103h0M697 706h0M1302 521h0M1288 627h0M582 667h0M535 92h0M1400 630h0M1431 366h0M1186 238h0" stroke="#ffffff" stroke-opacity="0.5" stroke-width="1.8" stroke-linecap="round"/><path d="M788 112h0M634 386h0M1091 189h0M749 174h0M1066 684h0M1387 522h0M1442 425h0M1435 401h0M962 358h0M685 123h0M684 604h0M1237 727h0M1274 561h0M1130 122h0M750 677h0M1385 268h0M507 552h0M1313 619h0M1067 564h0M1213 535h0M700 737h0M1085 592h0M701 691h0M1062 156h0M803 283h0M876 218h0M1490 206h0M629 405h0M522 230h0M1170 351h0M1174 504h0M1478 406h0M1194 639h0M514 107h0M1158 313h0M754 599h0M1366 369h0M1215 512h0M1128 446h0M779 521h0M1414 438h0M1453 399h0M582 409h0M500 441h0M1283 713h0M544 376h0M1275 650h0M849 756h0M1324 116h0M819 97h0M1281 350h0M513 272h0M1029 400h0M987 144h0M1447 745h0M1150 706h0M1470 223h0M942 722h0M1078 575h0M744 336h0M1091 474h0M927 566h0M1181 321h0M1165 605h0M1019 348h0M946 390h0M970 92h0M1310 165h0M636 351h0M1434 437h0M1434 709h0M1332 380h0M1365 152h0M558 596h0M1109 580h0M1235 292h0M1085 563h0M738 743h0M1000 310h0M904 186h0M721 701h0M613 484h0M550 140h0M1256 179h0M610 157h0M636 369h0M1194 623h0M1044 163h0M825 311h0M878 295h0M750 699h0M498 724h0M802 529h0M845 281h0M589 674h0M737 591h0M864 519h0M968 585h0M1188 348h0M971 268h0M570 506h0M1047 326h0M791 387h0M1348 124h0M1182 521h0M1310 320h0M816 251h0M547 409h0M1372 627h0M508 95h0M952 512h0M1020 398h0M795 722h0M1009 714h0M621 383h0M1243 439h0M582 423h0M878 702h0M1307 178h0M1247 464h0M1056 97h0M640 334h0M1392 539h0M629 535h0M1469 266h0M1500 654h0M1046 532h0M1016 325h0M854 303h0M779 192h0M784 359h0M1462 214h0M948 257h0M938 558h0M732 541h0M1135 218h0M1103 240h0" stroke="#ffffff" stroke-opacity="0.75" stroke-width="1.8" stroke-linecap="round"/><path d="M1463 663h0M612 387h0M1430 219h0M557 425h0M589 622h0M1168 297h0M752 340h0M585 229h0M852 758h0M1278 338h0M1150 508h0M684 478h0M1194 445h0M1416 95h0M1111 388h0M904 493h0M654 416h0M1093 544h0M1308 310h0M516 332h0M1268 633h0M1018 481h0M1411 418h0M696 304h0M1342 672h0M822 688h0M720 479h0M1139 180h0M1241 569h0M956 277h0M1175 481h0M884 402h0M975 227h0M711 423h0M1248 305h0M1043 430h0M800 588h0M697 637h0M807 136h0M846 755h0M776 737h0M712 489h0M1292 453h0M1386 512h0M1055 115h0M1420 709h0M771 325h0M754 217h0M1219 157h0M1122 311h0M1101 214h0M767 208h0M828 738h0M1438 520h0M1470 478h0M1162 577h0M1456 136h0" stroke="#e6ecf8" stroke-opacity="0.5" stroke-width="2.1" stroke-linecap="round"/><path d="M622 226h0M1311 244h0M1047 234h0M1191 728h0M1184 205h0M1023 220h0M909 747h0M1433 654h0M1233 660h0M715 156h0M1106 496h0M1030 700h0M1223 614h0M1448 102h0M819 98h0M1267 117h0M928 423h0M1323 463h0M642 97h0M1258 252h0M602 365h0M1143 254h0M550 396h0M942 719h0M682 416h0M1466 559h0M1392 347h0M1170 136h0M1462 88h0M1016 187h0M1000 142h0M1294 373h0M807 164h0M1482 474h0M779 746h0M565 254h0M820 760h0M944 670h0M1255 196h0M971 500h0M520 297h0M1038 759h0M1165 454h0M854 717h0M603 217h0M1438 655h0M560 550h0M1274 356h0M761 530h0M1326 620h0M708 627h0M800 97h0M940 686h0M571 242h0M771 375h0M1263 321h0M494 110h0M959 356h0M1094 585h0M1334 479h0M1295 651h0M574 621h0M980 354h0M1499 342h0M1443 666h0M961 683h0M1039 760h0M1209 551h0M546 486h0M667 393h0M484 528h0M1295 755h0M1202 447h0M1276 360h0" stroke="#e6ecf8" stroke-opacity="0.75" stroke-width="2.1" stroke-linecap="round"/><path d="M560 561h0M748 725h0M851 664h0M596 372h0M1464 755h0M1391 303h0M988 152h0M742 591h0M1221 245h0M1074 567h0M1467 224h0M1291 275h0M986 647h0M1154 521h0M1369 158h0M829 652h0M785 370h0M655 597h0M659 316h0M1351 130h0M937 214h0M1223 520h0M597 153h0M935 502h0M848 329h0M1105 595h0M1098 143h0M1128 396h0M1166 556h0M596 628h0M968 133h0M913 473h0M603 617h0M1258 488h0M1296 361h0M640 416h0M981 520h0M1015 749h0M1032 445h0M1471 334h0M743 339h0M916 680h0M1190 483h0M1462 307h0M1011 756h0M1361 311h0M1023 663h0M942 399h0M1105 675h0M547 314h0M790 82h0M537 479h0M844 570h0M905 222h0M496 306h0M537 136h0M1319 246h0M1105 162h0M1265 215h0M704 682h0M1135 457h0M1054 117h0M1369 156h0M579 305h0M865 320h0M1207 157h0M1395 587h0M1344 324h0" stroke="#f2ece0" stroke-opacity="0.5" stroke-width="2.1" stroke-linecap="round"/><path d="M935 338h0M906 635h0M508 585h0M524 736h0M1399 441h0M1166 585h0M1162 162h0M1011 125h0M1139 214h0M758 564h0M1075 349h0M1370 192h0M732 534h0M564 480h0M714 679h0M507 194h0M656 335h0M942 562h0M900 115h0M1480 462h0M930 379h0M1133 711h0M957 93h0M1329 345h0M550 312h0M1321 507h0M1073 359h0M515 665h0M666 639h0M993 746h0M1223 410h0M994 627h0M689 254h0M1133 184h0M1485 235h0M1129 586h0M1194 348h0M1464 323h0M616 336h0M1394 220h0M1160 577h0M1317 484h0M532 181h0M787 258h0M555 656h0M643 522h0M838 357h0M1292 325h0M1136 561h0M1398 518h0M1492 752h0M638 87h0M862 134h0M523 176h0M1050 217h0M486 138h0M515 546h0M1115 177h0M775 440h0M1018 666h0M1491 595h0M1141 299h0M1042 336h0M653 323h0M1427 409h0M906 503h0M734 417h0M755 602h0M514 207h0M1008 107h0M1488 268h0M1429 465h0M1297 193h0M855 436h0M1254 395h0" stroke="#f2ece0" stroke-opacity="0.75" stroke-width="2.1" stroke-linecap="round"/><path d="M850 79h0M634 570h0M1453 348h0M1474 440h0M1218 271h0M1084 737h0M1443 736h0M857 736h0M1462 520h0M1262 757h0M662 452h0M529 704h0M1132 360h0M901 244h0M1337 617h0M1342 243h0M1337 122h0M528 110h0M1388 522h0M817 142h0M866 606h0M531 340h0M1022 132h0M866 394h0M675 579h0M560 161h0M545 481h0M1191 221h0M939 100h0M1164 218h0M1442 545h0M1248 398h0M1367 264h0M1303 691h0M838 397h0M862 199h0M812 644h0M1254 568h0M1389 356h0M1282 94h0M489 111h0M978 261h0M1118 420h0M1121 300h0M537 194h0M923 644h0M564 416h0M1274 125h0M803 170h0M1371 301h0M772 660h0M1249 533h0M1417 289h0M1080 440h0M942 155h0M1007 445h0M573 145h0M1287 412h0M1060 149h0M1274 399h0M797 592h0M700 685h0M1408 484h0M1205 582h0M846 299h0M668 450h0M951 349h0M1369 110h0M974 409h0M602 192h0M1439 217h0M1156 130h0M1013 763h0M1042 91h0M1494 724h0M776 156h0M610 658h0M764 349h0M1423 439h0M1203 157h0M955 359h0M800 181h0M1137 167h0M979 434h0M538 666h0M1158 414h0M1495 478h0M776 438h0M609 637h0M1469 618h0M1143 502h0M1250 607h0M1285 451h0M1220 309h0M818 353h0M584 388h0M1413 609h0M1457 139h0M1062 556h0M1225 698h0M560 531h0M1302 614h0M1197 576h0M993 137h0M1303 129h0M1145 261h0M1224 620h0M906 577h0M889 247h0M1354 265h0M969 180h0M1390 338h0M1317 341h0M1480 633h0M1217 600h0M1447 418h0M1477 512h0M655 232h0M831 108h0M1320 151h0M1428 320h0M676 310h0M1131 563h0M1485 416h0M1292 333h0M1329 756h0M900 332h0M1179 353h0M607 185h0M1098 364h0" stroke="#ffffff" stroke-opacity="0.5" stroke-width="2.1" stroke-linecap="round"/><path d="M903 139h0M1052 93h0M1484 553h0M1496 292h0M1433 557h0M1227 307h0M850 432h0M1411 516h0M717 632h0M1214 485h0M919 280h0M648 749h0M1165 90h0M1158 473h0M1388 363h0M856 334h0M1445 188h0M1275 607h0M906 537h0M933 561h0M1242 459h0M921 295h0M1352 457h0M1142 114h0M931 669h0M748 608h0M1039 518h0M798 663h0M768 708h0M629 251h0M1389 276h0M748 575h0M708 155h0M1351 209h0M767 664h0M540 425h0M1392 142h0M600 583h0M1203 262h0M739 692h0M625 748h0M1196 104h0M1019 304h0M1427 412h0M1418 760h0M883 720h0M812 484h0M948 685h0M545 498h0M548 203h0M899 658h0M1177 463h0M621 225h0M1419 640h0M737 239h0M906 317h0M1216 277h0M513 94h0M701 583h0M802 269h0M1288 383h0M1369 409h0M928 701h0M1033 434h0M535 288h0M757 604h0M511 244h0M759 109h0M496 356h0M624 124h0M925 507h0M566 183h0M1335 500h0M1230 166h0M536 708h0M914 259h0M625 661h0M663 348h0M1168 122h0M847 127h0M744 615h0M556 203h0M844 282h0M600 342h0M1027 439h0M1154 297h0M1145 719h0M520 493h0M744 338h0M968 576h0M886 433h0M876 577h0M760 155h0M1043 468h0M932 429h0M1183 298h0M794 228h0M881 131h0M760 247h0M1029 446h0M1339 304h0M1294 651h0M1024 303h0M1008 747h0M1324 105h0M617 329h0M687 396h0M907 113h0M614 645h0M1159 500h0M1337 381h0M688 230h0M991 683h0M972 562h0M685 517h0M560 576h0M1020 348h0M914 285h0" stroke="#ffffff" stroke-opacity="0.75" stroke-width="2.1" stroke-linecap="round"/><path d="M1015 415h0M987 426h0M987 393h0M986 427h0M996 431h0M992 450h0M988 466h0M998 429h0M995 381h0M994 420h0M982 428h0M996 408h0M964 397h0M992 420h0M962 431h0M990 421h0M984 423h0M1003 422h0M954 431h0M998 382h0M972 415h0M960 448h0M1009 463h0M992 423h0M989 417h0M972 410h0M997 420h0M999 417h0M986 398h0M988 415h0M980 419h0M976 421h0M1009 475h0M992 419h0M986 406h0M987 404h0M992 415h0M999 469h0M991 420h0M936 442h0M999 426h0M990 420h0M994 423h0M995 423h0M1009 423h0M993 410h0M991 424h0M998 410h0M967 380h0M960 413h0M979 425h0M979 421h0M1014 407h0M986 424h0M1002 394h0M979 415h0M1006 432h0M1024 412h0M993 430h0M1009 430h0M977 465h0M971 440h0M983 465h0M988 450h0M1009 413h0M993 435h0M1026 456h0M968 417h0M992 422h0M958 440h0M987 421h0M984 428h0M1002 431h0M992 412h0M972 427h0M973 424h0M1004 408h0M1010 427h0M951 404h0M992 424h0M1039 402h0M998 398h0M991 422h0M988 427h0M969 435h0M982 396h0M974 385h0M967 406h0M981 399h0M978 415h0M1009 434h0M993 428h0M1003 436h0M1010 409h0M982 399h0M1004 464h0M970 441h0M986 421h0M969 466h0M991 434h0M961 422h0M994 423h0M990 426h0M967 438h0M992 433h0M977 387h0M1016 408h0M1016 395h0M987 429h0M992 423h0M957 464h0M982 418h0M989 421h0M969 411h0M996 436h0M992 421h0M960 426h0M997 416h0M980 438h0M997 429h0M983 424h0M987 416h0M1006 412h0M996 421h0M968 433h0M998 428h0M990 420h0M1003 408h0M988 404h0M990 411h0M1025 449h0M987 393h0M976 427h0M994 420h0M1025 416h0M985 409h0M1009 476h0M991 417h0M990 430h0M991 422h0M973 381h0M965 410h0M981 439h0M982 418h0M991 417h0M1002 424h0M987 433h0M988 419h0M1043 414h0M983 414h0M1013 442h0M1026 436h0M991 365h0M991 427h0M992 413h0M991 431h0M1007 419h0M988 435h0M1029 415h0M1006 445h0M997 464h0M1004 393h0M993 421h0M993 427h0M990 422h0M1030 412h0M990 412h0M989 424h0M1022 449h0M1002 430h0M996 434h0M991 421h0M978 473h0M991 419h0M966 455h0M995 447h0M961 412h0M972 404h0M997 462h0M987 404h0M970 427h0M954 451h0M947 430h0M981 421h0M990 443h0M960 425h0M993 422h0M1014 397h0M1040 457h0M955 438h0M985 428h0M989 433h0M990 423h0M989 391h0M952 423h0M986 464h0M988 410h0M989 421h0M1008 417h0M978 410h0M981 424h0M962 429h0M986 479h0M989 458h0M989 413h0M1007 403h0M987 426h0M1004 448h0M949 412h0M985 434h0M1032 375h0M1003 408h0M1003 426h0M1032 405h0M963 424h0M990 424h0M1002 418h0M995 440h0M989 413h0M981 425h0M983 423h0M986 399h0M984 381h0M1002 393h0M1007 444h0M961 436h0M1020 462h0M1030 378h0M969 436h0M1010 448h0M994 438h0M1007 430h0M989 421h0M986 441h0M961 435h0M977 415h0M953 442h0M997 416h0M983 439h0M1002 416h0M1005 425h0M990 422h0M988 423h0M1021 413h0M1016 377h0M944 447h0M966 472h0M991 422h0M995 435h0M943 399h0M985 439h0M971 427h0M991 427h0M1009 431h0M994 421h0M987 474h0M1026 460h0M1022 409h0M989 393h0M979 400h0M1006 406h0M936 401h0M991 420h0M976 428h0M1013 380h0M980 412h0M942 448h0M1013 423h0M1011 443h0M985 423h0M992 446h0M987 383h0M991 422h0M975 420h0M970 426h0M1016 384h0M1014 470h0M992 426h0M1002 440h0M967 410h0M1005 405h0M983 433h0M991 423h0M991 422h0M973 445h0M993 423h0M981 424h0M999 437h0M989 421h0M1032 394h0M935 445h0M1000 421h0M991 426h0M977 377h0M1029 409h0M982 419h0M977 417h0M991 425h0M987 418h0M1026 446h0M1017 434h0M989 395h0M949 469h0M980 423h0M1028 447h0M1000 424h0M1006 424h0M976 440h0M1002 406h0M1005 418h0M1006 392h0M985 398h0M949 405h0M1005 402h0M998 457h0M997 371h0M992 426h0M1001 419h0M993 408h0M993 435h0M1015 382h0M971 415h0M1005 421h0M989 448h0M980 445h0M979 420h0M1027 436h0M982 420h0M1006 448h0M1019 421h0M994 421h0M1015 420h0M979 455h0M986 432h0M990 397h0M990 432h0M947 410h0M970 379h0M961 406h0M1004 393h0M971 419h0M996 422h0M1021 425h0M949 389h0M1002 392h0M988 420h0M999 428h0M1006 412h0M959 388h0M1004 420h0M1036 436h0M978 452h0M986 418h0M946 446h0M1015 436h0M957 428h0M963 430h0M995 421h0M994 426h0M978 427h0M991 427h0M994 416h0M967 432h0M988 430h0M999 463h0M968 428h0M995 433h0M989 419h0M1006 415h0M994 420h0M983 420h0M960 449h0M990 440h0M984 407h0M973 417h0M986 387h0M987 420h0M990 423h0M991 422h0M989 410h0M992 422h0M1009 416h0M972 417h0M998 442h0M1003 419h0M994 422h0M997 418h0M996 442h0M980 429h0M1007 428h0M983 428h0M997 432h0M1004 414h0M993 421h0M975 418h0M970 444h0M1015 443h0M1008 386h0M992 422h0M943 454h0M991 427h0M1005 427h0M983 413h0M995 404h0M999 421h0M996 427h0M987 422h0M998 408h0M992 442h0M999 390h0M993 424h0M999 388h0M955 420h0M993 434h0M1011 449h0M995 423h0M1044 404h0M994 432h0M1044 419h0M998 426h0M1000 435h0M1009 419h0M1000 406h0M1031 374h0M984 423h0M961 400h0M1015 408h0M967 453h0M991 421h0M1042 412h0M991 455h0M1021 382h0M1001 401h0M939 404h0M1030 431h0M1012 454h0M996 406h0M1023 404h0M992 394h0M1025 407h0M1017 433h0M1024 419h0M964 433h0M966 465h0M991 422h0M976 436h0M991 425h0M1010 447h0M1000 439h0M1005 434h0M1008 425h0M1013 439h0M991 419h0M965 405h0M1003 403h0M952 451h0" stroke="#e8eef8" stroke-opacity="0.55" stroke-width="2.2" stroke-linecap="round"/><path d="M996 415h0M998 422h0M1010 439h0M971 413h0M1012 406h0M984 429h0M1010 420h0M1009 397h0M995 419h0M972 429h0M963 440h0M970 425h0M946 413h0M1014 412h0M982 427h0M1026 403h0M993 434h0M1004 456h0M996 405h0M978 412h0M1000 434h0M993 432h0M989 435h0M988 421h0M997 433h0M986 415h0M998 423h0M988 417h0M959 409h0M991 422h0M997 410h0M985 446h0M992 426h0M997 422h0M997 440h0M983 420h0M1017 400h0M990 421h0M952 426h0M1022 415h0M958 399h0M986 440h0M990 421h0M1000 424h0M938 417h0M988 420h0M983 417h0M998 429h0M1011 424h0M942 383h0M1019 403h0M1007 391h0M982 415h0M993 422h0M990 422h0M968 466h0M999 432h0M985 412h0M993 427h0M982 458h0M986 421h0M965 455h0M1015 404h0M960 441h0M1000 401h0M982 409h0M992 419h0M974 440h0M948 432h0M965 439h0M984 422h0M988 409h0M996 434h0M1012 419h0M988 417h0M991 422h0M969 445h0M985 406h0M996 389h0M1007 402h0M975 436h0M1008 433h0M992 422h0M995 368h0M991 422h0M1030 429h0M972 397h0M981 409h0M1015 445h0M999 455h0M991 422h0M1011 404h0M938 425h0M968 375h0M1000 446h0M1008 394h0M979 378h0M982 445h0M1020 419h0M1010 433h0M990 431h0M985 424h0M987 434h0M957 413h0M1008 408h0M987 403h0M970 437h0M976 453h0M996 463h0M996 418h0M1013 414h0M980 442h0M969 411h0M956 453h0M1013 428h0M962 426h0M981 421h0M998 429h0M990 410h0M1016 428h0M995 418h0M993 410h0M993 417h0M1015 388h0M995 427h0M1006 427h0M991 429h0M961 442h0M936 436h0M1035 414h0M993 423h0M980 435h0M985 429h0M977 398h0M1024 452h0M998 368h0M1013 432h0M1013 421h0M970 442h0M976 438h0M998 384h0M948 424h0M976 436h0M1027 431h0M975 428h0M985 411h0M988 388h0M999 377h0M994 454h0M983 397h0M949 391h0M991 408h0M983 405h0M991 402h0M992 423h0M987 437h0M982 429h0M968 410h0M991 415h0M950 383h0M941 427h0M997 421h0M1014 454h0M983 428h0M949 444h0M1021 449h0M983 423h0M1000 452h0M993 447h0M996 437h0M979 420h0M1004 415h0M996 427h0M1029 454h0M984 434h0M1040 400h0M963 439h0M951 422h0M984 462h0M973 422h0M983 433h0M999 419h0M968 419h0M991 420h0M1029 398h0M1002 429h0M993 403h0M991 422h0M975 394h0M1009 434h0M1009 408h0M990 421h0M987 422h0M1027 406h0M1005 427h0M1026 456h0M985 410h0M995 394h0M982 431h0M989 421h0M988 431h0M995 432h0M948 425h0M989 423h0M1001 413h0M987 455h0M1015 406h0M1030 417h0M984 421h0M948 427h0M979 415h0M998 414h0M998 472h0M984 428h0M1001 416h0M981 418h0M971 399h0M997 414h0M970 388h0M957 391h0M996 418h0M983 422h0M1011 407h0M992 432h0M994 454h0M994 426h0M992 423h0M981 404h0M992 426h0M982 394h0M1004 367h0M977 451h0M982 397h0M1006 450h0M1001 424h0M989 437h0M962 402h0M965 380h0M1008 398h0M991 422h0M1012 440h0M986 411h0M964 428h0M1013 412h0M1009 423h0M1012 432h0M1034 422h0M974 441h0M1012 450h0M1004 440h0M1013 447h0M1010 476h0M992 419h0M992 432h0M975 398h0M991 412h0M986 436h0M1026 409h0M1028 391h0M990 423h0M973 411h0M978 465h0M975 426h0M999 425h0M1030 432h0M1003 415h0M1000 426h0M999 429h0M1021 433h0M1012 441h0M988 394h0M991 420h0M983 432h0M994 420h0M996 426h0M979 426h0M959 400h0M997 423h0M984 396h0M974 460h0M1005 391h0M999 451h0M1028 418h0M989 424h0M1017 414h0M994 404h0M991 423h0M963 413h0M1007 382h0M960 446h0M992 381h0M952 403h0M1008 427h0M989 422h0M988 419h0M988 425h0M1038 385h0M988 404h0M982 425h0M997 418h0M986 403h0M995 426h0M956 423h0M980 421h0M994 414h0M1011 389h0M979 434h0M1004 397h0M1021 404h0M1018 394h0M992 451h0M995 424h0M1019 432h0M988 432h0M986 429h0M974 448h0M969 422h0M1011 419h0M993 409h0M1017 437h0M993 411h0M1011 415h0M1017 418h0M1025 434h0M971 455h0M987 414h0M956 419h0M1019 388h0M956 428h0M979 436h0M990 418h0M1034 436h0M975 402h0M1026 406h0M990 422h0M1011 416h0M957 433h0M992 391h0M973 406h0M988 422h0M998 400h0M1040 418h0M1001 410h0M991 422h0M992 422h0M1006 405h0M1002 439h0M991 433h0M1005 403h0M989 413h0M994 415h0M1002 452h0M976 458h0M1006 434h0M970 408h0M1033 468h0M1010 439h0M992 426h0M963 385h0M975 432h0M942 453h0M987 416h0M1011 431h0M989 468h0M1048 433h0M958 388h0M997 438h0M973 421h0M996 433h0M974 436h0M977 403h0M1055 418h0M988 421h0M991 414h0M1003 384h0M1013 445h0M963 423h0M957 445h0M993 382h0M1011 423h0M969 395h0M982 415h0M985 425h0M949 463h0M972 440h0M977 428h0M990 423h0M989 418h0M1005 365h0M1025 421h0M1003 435h0M986 478h0M980 425h0M1003 383h0M979 384h0M986 373h0M988 407h0M994 409h0M991 422h0M980 426h0M1005 439h0M958 422h0M990 392h0M986 428h0M976 381h0M991 422h0M1030 418h0M988 425h0M961 458h0M986 424h0M987 421h0M994 445h0M1032 466h0M992 412h0M1001 444h0M995 407h0M1028 436h0M993 423h0M990 423h0M989 431h0M1017 416h0M992 420h0M1013 415h0M931 422h0M1036 383h0M972 399h0M975 382h0M988 423h0M1028 465h0M988 420h0M998 390h0M983 399h0M1032 404h0" stroke="#e8eef8" stroke-opacity="0.8" stroke-width="2.2" stroke-linecap="round"/><path d="M763 374h0M836 223h0M1195 295h0M746 471h0M1488 651h0M1498 336h0M1080 303h0M1491 371h0M734 473h0M799 709h0M1256 195h0M784 229h0M920 546h0M1251 625h0M1389 558h0M796 116h0M880 472h0M1477 524h0M1265 391h0M654 737h0M1129 425h0M907 534h0M688 242h0M1132 132h0M1240 89h0M647 416h0M789 462h0M991 469h0M913 483h0M615 693h0M489 248h0M761 87h0M727 417h0M620 446h0M1452 591h0M1045 573h0M1151 706h0M669 238h0M1487 204h0M610 242h0M1272 172h0M521 360h0M931 180h0M1186 600h0M580 519h0M919 298h0M1241 651h0M1421 206h0M799 310h0M931 572h0M1062 371h0M1084 661h0M520 455h0M547 302h0M1097 518h0" stroke="#e6ecf8" stroke-opacity="0.5" stroke-width="2.5" stroke-linecap="round"/><path d="M1400 274h0M579 243h0M1144 215h0M721 288h0M1305 371h0M1266 465h0M1148 591h0M765 702h0M769 270h0M1272 686h0M1101 763h0M1054 512h0M1476 739h0M1423 465h0M966 287h0M858 420h0M1200 301h0M1336 593h0M600 179h0M997 240h0M1202 711h0M1192 715h0M886 687h0M1181 579h0M1062 206h0M610 521h0M1419 753h0M1433 307h0M678 522h0M488 471h0M977 751h0M1017 158h0M1151 519h0M1427 475h0M1274 464h0M1143 535h0M892 545h0M1129 570h0M1120 511h0M491 172h0M559 693h0M1050 390h0M1011 275h0M624 651h0M609 280h0M877 594h0M1051 512h0M1203 335h0M571 602h0M660 729h0M1259 180h0M1307 728h0M1252 397h0M1384 340h0M1430 519h0M920 404h0M997 368h0M1168 393h0M1119 206h0M573 152h0M497 750h0M564 552h0M1126 314h0M669 101h0M1005 253h0M1040 174h0M906 448h0M1025 307h0M670 115h0M1274 685h0M1363 491h0M792 701h0M1371 476h0M1097 719h0M1475 534h0M810 562h0" stroke="#e6ecf8" stroke-opacity="0.75" stroke-width="2.5" stroke-linecap="round"/><path d="M682 570h0M1414 482h0M1137 389h0M943 116h0M1398 539h0M1193 551h0M1302 308h0M1075 504h0M530 531h0M965 597h0M1279 207h0M1350 403h0M1277 404h0M675 129h0M932 634h0M510 210h0M728 411h0M677 670h0M505 669h0M1273 500h0M1078 526h0M789 382h0M1061 477h0M1036 733h0M532 182h0M1327 166h0M1058 736h0M1027 341h0M955 162h0M1374 382h0M636 625h0M1341 527h0M664 301h0M1205 188h0M527 381h0M1306 497h0M708 466h0M735 686h0M990 388h0M1238 654h0M676 180h0M1086 565h0M1487 291h0M1436 426h0M550 412h0M1357 453h0M1469 721h0M1196 576h0M1014 514h0M1164 657h0M827 203h0M1326 402h0M1038 341h0M594 88h0M835 721h0M839 594h0M812 141h0M1031 431h0M1458 156h0M968 633h0M576 347h0M538 254h0M773 700h0M1277 493h0M1182 255h0M1202 617h0M571 237h0M1340 390h0M1307 226h0M579 258h0M549 617h0M890 656h0M1093 140h0M874 505h0M877 451h0M712 751h0M822 442h0M1457 471h0" stroke="#f2ece0" stroke-opacity="0.5" stroke-width="2.5" stroke-linecap="round"/><path d="M578 108h0M603 344h0M579 353h0M825 244h0M1304 753h0M924 361h0M664 521h0M1089 387h0M643 761h0M622 452h0M1207 323h0M1181 736h0M792 350h0M1424 608h0M1283 584h0M1289 423h0M1495 370h0M1300 554h0M1299 134h0M1436 219h0M924 430h0M618 516h0M741 706h0M589 131h0M904 380h0M706 502h0M1285 322h0M1197 618h0M923 276h0M628 491h0M988 118h0M607 228h0M1259 121h0M1235 208h0M693 118h0M1304 122h0M1442 131h0M675 563h0M588 145h0M845 79h0M663 556h0M577 309h0M1156 637h0M1385 196h0M1201 345h0M1190 176h0M963 328h0M624 616h0M728 150h0M1283 692h0M994 105h0M1146 560h0M1057 650h0M1183 458h0M671 312h0M1270 122h0M677 185h0M607 453h0M1172 696h0M964 148h0M981 358h0M1304 658h0M1060 483h0M1390 83h0M1354 326h0M1321 121h0M520 418h0M924 171h0M1409 471h0M546 488h0M807 460h0M905 413h0M1342 287h0M1033 141h0" stroke="#f2ece0" stroke-opacity="0.75" stroke-width="2.5" stroke-linecap="round"/><path d="M1233 304h0M774 409h0M967 432h0M1062 476h0M1473 525h0M822 107h0M805 662h0M1024 202h0M1105 653h0M1304 314h0M1481 261h0M1240 571h0M759 105h0M865 249h0M708 215h0M1051 438h0M876 702h0M867 379h0M802 485h0M1291 579h0M1053 575h0M1484 244h0M1420 259h0M1178 142h0M1282 740h0M982 117h0M706 357h0M541 668h0M692 244h0M1376 528h0M638 589h0M1193 305h0M1344 567h0M1436 379h0M1056 376h0M1438 216h0M1478 231h0M1177 95h0M601 251h0M912 701h0M1010 110h0M850 154h0M1422 177h0M1193 398h0M1193 225h0M611 718h0M1486 317h0M1047 405h0M593 255h0M955 414h0M967 565h0M951 693h0M1400 271h0M990 656h0M693 588h0M674 207h0M825 165h0M1398 540h0M747 434h0M1100 588h0M777 221h0M1295 719h0M512 692h0M709 310h0M1181 408h0M1334 256h0M1277 399h0M901 294h0M607 220h0M941 517h0M915 114h0M1212 92h0M744 457h0M620 690h0M935 341h0M931 458h0M710 595h0M1010 464h0M1229 498h0M1275 314h0M860 237h0M1018 613h0M1422 167h0M989 714h0M726 192h0M493 516h0M978 292h0M732 725h0M1001 493h0M1319 456h0M650 671h0M948 544h0M1476 216h0M969 603h0M542 610h0M1267 173h0M515 565h0M533 610h0M1267 179h0M1090 273h0M1360 627h0M1110 157h0M1111 605h0M1365 451h0M1373 283h0M955 92h0M1309 478h0M1250 582h0M603 420h0M657 247h0M1001 686h0M878 242h0M938 242h0M1159 363h0M1375 345h0M719 184h0M547 191h0M997 307h0M505 344h0M682 189h0M743 152h0M784 316h0M984 497h0M1073 750h0M1424 205h0M699 465h0M1295 465h0M1113 251h0M1398 395h0M1316 662h0M979 161h0M936 202h0M833 258h0M1232 182h0M638 362h0M650 670h0M922 741h0M612 323h0M1316 510h0M872 690h0M939 266h0M1421 709h0M674 245h0M1454 278h0M1245 421h0M927 725h0M523 81h0M559 421h0" stroke="#ffffff" stroke-opacity="0.5" stroke-width="2.5" stroke-linecap="round"/><path d="M1405 272h0M957 489h0M1094 633h0M831 435h0M569 447h0M760 105h0M900 660h0M810 757h0M895 182h0M955 116h0M636 667h0M1372 645h0M827 644h0M1127 607h0M1220 227h0M1215 429h0M957 209h0M744 613h0M808 656h0M1046 436h0M1417 405h0M1012 345h0M1414 406h0M1459 464h0M1198 272h0M1414 688h0M1298 457h0M1421 454h0M970 403h0M1424 219h0M699 750h0M1181 88h0M581 442h0M1343 621h0M490 245h0M1130 354h0M1000 260h0M865 527h0M726 589h0M1045 553h0M1265 646h0M1427 344h0M1381 94h0M1162 83h0M1194 281h0M1268 219h0M1144 580h0M573 432h0M1369 460h0M1098 492h0M764 94h0M1295 616h0M566 114h0M791 157h0M1193 491h0M926 425h0M515 92h0M850 470h0M736 341h0M1219 142h0M520 494h0M1385 611h0M1118 227h0M700 486h0M1194 424h0M1472 176h0M607 456h0M1206 468h0M1190 345h0M1414 497h0M1349 628h0M792 649h0M1255 303h0M1030 228h0M530 482h0M935 500h0M1350 559h0M634 646h0M1226 762h0M587 391h0M622 760h0M933 312h0M1203 152h0M1069 401h0M802 696h0M814 301h0M797 102h0M1154 673h0M1485 761h0M917 752h0M960 416h0M543 126h0M522 255h0M1422 690h0M651 366h0M1425 157h0M1067 582h0M1358 696h0M1304 135h0M746 659h0M1267 103h0M1413 339h0M855 513h0M1146 740h0M1083 375h0M1297 613h0M1341 576h0M1333 569h0M1473 575h0M749 600h0M611 370h0M556 351h0M1040 213h0M896 411h0M1025 301h0M498 745h0M1167 510h0M641 706h0M517 705h0M603 152h0M1400 256h0M924 453h0M615 411h0M740 142h0M1495 84h0M1117 163h0M1212 219h0M511 188h0M715 469h0M1164 750h0M616 111h0M653 395h0M1443 505h0M507 384h0M994 263h0M1393 122h0M1357 350h0M1035 689h0M1374 526h0M712 255h0M1217 174h0M575 98h0M1093 235h0M646 428h0M532 514h0M1118 254h0M1213 239h0M1081 349h0M787 115h0M531 200h0M1345 94h0M1391 365h0M652 313h0M728 290h0M1180 230h0M1219 145h0" stroke="#ffffff" stroke-opacity="0.75" stroke-width="2.5" stroke-linecap="round"/><path d="M1499 686h0M1110 715h0M897 150h0M1266 395h0M740 355h0M689 638h0M1413 544h0M671 569h0M905 719h0" stroke="#e6ecf8" stroke-opacity="1.0" stroke-width="2.8" stroke-linecap="round"/><path d="M1467 752h0M1354 604h0M1169 206h0M1368 535h0M1310 159h0M1347 108h0M1424 407h0M1484 722h0M546 168h0M1312 699h0M1153 505h0M1220 201h0M666 623h0M1283 430h0M656 292h0M628 739h0" stroke="#f2ece0" stroke-opacity="1.0" stroke-width="2.8" stroke-linecap="round"/><path d="M1234 85h0M489 457h0M896 358h0M623 206h0M601 354h0M1134 262h0M568 93h0M1374 635h0M1227 529h0M1116 487h0M872 172h0M1213 244h0M1475 742h0M573 171h0M1173 473h0M1145 719h0M842 119h0M1097 109h0M681 631h0M1417 509h0M1208 155h0" stroke="#ffffff" stroke-opacity="1.0" stroke-width="2.8" stroke-linecap="round"/><path d="M704 388h0M553 626h0M899 123h0M992 688h0M1183 719h0M1364 269h0M669 396h0M1384 406h0" stroke="#e6ecf8" stroke-opacity="1.0" stroke-width="3.3" stroke-linecap="round"/><path d="M776 708h0M963 711h0M1371 93h0M557 252h0M508 378h0M778 496h0M1081 147h0M626 378h0M1249 139h0M582 714h0M1434 637h0M1083 629h0M758 476h0M1422 721h0" stroke="#f2ece0" stroke-opacity="1.0" stroke-width="3.3" stroke-linecap="round"/><path d="M999 573h0M1145 250h0M838 711h0M983 219h0M907 486h0M1310 430h0M772 160h0M1098 195h0M1048 291h0M781 689h0M862 329h0M1305 182h0M509 667h0M1089 269h0M990 577h0M1148 613h0M986 107h0M1313 345h0M503 319h0M1239 462h0M979 306h0M1116 673h0" stroke="#ffffff" stroke-opacity="1.0" stroke-width="3.3" stroke-linecap="round"/></g>
<circle cx="991" cy="422" r="62" fill="url(#clg)"/>
<circle cx="991" cy="422" r="28" fill="#f6f8fb" fill-opacity="0.85" filter="url(#bl2)"/>
<circle cx="860" cy="316" r="7.2" fill="url(#wst)"/><circle cx="860" cy="316" r="2.4" fill="#fff"/>
<circle cx="788" cy="693" r="6.3" fill="url(#wst)"/><circle cx="788" cy="693" r="2.1" fill="#fff"/>
<circle cx="720" cy="606" r="4.5" fill="url(#wst)"/><circle cx="720" cy="606" r="1.5" fill="#fff"/>
<circle cx="1278.5" cy="116.5" r="8.1" fill="url(#wst)"/><circle cx="1278.5" cy="116.5" r="2.6999999999999997" fill="#fff"/>
<circle cx="905" cy="364" r="3.9600000000000004" fill="url(#wst)"/><circle cx="905" cy="364" r="1.32" fill="#fff"/>
<circle cx="758" cy="520" r="3.6" fill="url(#wst)"/><circle cx="758" cy="520" r="1.2" fill="#fff"/>
<circle cx="930" cy="380" r="3.6" fill="url(#wst)"/><circle cx="930" cy="380" r="1.2" fill="#fff"/>
<circle cx="1032" cy="693" r="4.5" fill="url(#wst)"/><circle cx="1032" cy="693" r="1.5" fill="#fff"/>
<circle cx="816" cy="690" r="3.6" fill="url(#wst)"/><circle cx="816" cy="690" r="1.2" fill="#fff"/>
<circle cx="621" cy="606" r="3.6" fill="url(#wst)"/><circle cx="621" cy="606" r="1.2" fill="#fff"/>
<circle cx="520" cy="437" r="3.9600000000000004" fill="url(#wst)"/><circle cx="520" cy="437" r="1.32" fill="#fff"/>
<circle cx="1108" cy="150" r="4.5" fill="url(#wst)"/><circle cx="1108" cy="150" r="1.5" fill="#fff"/>
<circle cx="834" cy="159.3" r="26" fill="url(#org)"/><circle cx="834" cy="159.3" r="15" fill="none" stroke="#6a4a30" stroke-opacity="0.2" stroke-width="6"/><circle cx="834" cy="159.3" r="4" fill="#fff8e0"/>
<path d="M834 151.3 V167.3 M826 159.3 H842" stroke="#ffe8b0" stroke-width="0.8" stroke-opacity="0.6"/>
<circle cx="1465" cy="85" r="16" fill="#7a5030" fill-opacity="0.25"/><circle cx="1465" cy="85" r="9" fill="url(#wst)"/><circle cx="1465" cy="85" r="4" fill="#fff"/>
<circle cx="683" cy="80" r="6" fill="url(#org)"/><circle cx="683" cy="80" r="1.6" fill="#fff4d0"/>
<path d="M1453 85 H1477 M1465 71 V99" stroke="#ffffff" stroke-width="1.4" stroke-opacity="0.8"/>
<ellipse cx="1198.5" cy="131.2" rx="6.5" ry="3.2" transform="rotate(32 1198.5 131.2)" fill="#e8e4d8" fill-opacity="0.85"/>
<path d="M703 79 L701.5 400 L699 764 M1104 79 V175 M480 496 L1061 496.6" fill="none" stroke="#2f5f8e" stroke-width="1.1" stroke-opacity="0.85"/>
<rect x="519.2" y="108.2" width="946" height="626" fill="none" stroke="#557a98" stroke-width="3.6"/>
<rect x="516.7" y="105.7" width="950" height="631.6" fill="none" stroke="#ffffff" stroke-width="2.4"/>
<text x="500" y="508" font-family="Liberation Sans" font-style="italic" font-size="12.5" fill="#3f78b0">43°00'</text>
<text x="702" y="629" font-family="Liberation Sans" font-style="italic" font-size="12.5" fill="#3f78b0">17:20h</text>
<circle cx="991.9" cy="422" r="52" fill="none" stroke="#c0b52a" stroke-width="1"/>
<circle cx="990.7" cy="422" r="18" fill="none" stroke="#dcd434" stroke-width="1.7"/>
<path d="M972.5 422 H986 M995.5 422 H1009 M990.7 404 V417.5 M990.7 426.5 V440" stroke="#dcd434" stroke-width="1.7"/>
<g font-family="Liberation Sans" font-size="18.3" fill="#d8d22c" text-anchor="middle"><text x="990.5" y="499.5">NGC 6341</text><text x="991" y="530.3">M 92</text><text x="990.5" y="561.6">NGC 6341</text></g>
<text x="1229.5" y="151.5" font-family="Liberation Sans" font-size="19" fill="#b9a47c">UGC 10771</text>
<text x="1149.5" y="161.1" font-family="Liberation Sans" font-size="19" fill="#b9a47c" textLength="205" lengthAdjust="spacingAndGlyphs">UGC 10773ZwG 225. 74</text>
<text x="486" y="722" font-family="Liberation Sans" font-size="12" fill="#111" textLength="78">AD   17:17:07</text>
<text x="486" y="737.5" font-family="Liberation Sans" font-size="12" fill="#111" textLength="97">Dec   43° 08' 09"</text>
</svg>
<!-- NOTIFS -->
<div class="ntf" style="top:167px;height:152.5px">
 <svg class="a" style="left:0;top:0" width="100" height="100" viewBox="1061 167 100 100">
  <g fill="none" stroke="#b8b8b8" stroke-width="1.3"><path d="M1073.5 185.5 V182 H1077 M1090.5 182 H1094 V185.5 M1073.5 195 V198.5 H1077 M1090.5 198.5 H1094 V195"/></g>
  <ellipse cx="1083.8" cy="190.2" rx="7.5" ry="5" transform="rotate(-22 1083.8 190.2)" fill="none" stroke="#3a8ad0" stroke-width="1.8"/>
  <ellipse cx="1084.3" cy="189.5" rx="3.8" ry="2.4" transform="rotate(-22 1084.3 189.5)" fill="none" stroke="#8ab0d0" stroke-width="1.2"/>
  <path d="M1138.3 231.5 A26.2 23.4 0 1 0 1091 249.5 Q1089 252.5 1086.8 254.3 Q1093 255.5 1098.5 252.5 Q1106 256.8 1120.5 256.2" fill="none" stroke="#f2e600" stroke-width="3.2" stroke-linecap="round" stroke-linejoin="round"/>
  <circle cx="1104.5" cy="234.8" r="1.9" fill="#f2e600"/><circle cx="1112" cy="234.8" r="1.9" fill="#f2e600"/><circle cx="1119.4" cy="234.8" r="1.9" fill="#f2e600"/>
  <circle cx="1131.7" cy="246" r="10.8" fill="#2b2b2b" stroke="#f2e600" stroke-width="2"/>
  <path d="M1131.7 238.5 V250.5" stroke="#f2e600" stroke-width="1.6"/><circle cx="1131.7" cy="253.6" r="1" fill="#f2e600"/>
 </svg>
 <div class="hdr">N.I.N.A. - Nighttime Imaging 'N' Astronomy</div>
 <svg class="a" style="left:391px;top:18.5px" width="12" height="12"><path d="M0.5 0.5 L11.5 11.5 M11.5 0.5 L0.5 11.5" stroke="#c0c0c0" stroke-width="1.2"/></svg>
 <div class="t1">ASTAP Warning</div>
 <div class="t2">Warning scale was inaccurate! Set</div>
 <div class="t3">FOV=1,24d, scale=1,7", FL=691mm</div>
 <div class="ts">2024-08-15 22:07:50</div>
 <div class="ft">Fermer tout</div>
</div>
<div class="ntf" style="top:321.5px;height:152.5px">
 <svg class="a" style="left:0;top:0" width="100" height="100" viewBox="1061 167 100 100">
  <g fill="none" stroke="#b8b8b8" stroke-width="1.3"><path d="M1073.5 185.5 V182 H1077 M1090.5 182 H1094 V185.5 M1073.5 195 V198.5 H1077 M1090.5 198.5 H1094 V195"/></g>
  <ellipse cx="1083.8" cy="190.2" rx="7.5" ry="5" transform="rotate(-22 1083.8 190.2)" fill="none" stroke="#3a8ad0" stroke-width="1.8"/>
  <ellipse cx="1084.3" cy="189.5" rx="3.8" ry="2.4" transform="rotate(-22 1084.3 189.5)" fill="none" stroke="#8ab0d0" stroke-width="1.2"/>
  <path d="M1138.3 231.5 A26.2 23.4 0 1 0 1091 249.5 Q1089 252.5 1086.8 254.3 Q1093 255.5 1098.5 252.5 Q1106 256.8 1120.5 256.2" fill="none" stroke="#f2e600" stroke-width="3.2" stroke-linecap="round" stroke-linejoin="round"/>
  <circle cx="1104.5" cy="234.8" r="1.9" fill="#f2e600"/><circle cx="1112" cy="234.8" r="1.9" fill="#f2e600"/><circle cx="1119.4" cy="234.8" r="1.9" fill="#f2e600"/>
  <circle cx="1131.7" cy="246" r="10.8" fill="#2b2b2b" stroke="#f2e600" stroke-width="2"/>
  <path d="M1131.7 238.5 V250.5" stroke="#f2e600" stroke-width="1.6"/><circle cx="1131.7" cy="253.6" r="1" fill="#f2e600"/>
 </svg>
 <div class="hdr">N.I.N.A. - Nighttime Imaging 'N' Astronomy</div>
 <svg class="a" style="left:391px;top:18.5px" width="12" height="12"><path d="M0.5 0.5 L11.5 11.5 M11.5 0.5 L0.5 11.5" stroke="#c0c0c0" stroke-width="1.2"/></svg>
 <div class="t1">ASTAP Warning</div>
 <div class="t2">Warning scale was inaccurate! Set</div>
 <div class="t3">FOV=1,24d, scale=1,7", FL=691mm</div>
 <div class="ts">2024-08-15 22:06:46</div>
 <div class="ft">Fermer tout</div>
</div>
<div class="ntf" style="top:476px;height:152.5px">
 <svg class="a" style="left:0;top:0" width="100" height="100" viewBox="1061 167 100 100">
  <g fill="none" stroke="#b8b8b8" stroke-width="1.3"><path d="M1073.5 185.5 V182 H1077 M1090.5 182 H1094 V185.5 M1073.5 195 V198.5 H1077 M1090.5 198.5 H1094 V195"/></g>
  <ellipse cx="1083.8" cy="190.2" rx="7.5" ry="5" transform="rotate(-22 1083.8 190.2)" fill="none" stroke="#3a8ad0" stroke-width="1.8"/>
  <ellipse cx="1084.3" cy="189.5" rx="3.8" ry="2.4" transform="rotate(-22 1084.3 189.5)" fill="none" stroke="#8ab0d0" stroke-width="1.2"/>
  <path d="M1138.3 231.5 A26.2 23.4 0 1 0 1091 249.5 Q1089 252.5 1086.8 254.3 Q1093 255.5 1098.5 252.5 Q1106 256.8 1120.5 256.2" fill="none" stroke="#f2e600" stroke-width="3.2" stroke-linecap="round" stroke-linejoin="round"/>
  <circle cx="1104.5" cy="234.8" r="1.9" fill="#f2e600"/><circle cx="1112" cy="234.8" r="1.9" fill="#f2e600"/><circle cx="1119.4" cy="234.8" r="1.9" fill="#f2e600"/>
  <circle cx="1131.7" cy="246" r="10.8" fill="#2b2b2b" stroke="#f2e600" stroke-width="2"/>
  <path d="M1131.7 238.5 V250.5" stroke="#f2e600" stroke-width="1.6"/><circle cx="1131.7" cy="253.6" r="1" fill="#f2e600"/>
 </svg>
 <div class="hdr">N.I.N.A. - Nighttime Imaging 'N' Astronomy</div>
 <svg class="a" style="left:391px;top:18.5px" width="12" height="12"><path d="M0.5 0.5 L11.5 11.5 M11.5 0.5 L0.5 11.5" stroke="#c0c0c0" stroke-width="1.2"/></svg>
 <div class="t1">ASTAP Warning</div>
 <div class="t2">Warning scale was inaccurate! Set</div>
 <div class="t3">FOV=1,24d, scale=1,7", FL=691mm</div>
 <div class="ts">2024-08-15 22:06:14</div>
 <div class="ft">Fermer tout</div>
</div>
<div class="ntf" style="top:630.5px;height:152.5px">
 <svg class="a" style="left:0;top:0" width="100" height="100" viewBox="1061 167 100 100">
  <g fill="none" stroke="#b8b8b8" stroke-width="1.3"><path d="M1073.5 185.5 V182 H1077 M1090.5 182 H1094 V185.5 M1073.5 195 V198.5 H1077 M1090.5 198.5 H1094 V195"/></g>
  <ellipse cx="1083.8" cy="190.2" rx="7.5" ry="5" transform="rotate(-22 1083.8 190.2)" fill="none" stroke="#3a8ad0" stroke-width="1.8"/>
  <ellipse cx="1084.3" cy="189.5" rx="3.8" ry="2.4" transform="rotate(-22 1084.3 189.5)" fill="none" stroke="#8ab0d0" stroke-width="1.2"/>
  <path d="M1138.3 231.5 A26.2 23.4 0 1 0 1091 249.5 Q1089 252.5 1086.8 254.3 Q1093 255.5 1098.5 252.5 Q1106 256.8 1120.5 256.2" fill="none" stroke="#f2e600" stroke-width="3.2" stroke-linecap="round" stroke-linejoin="round"/>
  <circle cx="1104.5" cy="234.8" r="1.9" fill="#f2e600"/><circle cx="1112" cy="234.8" r="1.9" fill="#f2e600"/><circle cx="1119.4" cy="234.8" r="1.9" fill="#f2e600"/>
  <circle cx="1131.7" cy="246" r="10.8" fill="#2b2b2b" stroke="#f2e600" stroke-width="2"/>
  <path d="M1131.7 238.5 V250.5" stroke="#f2e600" stroke-width="1.6"/><circle cx="1131.7" cy="253.6" r="1" fill="#f2e600"/>
 </svg>
 <div class="hdr">N.I.N.A. - Nighttime Imaging 'N' Astronomy</div>
 <svg class="a" style="left:391px;top:18.5px" width="12" height="12"><path d="M0.5 0.5 L11.5 11.5 M11.5 0.5 L0.5 11.5" stroke="#c0c0c0" stroke-width="1.2"/></svg>
 <div class="t1">ASTAP Warning</div>
 <div class="t2">Warning scale was inaccurate! Set</div>
 <div class="t3">FOV=1,24d, scale=1,7", FL=690mm</div>
 <div class="ts">2024-08-15 22:05:36</div>
 <div class="ft">Fermer tout</div>
</div>
<!-- TASKBAR -->
<div class="a" style="left:0;top:796px;width:1500px;height:47px;background:linear-gradient(90deg,#e6dfd9 0px,#e4e0dc 400px,#e9e3da 700px,#ede2d2 1000px,#e9e3dc 1250px,#e6e3e0 1500px)"></div>
<svg class="a" style="left:18.5px;top:810px" width="20" height="19" viewBox="0 0 20 19"><path fill="#111" d="M0 2.6 L8.3 1.4 V8.8 H0 Z M9.3 1.3 L19.3 0 V8.8 H9.3 Z M0 9.8 H8.3 V17.2 L0 16 Z M9.3 9.8 H19.3 V18.6 L9.3 17.3 Z"/></svg>
<div class="a" style="left:56.5px;top:796px;width:337px;height:47px;background:#fff;border-left:1px solid #d2d2d2;border-top:1px solid #d8d8d8"></div>
<svg class="a" style="left:66px;top:806px" width="26" height="26" viewBox="66 806 26 26"><circle cx="80" cy="817.5" r="6.8" fill="none" stroke="#222" stroke-width="1.4"/><path d="M75.3 822.5 L70 828.5" stroke="#222" stroke-width="1.5"/></svg>
<div class="a" style="left:103.5px;top:811.5px;font-size:17.85px;color:#3c3c3c;line-height:1">Taper ici pour rechercher</div>
<svg class="a" style="left:408px;top:806px" width="30" height="26" viewBox="408 806 30 26" fill="none" stroke="#222" stroke-width="1.4">
 <path d="M412 810.5 H425.5 M412 827.5 H425.5 M414 813.5 V824.5 M423.5 813.5 V824.5 M412 813.5 H425.5 M412 824.5 H425.5" />
 <path d="M431 810 V815 M431 822 V828" stroke-width="1.2"/><circle cx="431" cy="818.5" r="1.4" fill="#222" stroke="none"/>
</svg>
<svg class="a" style="left:466px;top:806px" width="32" height="26" viewBox="466 806 32 26">
 <path d="M468.7 810 H476 L478 812 H494.9 V829.6 H468.7 Z" fill="#f1b92c"/>
 <rect x="468.7" y="814" width="26.2" height="15.6" fill="#fcd659"/>
 <path d="M472 819 H491.5 V829.6 H487.5 V823 H476 V829.6 H472 Z" fill="#2f8ad6"/>
</svg>
<svg class="a" style="left:524px;top:803px" width="32" height="33" viewBox="524 803 32 33">
 <circle cx="540" cy="819.3" r="13.9" fill="#db4437"/>
 <path d="M540 819.3 L553.9 819.3 A13.9 13.9 0 0 1 533 831.3 Z" fill="#f4c20d"/>
 <path d="M540 819.3 L533 831.3 A13.9 13.9 0 0 1 527.9 812.3 Z" fill="#0f9d58"/>
 <path d="M540 819.3 L527.9 812.3 A13.9 13.9 0 0 1 540 805.4 L552 812.3 Z" fill="#db4437"/>
 <circle cx="540" cy="819.3" r="6.6" fill="#fff"/><circle cx="540" cy="819.3" r="5.2" fill="#4285f4"/>
</svg>
<div class="a" style="left:570px;top:796px;width:57px;height:47px;background:#f3efe9"></div>
<svg class="a" style="left:580px;top:805px" width="36" height="30" viewBox="580 805 36 30">
 <g fill="none" stroke="#c9dbe8" stroke-width="1"><path d="M584 811 V808 H587 M609 808 H612 V811 M584 827 V830 H587 M609 830 H612 V827"/></g>
 <ellipse cx="597.5" cy="819" rx="11.5" ry="7.5" transform="rotate(-22 597.5 819)" fill="none" stroke="#4a8fcf" stroke-width="2.2"/>
 <ellipse cx="598" cy="818" rx="6" ry="3.8" transform="rotate(-22 598 818)" fill="none" stroke="#6ea6d8" stroke-width="1.8"/>
</svg>
<div class="a" style="left:570px;top:840px;width:57px;height:3px;background:#3d2b4a"></div>
<div class="a" style="left:633px;top:840px;width:48px;height:3px;background:#3d2b4a"></div>
<div class="a" style="left:691px;top:840px;width:48px;height:3px;background:#3d2b4a"></div>
<svg class="a" style="left:640px;top:804px" width="34" height="31" viewBox="640 804 34 31">
 <rect x="642.5" y="806" width="27.5" height="27" fill="#0d2654" stroke="#7f8232" stroke-width="1.2"/>
 <path d="M649 809.5 H664 M649 809.5 V829.5 H664 M649 819.5 H658" stroke="#e2d94a" stroke-width="1.8" fill="none"/>
 <g fill="#fff"><circle cx="649" cy="809.5" r="2"/><circle cx="664" cy="809.5" r="2"/><circle cx="649" cy="819.5" r="2"/><circle cx="658" cy="819.5" r="2"/><circle cx="649" cy="829.5" r="2"/><circle cx="664" cy="829.5" r="2"/></g>
</svg>
<svg class="a" style="left:698px;top:804px" width="32" height="31" viewBox="698 804 32 31">
 <defs><linearGradient id="stel" x1="0" y1="0" x2="0" y2="1"><stop offset="0" stop-color="#1e2a6a"/><stop offset="0.6" stop-color="#6a4a9a"/><stop offset="1" stop-color="#c07aa0"/></linearGradient></defs>
 <rect x="700" y="805.6" width="27.6" height="27.6" rx="5" fill="url(#stel)"/>
 <path d="M700 826 Q712 818 727.6 826 V828 A5 5 0 0 1 722.6 833.2 H705 A5 5 0 0 1 700 828 Z" fill="#1a1420"/>
 <path d="M720 810 A6 6 0 1 0 724 818 A5 5 0 0 1 720 810 Z" fill="#f4f0ff"/>
 <circle cx="706" cy="811" r="0.7" fill="#fff"/><circle cx="711" cy="815" r="0.6" fill="#fff"/>
</svg>
<svg class="a" style="left:1200px;top:806px" width="110" height="26" viewBox="1200 806 110 26" fill="none" stroke="#1a1a1a" stroke-width="1.3">
 <path d="M1204.5 823 L1211.5 815.5 L1218.5 823"/>
 <rect x="1235.5" y="814" width="7" height="9.5" rx="1"/><path d="M1242.5 817.5 L1247 815 V822.5 L1242.5 820"/>
 <path d="M1234 812.5 Q1239 809.5 1244 812.5 M1234 825.5 Q1239 828.5 1244 825.5" stroke-width="1"/>
 <circle cx="1267" cy="819.5" r="8.7"/><ellipse cx="1267" cy="819.5" rx="3.8" ry="8.7"/><path d="M1258.3 819.5 H1275.7 M1259.5 815 H1274.5 M1259.5 824 H1274.5"/>
 <circle cx="1273" cy="825" r="4.2" fill="#e8e3dd" stroke-width="1.2"/><path d="M1270.3 827.7 L1275.7 822.3" stroke-width="1.1"/>
 <rect x="1290" y="815" width="13.5" height="8.5" fill="#1a1a1a"/><path d="M1303.5 817.5 H1305.3 V821 H1303.5" stroke-width="1.2"/>
 <path d="M1287.5 813 V818.5 M1289.2 813 V815.5 M1286.5 818.5 H1290" stroke-width="1"/>
</svg>
<div class="a" style="left:1318.5px;top:812.8px;font-size:14px;color:#1a1a1a;line-height:1;transform:scaleX(0.835);transform-origin:0 0">FRA</div>
<div class="a" style="left:1378.5px;top:802.5px;font-size:13px;color:#1a1a1a;line-height:1;letter-spacing:-0.1px">22:16</div>
<div class="a" style="left:1360.5px;top:823.5px;font-size:14px;color:#1a1a1a;line-height:1;letter-spacing:-0.05px">15/08/2024</div>
<svg class="a" style="left:1448px;top:806px" width="36" height="34" viewBox="1448 806 36 34">
 <path d="M1452 810 H1471 V825 H1460 L1456 829 V825 H1452 Z" fill="#111"/>
 <path d="M1455 814 H1468 M1455 817.5 H1468 M1455 821 H1464" stroke="#e8e3de" stroke-width="1.1"/>
 <circle cx="1470" cy="828" r="8.5" fill="#e6e3e0" stroke="#9a9a9a" stroke-width="1.3"/>
 <text x="1470" y="833" text-anchor="middle" font-family="Liberation Sans" font-size="12" fill="#111">1</text>
</svg>
<div class="a" style="left:1494px;top:796px;width:1px;height:47px;background:#bdbab6"></div>
</body></html>
